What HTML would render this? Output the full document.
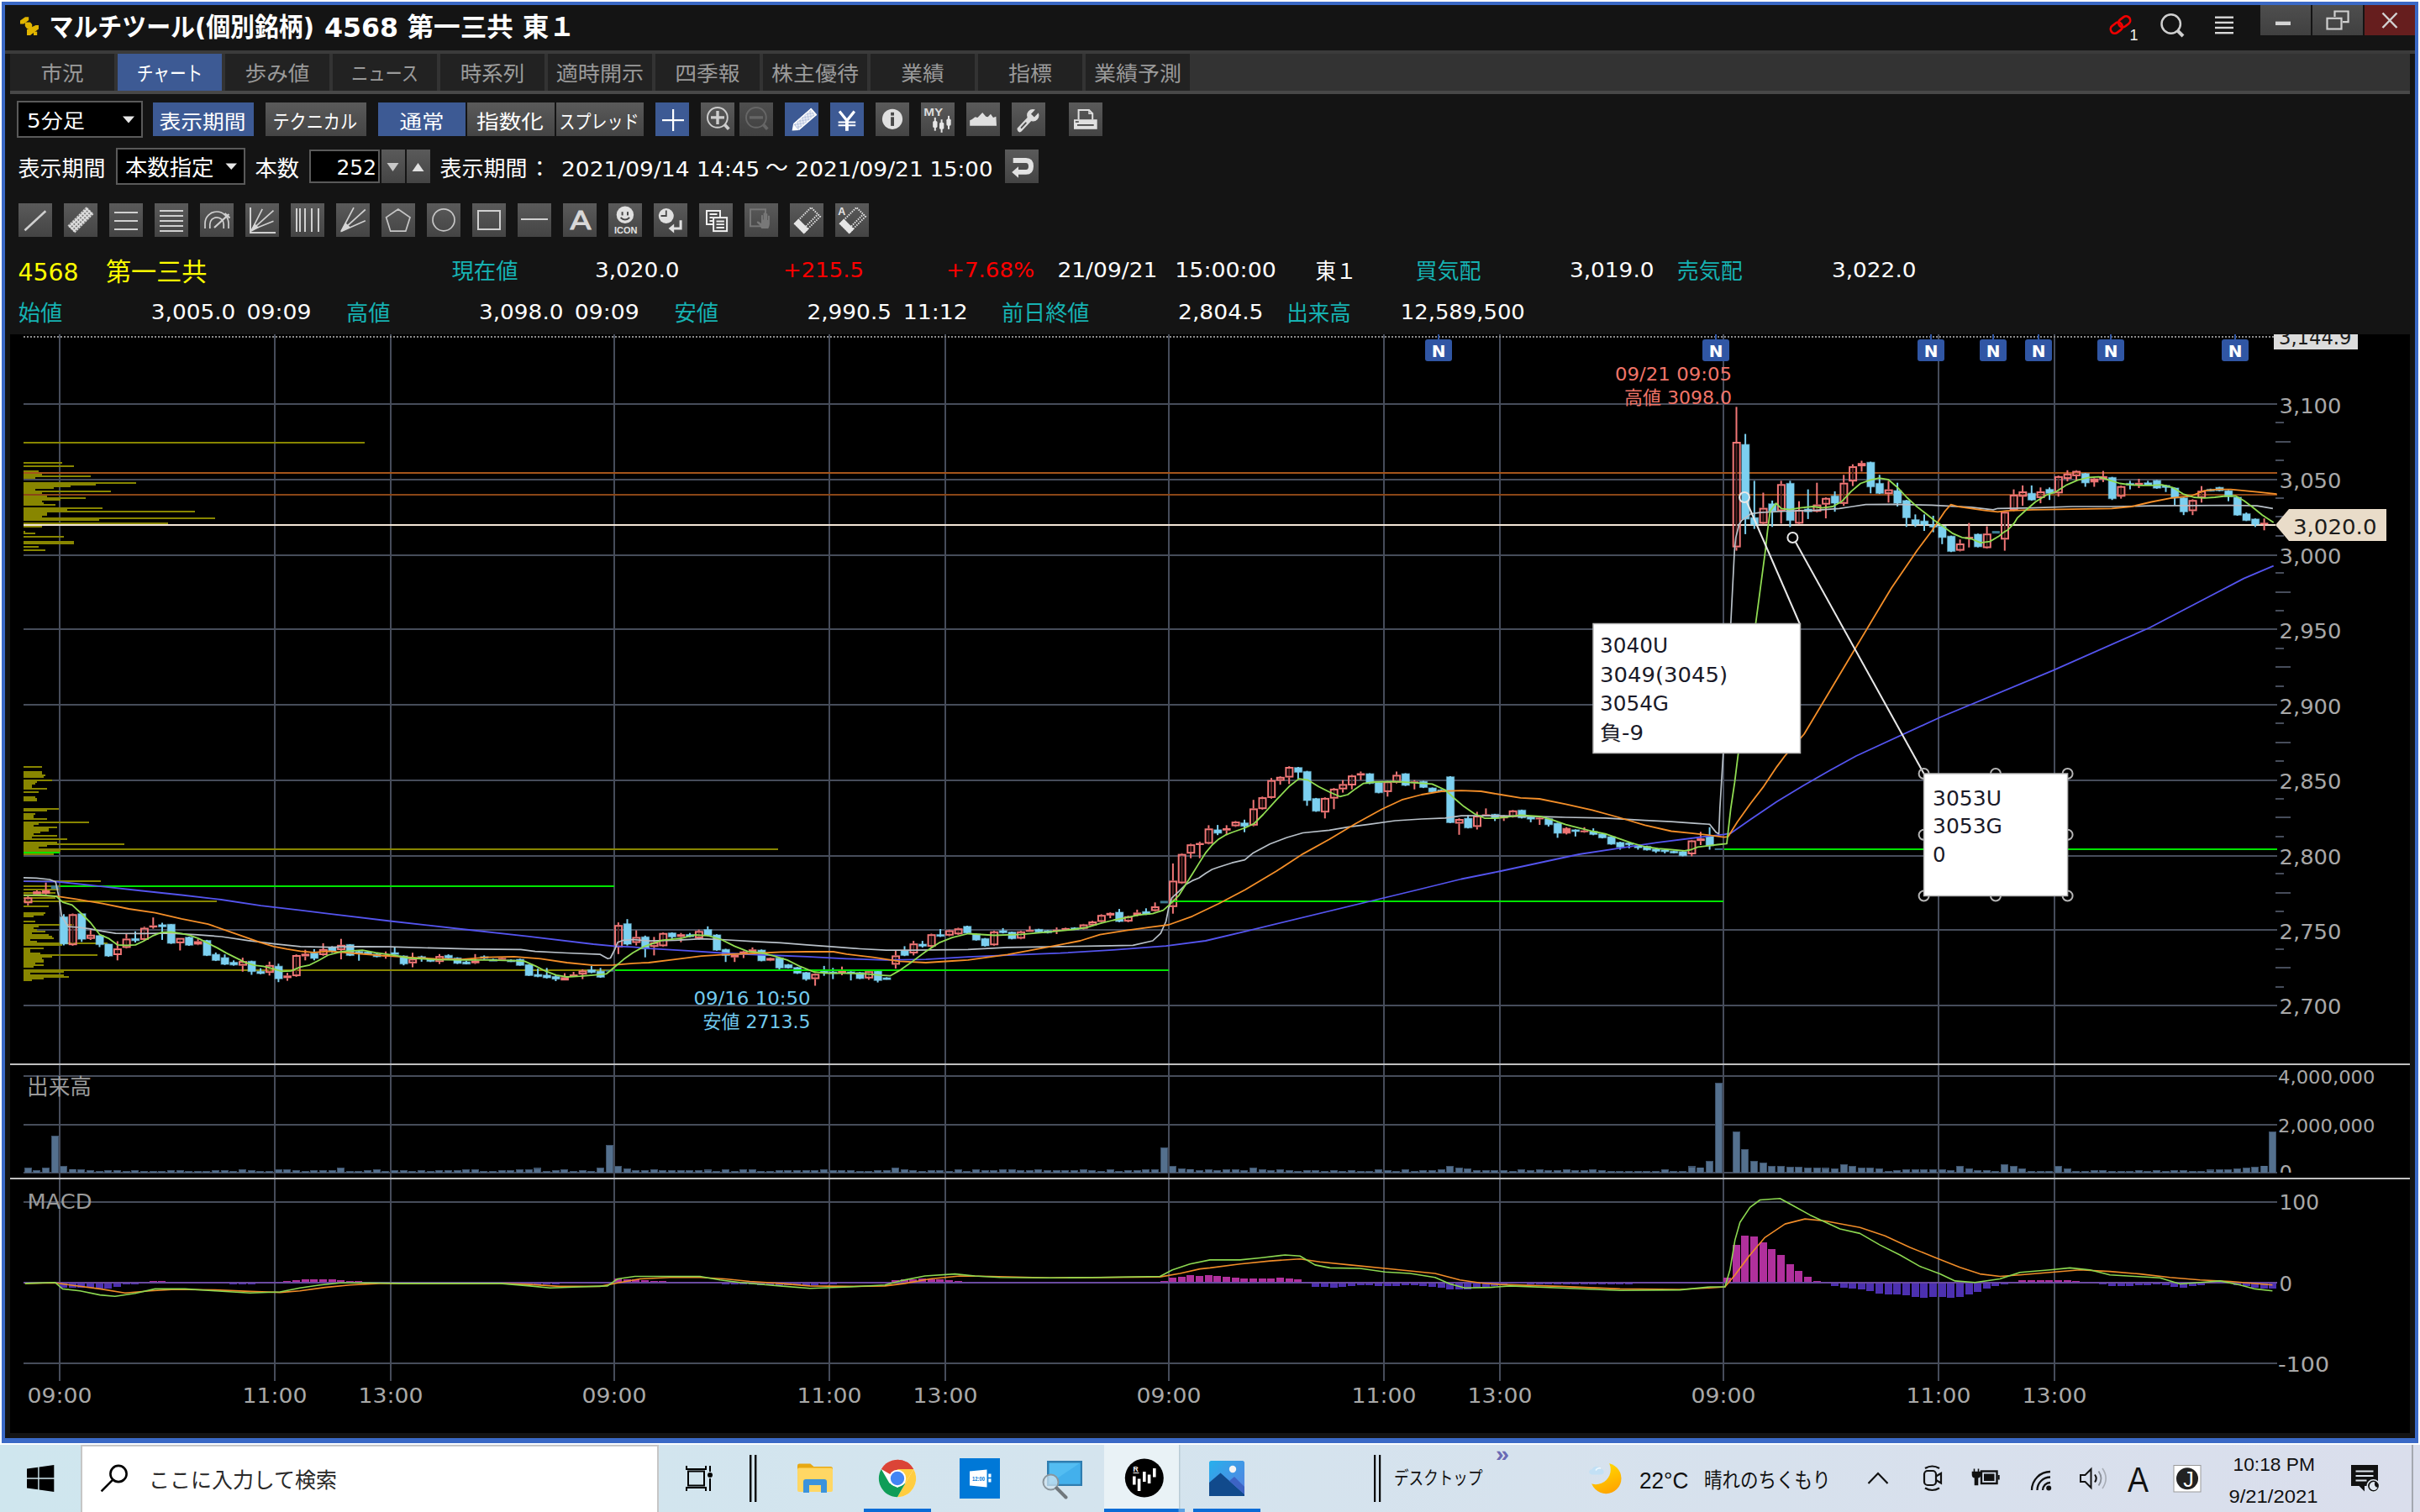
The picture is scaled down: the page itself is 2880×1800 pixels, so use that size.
<!DOCTYPE html>
<html lang="ja"><head><meta charset="utf-8"><title>マルチツール(個別銘柄) 4568 第一三共 東１</title>
<style>
html,body{margin:0;padding:0;background:#fff;overflow:hidden}
body{width:2880px;height:1800px}
svg{display:block}
svg text{white-space:pre}
</style></head><body>
<svg width="2880" height="1800" viewBox="0 0 2880 1800" font-family="'DejaVu Sans','Noto Sans CJK JP',sans-serif">
<rect x="0" y="0" width="2880" height="1800" fill="#ffffff" />
<rect x="2" y="2" width="2876" height="1716" fill="#3a69c6" />
<rect x="6" y="6" width="2868" height="1706" fill="#141414" />
<defs><linearGradient id="gb" x1="0" y1="0" x2="0" y2="1"><stop offset="0" stop-color="#5a5a5a"/><stop offset="1" stop-color="#444444"/></linearGradient><linearGradient id="gbd" x1="0" y1="0" x2="0" y2="1"><stop offset="0" stop-color="#4e4e4e"/><stop offset="1" stop-color="#404040"/></linearGradient><linearGradient id="gtask" x1="0" y1="0" x2="1" y2="0"><stop offset="0" stop-color="#cfe6ee"/><stop offset="0.45" stop-color="#d4e4ee"/><stop offset="1" stop-color="#dadeec"/></linearGradient></defs>
<text x="58.5" y="43.2" font-size="30.7" fill="#fff" font-weight="bold" textLength="315.5" lengthAdjust="spacingAndGlyphs" >マルチツール(個別銘柄)</text>
<text x="386" y="44.2" font-size="32" fill="#fff" font-weight="bold" textLength="88" lengthAdjust="spacingAndGlyphs" >4568</text>
<text x="484.5" y="43.2" font-size="30.7" fill="#fff" font-weight="bold" textLength="126.5" lengthAdjust="spacingAndGlyphs" >第一三共</text>
<text x="622" y="43.2" font-size="30.7" fill="#fff" font-weight="bold" textLength="62.5" lengthAdjust="spacingAndGlyphs" >東１</text>
<rect x="2690" y="6" width="60" height="36" fill="url(#gbd)" />
<rect x="2752" y="6" width="60" height="36" fill="url(#gbd)" />
<rect x="2814" y="6" width="60" height="36" fill="#661e1e" />
<rect x="6" y="60" width="2868" height="4" fill="#3b3b3b" />
<rect x="12" y="64" width="2856" height="44" fill="#333333" />
<rect x="12" y="108" width="2856" height="4" fill="#484848" />
<rect x="12" y="64" width="124" height="44" fill="#222222" />
<rect x="140" y="64" width="124" height="44" fill="#3d5a94" />
<rect x="268" y="64" width="124" height="44" fill="#222222" />
<rect x="396" y="64" width="124" height="44" fill="#222222" />
<rect x="524" y="64" width="124" height="44" fill="#222222" />
<rect x="652" y="64" width="124" height="44" fill="#222222" />
<rect x="780" y="64" width="124" height="44" fill="#222222" />
<rect x="908" y="64" width="124" height="44" fill="#222222" />
<rect x="1036" y="64" width="124" height="44" fill="#222222" />
<rect x="1164" y="64" width="124" height="44" fill="#222222" />
<rect x="1292" y="64" width="124" height="44" fill="#222222" />
<rect x="20" y="120" width="150" height="44" fill="#5a5a5a" />
<rect x="22" y="122" width="146" height="40" fill="#000" />
<rect x="182" y="122" width="120" height="40" fill="#3d5a94" />
<rect x="316" y="122" width="120" height="40" fill="url(#gb)" />
<rect x="450" y="122" width="104" height="40" fill="#3d5a94" />
<rect x="556" y="122" width="104" height="40" fill="url(#gb)" />
<rect x="662" y="122" width="104" height="40" fill="url(#gb)" />
<rect x="780" y="122" width="40" height="40" fill="#3d5a94" />
<rect x="834" y="122" width="40" height="40" fill="url(#gb)" />
<rect x="880" y="122" width="40" height="40" fill="url(#gbd)" />
<rect x="934" y="122" width="40" height="40" fill="#3d5a94" />
<rect x="988" y="122" width="40" height="40" fill="#3d5a94" />
<rect x="1042" y="122" width="40" height="40" fill="url(#gb)" />
<rect x="1096" y="122" width="40" height="40" fill="url(#gb)" />
<rect x="1150" y="122" width="40" height="40" fill="url(#gb)" />
<rect x="1204" y="122" width="40" height="40" fill="url(#gb)" />
<rect x="1272" y="122" width="40" height="40" fill="url(#gb)" />
<rect x="138" y="176" width="154" height="44" fill="#5a5a5a" />
<rect x="140" y="178" width="150" height="40" fill="#000" />
<rect x="368" y="178" width="84" height="40" fill="#5a5a5a" />
<rect x="370" y="180" width="80" height="36" fill="#000" />
<rect x="454" y="178" width="28" height="40" fill="url(#gb)" />
<rect x="484" y="178" width="28" height="40" fill="url(#gb)" />
<rect x="1196" y="178" width="40" height="40" fill="url(#gb)" />
<rect x="22" y="242" width="40" height="40" fill="url(#gb)" />
<rect x="76" y="242" width="40" height="40" fill="url(#gb)" />
<rect x="130" y="242" width="40" height="40" fill="url(#gb)" />
<rect x="184" y="242" width="40" height="40" fill="url(#gb)" />
<rect x="238" y="242" width="40" height="40" fill="url(#gb)" />
<rect x="292" y="242" width="40" height="40" fill="url(#gb)" />
<rect x="346" y="242" width="40" height="40" fill="url(#gb)" />
<rect x="400" y="242" width="40" height="40" fill="url(#gb)" />
<rect x="454" y="242" width="40" height="40" fill="url(#gb)" />
<rect x="508" y="242" width="40" height="40" fill="url(#gb)" />
<rect x="562" y="242" width="40" height="40" fill="url(#gb)" />
<rect x="616" y="242" width="40" height="40" fill="url(#gb)" />
<rect x="670" y="242" width="40" height="40" fill="url(#gb)" />
<rect x="724" y="242" width="40" height="40" fill="url(#gb)" />
<rect x="778" y="242" width="40" height="40" fill="url(#gb)" />
<rect x="832" y="242" width="40" height="40" fill="url(#gb)" />
<rect x="886" y="242" width="40" height="40" fill="url(#gb)" />
<rect x="940" y="242" width="40" height="40" fill="url(#gb)" />
<rect x="994" y="242" width="40" height="40" fill="url(#gb)" />
<text x="74" y="96" font-size="24.4" fill="#9a9a9a" textLength="51.2" lengthAdjust="spacingAndGlyphs" text-anchor="middle" >市況</text>
<text x="202" y="96" font-size="24.4" fill="#fff" textLength="78.5" lengthAdjust="spacingAndGlyphs" text-anchor="middle" >チャート</text>
<text x="330" y="96" font-size="24.4" fill="#9a9a9a" textLength="77" lengthAdjust="spacingAndGlyphs" text-anchor="middle" >歩み値</text>
<text x="458" y="96" font-size="24.4" fill="#9a9a9a" textLength="80" lengthAdjust="spacingAndGlyphs" text-anchor="middle" >ニュース</text>
<text x="586" y="96" font-size="24.4" fill="#9a9a9a" textLength="76.5" lengthAdjust="spacingAndGlyphs" text-anchor="middle" >時系列</text>
<text x="714" y="96" font-size="24.4" fill="#9a9a9a" textLength="104.5" lengthAdjust="spacingAndGlyphs" text-anchor="middle" >適時開示</text>
<text x="842" y="96" font-size="24.4" fill="#9a9a9a" textLength="77.3" lengthAdjust="spacingAndGlyphs" text-anchor="middle" >四季報</text>
<text x="970" y="96" font-size="24.4" fill="#9a9a9a" textLength="104" lengthAdjust="spacingAndGlyphs" text-anchor="middle" >株主優待</text>
<text x="1098" y="96" font-size="24.4" fill="#9a9a9a" textLength="51.4" lengthAdjust="spacingAndGlyphs" text-anchor="middle" >業績</text>
<text x="1226" y="96" font-size="24.4" fill="#9a9a9a" textLength="52" lengthAdjust="spacingAndGlyphs" text-anchor="middle" >指標</text>
<text x="1354" y="96" font-size="24.4" fill="#9a9a9a" textLength="104" lengthAdjust="spacingAndGlyphs" text-anchor="middle" >業績予測</text>
<text x="32" y="151.6" font-size="22.5" fill="#fff" textLength="69" lengthAdjust="spacingAndGlyphs" >5分足</text>
<text x="189.5" y="153.2" font-size="22.5" fill="#fff" textLength="103" lengthAdjust="spacingAndGlyphs" >表示期間</text>
<text x="324.5" y="153.2" font-size="22.5" fill="#fff" textLength="100.5" lengthAdjust="spacingAndGlyphs" >テクニカル</text>
<text x="475.5" y="153.2" font-size="22.5" fill="#fff" textLength="53" lengthAdjust="spacingAndGlyphs" >通常</text>
<text x="567" y="153.2" font-size="22.5" fill="#fff" textLength="80" lengthAdjust="spacingAndGlyphs" >指数化</text>
<text x="665.5" y="153.2" font-size="22.5" fill="#fff" textLength="95" lengthAdjust="spacingAndGlyphs" >スプレッド</text>
<path d="M146,138.5 h14 l-7,8 z" fill="#e8e8e8"/>
<text x="21.5" y="210.3" font-size="25.6" fill="#fff" textLength="104" lengthAdjust="spacingAndGlyphs" >表示期間</text>
<text x="149" y="208.5" font-size="25.6" fill="#fff" textLength="105.5" lengthAdjust="spacingAndGlyphs" >本数指定</text>
<path d="M268.5,194.5 h13.5 l-6.75,7.5 z" fill="#e8e8e8"/>
<text x="303.5" y="210.3" font-size="25.6" fill="#fff" textLength="52.5" lengthAdjust="spacingAndGlyphs" >本数</text>
<text x="400.5" y="207.5" font-size="24.6" fill="#fff" textLength="47.5" lengthAdjust="spacingAndGlyphs" >252</text>
<path d="M460.5,194 h14 l-7,10 z" fill="#c8c8c8"/>
<path d="M490.5,204 h14 l-7,-10 z" fill="#e0e0e0"/>
<text x="523.5" y="210.3" font-size="25.6" fill="#fff" textLength="104" lengthAdjust="spacingAndGlyphs" >表示期間</text>
<text x="629.5" y="210.3" font-size="25.6" fill="#fff" >：</text>
<text x="668" y="209.5" font-size="24.6" fill="#fff" textLength="152.5" lengthAdjust="spacingAndGlyphs" >2021/09/14</text>
<text x="829" y="209.5" font-size="24.6" fill="#fff" textLength="75" lengthAdjust="spacingAndGlyphs" >14:45</text>
<text x="911" y="209" font-size="25.6" fill="#fff" textLength="27" lengthAdjust="spacingAndGlyphs" >～</text>
<text x="946.3" y="209.5" font-size="24.6" fill="#fff" textLength="152.5" lengthAdjust="spacingAndGlyphs" >2021/09/21</text>
<text x="1106.5" y="209.5" font-size="24.6" fill="#fff" textLength="75" lengthAdjust="spacingAndGlyphs" >15:00</text>
<text x="21.5" y="333.7" font-size="28" fill="#ffff00" textLength="72" lengthAdjust="spacingAndGlyphs" >4568</text>
<text x="126" y="334" font-size="29.6" fill="#ffff00" textLength="120.5" lengthAdjust="spacingAndGlyphs" >第一三共</text>
<text x="537.5" y="331.5" font-size="26" fill="#16b2b2" textLength="79" lengthAdjust="spacingAndGlyphs" >現在値</text>
<text x="708" y="330" font-size="24.6" fill="#fff" textLength="100.5" lengthAdjust="spacingAndGlyphs" >3,020.0</text>
<text x="932" y="330" font-size="24.6" fill="#ff0000" textLength="96" lengthAdjust="spacingAndGlyphs" >+215.5</text>
<text x="1126" y="330" font-size="24.6" fill="#ff0000" textLength="105" lengthAdjust="spacingAndGlyphs" >+7.68%</text>
<text x="1258.4" y="330" font-size="24.6" fill="#fff" textLength="119" lengthAdjust="spacingAndGlyphs" >21/09/21</text>
<text x="1398.3" y="330" font-size="24.6" fill="#fff" textLength="120.5" lengthAdjust="spacingAndGlyphs" >15:00:00</text>
<text x="1565.5" y="331.5" font-size="26" fill="#fff" textLength="49" lengthAdjust="spacingAndGlyphs" >東１</text>
<text x="1684.5" y="331.5" font-size="26" fill="#16b2b2" textLength="78" lengthAdjust="spacingAndGlyphs" >買気配</text>
<text x="1868" y="330" font-size="24.6" fill="#fff" textLength="100.5" lengthAdjust="spacingAndGlyphs" >3,019.0</text>
<text x="1995.8" y="331.5" font-size="26" fill="#16b2b2" textLength="78" lengthAdjust="spacingAndGlyphs" >売気配</text>
<text x="2180" y="330" font-size="24.6" fill="#fff" textLength="100.5" lengthAdjust="spacingAndGlyphs" >3,022.0</text>
<text x="21.8" y="381.5" font-size="26" fill="#16b2b2" textLength="52.5" lengthAdjust="spacingAndGlyphs" >始値</text>
<text x="179.8" y="380" font-size="24.6" fill="#fff" textLength="100.5" lengthAdjust="spacingAndGlyphs" >3,005.0</text>
<text x="293.6" y="380" font-size="24.6" fill="#fff" textLength="77" lengthAdjust="spacingAndGlyphs" >09:09</text>
<text x="411.9" y="381.5" font-size="26" fill="#16b2b2" textLength="52.5" lengthAdjust="spacingAndGlyphs" >高値</text>
<text x="570" y="380" font-size="24.6" fill="#fff" textLength="100.5" lengthAdjust="spacingAndGlyphs" >3,098.0</text>
<text x="683.8" y="380" font-size="24.6" fill="#fff" textLength="77" lengthAdjust="spacingAndGlyphs" >09:09</text>
<text x="802.5" y="381.5" font-size="26" fill="#16b2b2" textLength="52.5" lengthAdjust="spacingAndGlyphs" >安値</text>
<text x="960.5" y="380" font-size="24.6" fill="#fff" textLength="100.5" lengthAdjust="spacingAndGlyphs" >2,990.5</text>
<text x="1074.7" y="380" font-size="24.6" fill="#fff" textLength="77" lengthAdjust="spacingAndGlyphs" >11:12</text>
<text x="1192" y="381.5" font-size="26" fill="#16b2b2" textLength="104.5" lengthAdjust="spacingAndGlyphs" >前日終値</text>
<text x="1402" y="380" font-size="24.6" fill="#fff" textLength="101.5" lengthAdjust="spacingAndGlyphs" >2,804.5</text>
<text x="1531.2" y="381.5" font-size="26" fill="#16b2b2" textLength="76.5" lengthAdjust="spacingAndGlyphs" >出来高</text>
<text x="1666.8" y="380" font-size="24.6" fill="#fff" textLength="148" lengthAdjust="spacingAndGlyphs" >12,589,500</text>
<g fill="#e0b400"><path d="M24,24.6 L30,20.2 H34.2 V24 L28.2,28.4 H24 Z"/><path d="M29.8,26.4 H36 L38.2,29 V34 H32 L29.8,31 Z"/><path d="M32,35 L42.5,30 H46 V34.5 L36,42 H32 Z"/><path d="M40,37.6 H44.2 V42 H40 Z"/></g>
<g stroke="#f00000" stroke-width="2.7" fill="none" transform="translate(2523.5,29.5) rotate(-38)"><rect x="-13.5" y="-5" width="15" height="10" rx="5"/><rect x="-1.5" y="-5" width="15" height="10" rx="5"/></g>
<text x="2534.5" y="48" font-size="18" fill="#f0f0f0" font-family="'Liberation Sans','Noto Sans CJK JP',sans-serif" >1</text>
<g stroke="#cfcfcf" stroke-width="2.5" fill="none"><circle cx="2583.7" cy="28.5" r="11.2"/><path d="M2591.5,36.5 L2598,43" stroke-width="4"/></g>
<rect x="2636" y="19.5" width="22" height="2.4" fill="#d8d8d8" />
<rect x="2636" y="25.7" width="22" height="2.4" fill="#d8d8d8" />
<rect x="2636" y="31.8" width="22" height="2.4" fill="#d8d8d8" />
<rect x="2636" y="38" width="22" height="2.4" fill="#d8d8d8" />
<rect x="2708" y="25.6" width="18" height="4.4" fill="#d4d4d4" />
<g stroke="#cfcfcf" stroke-width="2.2" fill="none"><path d="M2778.5,20 V13.5 H2794.6 V26.2 H2788"/><rect x="2769.5" y="21.8" width="17" height="12.7"/></g>
<g stroke="#d2d2d2" stroke-width="2.5" stroke-linecap="butt"><path d="M2835.5,15.5 L2852.5,33 M2852.5,15.5 L2835.5,33"/></g>
<rect x="788" y="142" width="26" height="2.2" fill="#fff" />
<rect x="800" y="130" width="2.2" height="26" fill="#fff" />
<g stroke="#cdcdcd" fill="none"><circle cx="853.9" cy="139.9" r="11.9" stroke-width="1.9"/><path d="M846,139.9 h16 M854,132 v16" stroke-width="3.4"/><path d="M862.3,148.3 L867.3,153.8" stroke-width="3.8"/></g>
<g stroke="#666666" fill="none"><circle cx="899.9" cy="139.9" r="11.9" stroke-width="1.9"/><path d="M892,139.9 h16" stroke-width="3.4"/><path d="M908.3,148.3 L913.3,153.8" stroke-width="3.8"/></g>
<defs><pattern id="hat" width="2" height="2" patternUnits="userSpaceOnUse"><rect width="2" height="2" fill="#fff"/><rect width="1" height="1" fill="#a4b4d6"/><rect x="1" y="1" width="1" height="1" fill="#a4b4d6"/></pattern></defs>
<g transform="translate(942.6,155.4) rotate(-41)"><path d="M0,0 L6.5,-5.2 L6.5,5.2 Z" fill="#fff"/><rect x="6.5" y="-5.2" width="28" height="10.4" fill="url(#hat)"/><rect x="6.5" y="-5.2" width="28" height="1.3" fill="#fff"/><rect x="6.5" y="3.9" width="28" height="1.3" fill="#fff"/><rect x="33" y="-5.2" width="1.8" height="10.4" fill="#fff"/></g>
<g stroke="#fff" fill="none"><path d="M999,132.6 L1007.9,143.6 L1016.8,132.6" stroke-width="3.2"/><path d="M1007.9,142.5 V155.8" stroke-width="3.8"/><path d="M997.6,145.5 h20.6 M997.6,149.2 h20.6" stroke-width="2"/></g>
<circle cx="1062" cy="141.8" r="12.1" fill="#e0e0e0"/>
<rect x="1060.1" y="133.8" width="3.9" height="3.8" fill="#484848" />
<rect x="1060.1" y="139.3" width="3.9" height="10.6" fill="#484848" />
<text x="1099.3" y="137.7" font-size="12.8" fill="#dcdcdc" font-family="'Liberation Sans','Noto Sans CJK JP',sans-serif" font-weight="bold" textLength="23" lengthAdjust="spacingAndGlyphs" >MY</text>
<rect x="1111.8" y="139.9" width="2" height="15.8" fill="#e6e6e6" />
<rect x="1110.2" y="144" width="5.3" height="8.0" rx="1.6" fill="#e6e6e6"/>
<rect x="1119.6" y="142.2" width="2" height="15.6" fill="#e6e6e6" />
<rect x="1118" y="145.7" width="5.3" height="8.1" rx="1.6" fill="#e6e6e6"/>
<rect x="1128" y="137.9" width="2" height="15.9" fill="#e6e6e6" />
<rect x="1126.4" y="141.6" width="5.3" height="8.1" rx="1.6" fill="#e6e6e6"/>
<path d="M1154.2,149.7 V143.3 L1156.5,142.2 L1160.5,139.3 L1163.4,139.9 L1169.2,134.1 L1173.3,138.7 L1175.6,139.3 L1179,135.8 L1182,139.9 L1185.4,138.7 L1186,149.7 Z" fill="#e0e0e0"/>
<g transform="translate(1223.5,143.5) rotate(-47)"><path d="M-15,-3.1 H4 V3.1 H-15 q-2.6,-0.3 -2.6,-3.1 q0,-2.8 2.6,-3.1 z" fill="#dcdcdc"/><circle cx="8.5" cy="0" r="7.2" fill="#dcdcdc"/><rect x="8" y="-2.7" width="9" height="5.4" fill="#4f4f4f"/><rect x="-12.5" y="-1" width="9.5" height="2" rx="1" fill="#4f4f4f"/></g>
<path d="M1283.6,142.2 V131 H1296 L1300.2,135.2 V142.2" fill="none" stroke="#e0e0e0" stroke-width="2"/><path d="M1296,131 V135.2 H1300.2" fill="none" stroke="#e0e0e0" stroke-width="1.4"/>
<rect x="1278" y="142.2" width="27.7" height="11.6" fill="#e0e0e0" />
<rect x="1282" y="148" width="19.7" height="1.8" fill="#484848" />
<rect x="1279.8" y="144.2" width="4" height="1.6" fill="#484848" />
<path d="M1205.7,188 H1221 Q1230,188 1230,198 Q1230,207.8 1221,207.8 H1212 V211.8 L1204.2,205 L1212,198.2 V201.9 H1221 Q1224,201.9 1224,198 Q1224,194 1221,194 H1205.7 Z" fill="#e2e2e2"/>
<g stroke="#d0d0d0" fill="none" stroke-width="2.2">
<path d="M29.5,274.3 L54.3,251.2" stroke-width="2.6"/>
</g>
<defs><pattern id="rul" width="3.6" height="3.6" patternUnits="userSpaceOnUse"><rect width="3.6" height="3.6" fill="#dcdcdc"/><rect x="1" y="1" width="1.5" height="1.5" fill="#4e4e4e"/></pattern></defs>
<g transform="translate(96,261.8) rotate(-45)"><rect x="-16" y="-6.2" width="32" height="12.4" fill="url(#rul)"/></g>
<g stroke="#d0d0d0" fill="none" stroke-width="2.3" shape-rendering="crispEdges">
<path d="M136,253 H164"/>
<path d="M136,263 H164"/>
<path d="M136,273 H164"/>
<path d="M190,251 H218"/>
<path d="M190,257 H218"/>
<path d="M190,263 H218"/>
<path d="M190,269 H218"/>
<path d="M190,275 H218"/>
<path d="M353,248 V275.8" stroke-width="2"/>
<path d="M356.8,248 V275.8" stroke-width="2"/>
<path d="M363,248 V275.8" stroke-width="2"/>
<path d="M371,248 V275.8" stroke-width="2"/>
<path d="M379,248 V275.8" stroke-width="2"/>
<rect x="569" y="250.8" width="26" height="22.4"/>
<path d="M620,261 H652"/>
<path d="M297.6,246.6 V276.7 H327.8" stroke-width="2.2"/>
</g>
<g stroke="#d0d0d0" fill="none" stroke-width="1.7">
<path d="M244,272 V266 A14,14 0 0 1 272,266 V272" /><path d="M249.8,272 V267 A8.2,8.2 0 0 1 266.2,267 V272"/><path d="M255,271 L272.5,255 M267.5,254 L273.5,259.5" stroke-width="2.2"/>
<path d="M299.5,273.8 L312.2,248.9 M299.5,273.8 L325.5,250.6 M299.5,273.8 L325.5,263.3"/><path d="M297,277 L303,266 L308,271 Z" fill="#d6d6d6" stroke="none"/>
<path d="M406,275.5 L421,247.1 M406,275.5 L434.8,249.5 M406,275.5 L434.8,262.8"/><path d="M405,276.5 L411,265 L417,270.5 Z" fill="#d6d6d6" stroke="none"/>
<path d="M473.8,249 L488,258.8 L482.8,275.2 H464.7 L459.6,258.8 Z" stroke="#c6c6c6"/>
<circle cx="528" cy="261.8" r="13" stroke="#c6c6c6"/>
</g>
<text x="690.9" y="273.4" font-size="31" fill="#d8d8d8" textLength="25.5" lengthAdjust="spacingAndGlyphs" text-anchor="middle" stroke="#d8d8d8" stroke-width="0.8">A</text>
<circle cx="743.9" cy="255.8" r="10.2" fill="#e0e0e0"/>
<rect x="739.6" y="252.2" width="2" height="4.2" fill="#484848" />
<rect x="746" y="252.2" width="2" height="4.2" fill="#484848" />
<path d="M738.6,259 q5.3,5 10.6,0" fill="none" stroke="#484848" stroke-width="2"/>
<text x="731" y="278" font-size="10.6" fill="#e2e2e2" font-family="'Liberation Sans','Noto Sans CJK JP',sans-serif" font-weight="bold" textLength="27.5" lengthAdjust="spacingAndGlyphs" >ICON</text>
<circle cx="792.8" cy="257" r="9" fill="#e0e0e0"/><path d="M792.8,250.5 V257 H786.5" fill="none" stroke="#484848" stroke-width="1.8"/>
<path d="M810.1,262.2 V272 H801" fill="none" stroke="#e0e0e0" stroke-width="3"/><path d="M795.6,272 L802.2,266.6 V277.4 Z" fill="#e0e0e0"/>
<g fill="#4c4c4c" stroke="#efefef" stroke-width="2"><rect x="841" y="251" width="16" height="16"/><rect x="849.1" y="259.1" width="16" height="16"/></g>
<g stroke="#efefef" stroke-width="1.8"><path d="M844.5,255 h9 M844.5,259 h3.5 M844.5,263 h3.5 M852.5,263.5 h9.4 M852.5,267.2 h9.4 M852.5,271 h9.4"/></g>
<rect x="893" y="249.3" width="18" height="20" fill="none" stroke="#767676" stroke-width="2"/>
<path d="M904,268 q-3,-2.6 -3.4,-3.6 q0.8,-1.6 3,-0.2 l2.4,1.8 v-9.5 q0.9,-1.6 1.9,0 v5 h0.7 v-7.5 q1,-1.6 2,0 v7.5 h0.7 v-6.8 q1,-1.6 2,0 v7.2 h0.7 v-4.8 q1,-1.4 1.9,0 v9.2 q0,3 -1.6,5.6 h-8 z" fill="#787878"/>
<g transform="translate(961,262) rotate(-45)"><rect x="-13.6" y="-7.6" width="27.2" height="15.2" fill="none" stroke="#e4e4e4" stroke-width="2" stroke-dasharray="1.5 1.3"/><path d="M-6.6,3.9 H13.6" stroke="#e4e4e4" stroke-width="2" stroke-dasharray="1.5 1.3" fill="none"/><rect x="-14.6" y="-8.6" width="8" height="17.2" fill="#e6e6e6"/></g>
<g transform="translate(1015,262) rotate(-45)"><rect x="-13.6" y="-7.6" width="27.2" height="15.2" fill="none" stroke="#e4e4e4" stroke-width="2" stroke-dasharray="1.5 1.3"/><path d="M-6.6,3.9 H13.6" stroke="#e4e4e4" stroke-width="2" stroke-dasharray="1.5 1.3" fill="none"/><rect x="-14.6" y="-8.6" width="8" height="17.2" fill="#e6e6e6"/></g>
<text x="997.3" y="256" font-size="12.5" fill="#e6e6e6" font-family="'Liberation Sans','Noto Sans CJK JP',sans-serif" font-weight="bold" >A</text>
<g id="chart">
<rect x="12" y="398" width="2856" height="1308" fill="#000" />
<g shape-rendering="crispEdges">
<rect x="70" y="398" width="2" height="1246" fill="#464c5a" />
<rect x="326" y="398" width="2" height="1246" fill="#464c5a" />
<rect x="464" y="398" width="2" height="1246" fill="#464c5a" />
<rect x="730" y="398" width="2" height="1246" fill="#464c5a" />
<rect x="986" y="398" width="2" height="1246" fill="#464c5a" />
<rect x="1124" y="398" width="2" height="1246" fill="#464c5a" />
<rect x="1390" y="398" width="2" height="1246" fill="#464c5a" />
<rect x="1646" y="398" width="2" height="1246" fill="#464c5a" />
<rect x="1784" y="398" width="2" height="1246" fill="#464c5a" />
<rect x="2050" y="398" width="2" height="1246" fill="#464c5a" />
<rect x="2306" y="398" width="2" height="1246" fill="#464c5a" />
<rect x="2444" y="398" width="2" height="1246" fill="#464c5a" />
<rect x="28" y="480" width="2682" height="2" fill="#464c5a" />
<rect x="28" y="570" width="2682" height="2" fill="#464c5a" />
<rect x="28" y="660" width="2682" height="2" fill="#464c5a" />
<rect x="28" y="748" width="2682" height="2" fill="#464c5a" />
<rect x="28" y="838" width="2682" height="2" fill="#464c5a" />
<rect x="28" y="928" width="2682" height="2" fill="#464c5a" />
<rect x="28" y="1018" width="2682" height="2" fill="#464c5a" />
<rect x="28" y="1106" width="2682" height="2" fill="#464c5a" />
<rect x="28" y="1196" width="2682" height="2" fill="#464c5a" />
<rect x="2708" y="502" width="10" height="2" fill="#464c5a" />
<rect x="2708" y="525" width="18" height="2" fill="#464c5a" />
<rect x="2708" y="547" width="10" height="2" fill="#464c5a" />
<rect x="2708" y="592" width="10" height="2" fill="#464c5a" />
<rect x="2708" y="614" width="18" height="2" fill="#464c5a" />
<rect x="2708" y="637" width="10" height="2" fill="#464c5a" />
<rect x="2708" y="681" width="10" height="2" fill="#464c5a" />
<rect x="2708" y="704" width="18" height="2" fill="#464c5a" />
<rect x="2708" y="726" width="10" height="2" fill="#464c5a" />
<rect x="2708" y="771" width="10" height="2" fill="#464c5a" />
<rect x="2708" y="793" width="18" height="2" fill="#464c5a" />
<rect x="2708" y="816" width="10" height="2" fill="#464c5a" />
<rect x="2708" y="860" width="10" height="2" fill="#464c5a" />
<rect x="2708" y="883" width="18" height="2" fill="#464c5a" />
<rect x="2708" y="905" width="10" height="2" fill="#464c5a" />
<rect x="2708" y="950" width="10" height="2" fill="#464c5a" />
<rect x="2708" y="972" width="18" height="2" fill="#464c5a" />
<rect x="2708" y="995" width="10" height="2" fill="#464c5a" />
<rect x="2708" y="1039" width="10" height="2" fill="#464c5a" />
<rect x="2708" y="1062" width="18" height="2" fill="#464c5a" />
<rect x="2708" y="1084" width="10" height="2" fill="#464c5a" />
<rect x="2708" y="1129" width="10" height="2" fill="#464c5a" />
<rect x="2708" y="1151" width="18" height="2" fill="#464c5a" />
<rect x="2708" y="1174" width="10" height="2" fill="#464c5a" />
<rect x="28" y="1280" width="2682" height="2" fill="#464c5a" />
<rect x="28" y="1338" width="2682" height="2" fill="#464c5a" />
<rect x="28" y="1430" width="2682" height="2" fill="#464c5a" />
<rect x="28" y="1526" width="2682" height="2" fill="#464c5a" />
<rect x="28" y="1622" width="2682" height="2" fill="#464c5a" />
<path d="M28,401 H2706" stroke="#8c8c8c" stroke-width="2" stroke-dasharray="2 2" fill="none"/>
</g>
<g shape-rendering="crispEdges">
<rect x="28" y="1395" width="2682" height="2" fill="#464c5a" />
<rect x="28" y="526" width="406" height="2" fill="#888600" />
<rect x="28" y="550" width="46" height="2" fill="#888600" />
<rect x="28" y="554" width="60" height="2" fill="#888600" />
<rect x="28" y="560" width="18" height="2" fill="#888600" />
<rect x="28" y="564" width="22" height="2" fill="#888600" />
<rect x="28" y="566" width="80" height="2" fill="#888600" />
<rect x="28" y="568" width="14" height="2" fill="#888600" />
<rect x="28" y="574" width="134" height="2" fill="#888600" />
<rect x="28" y="576" width="86" height="2" fill="#888600" />
<rect x="28" y="578" width="56" height="2" fill="#888600" />
<rect x="28" y="580" width="36" height="2" fill="#888600" />
<rect x="28" y="582" width="14" height="2" fill="#888600" />
<rect x="28" y="584" width="104" height="2" fill="#888600" />
<rect x="28" y="586" width="22" height="2" fill="#888600" />
<rect x="28" y="588" width="90" height="2" fill="#888600" />
<rect x="28" y="590" width="28" height="2" fill="#888600" />
<rect x="28" y="592" width="74" height="2" fill="#888600" />
<rect x="28" y="594" width="44" height="2" fill="#888600" />
<rect x="28" y="596" width="22" height="2" fill="#888600" />
<rect x="28" y="598" width="24" height="2" fill="#888600" />
<rect x="28" y="600" width="38" height="2" fill="#888600" />
<rect x="28" y="604" width="94" height="2" fill="#888600" />
<rect x="28" y="606" width="52" height="2" fill="#888600" />
<rect x="28" y="608" width="204" height="2" fill="#888600" />
<rect x="28" y="610" width="28" height="2" fill="#888600" />
<rect x="28" y="612" width="28" height="2" fill="#888600" />
<rect x="28" y="614" width="22" height="2" fill="#888600" />
<rect x="28" y="616" width="228" height="2" fill="#888600" />
<rect x="28" y="618" width="90" height="2" fill="#888600" />
<rect x="28" y="622" width="172" height="2" fill="#888600" />
<rect x="28" y="626" width="22" height="2" fill="#888600" />
<rect x="28" y="632" width="2" height="2" fill="#888600" />
<rect x="28" y="634" width="14" height="2" fill="#888600" />
<rect x="28" y="638" width="48" height="2" fill="#888600" />
<rect x="28" y="644" width="60" height="2" fill="#888600" />
<rect x="28" y="646" width="60" height="2" fill="#888600" />
<rect x="28" y="650" width="18" height="2" fill="#888600" />
<rect x="28" y="654" width="26" height="2" fill="#888600" />
<rect x="28" y="912" width="22" height="2" fill="#888600" />
<rect x="28" y="918" width="22" height="2" fill="#888600" />
<rect x="28" y="920" width="22" height="2" fill="#888600" />
<rect x="28" y="922" width="26" height="2" fill="#888600" />
<rect x="28" y="924" width="24" height="2" fill="#888600" />
<rect x="28" y="928" width="34" height="2" fill="#888600" />
<rect x="28" y="930" width="16" height="2" fill="#888600" />
<rect x="28" y="932" width="14" height="2" fill="#888600" />
<rect x="28" y="934" width="10" height="2" fill="#888600" />
<rect x="28" y="936" width="10" height="2" fill="#888600" />
<rect x="28" y="938" width="28" height="2" fill="#888600" />
<rect x="28" y="942" width="18" height="2" fill="#888600" />
<rect x="28" y="948" width="14" height="2" fill="#888600" />
<rect x="28" y="950" width="16" height="2" fill="#888600" />
<rect x="28" y="952" width="16" height="2" fill="#888600" />
<rect x="28" y="962" width="42" height="2" fill="#888600" />
<rect x="28" y="964" width="28" height="2" fill="#888600" />
<rect x="28" y="968" width="14" height="2" fill="#888600" />
<rect x="28" y="970" width="12" height="2" fill="#888600" />
<rect x="28" y="972" width="12" height="2" fill="#888600" />
<rect x="28" y="974" width="28" height="2" fill="#888600" />
<rect x="28" y="978" width="78" height="2" fill="#888600" />
<rect x="28" y="980" width="18" height="2" fill="#888600" />
<rect x="28" y="982" width="12" height="2" fill="#888600" />
<rect x="28" y="984" width="40" height="2" fill="#888600" />
<rect x="28" y="986" width="30" height="2" fill="#888600" />
<rect x="28" y="988" width="30" height="2" fill="#888600" />
<rect x="28" y="990" width="20" height="2" fill="#888600" />
<rect x="28" y="992" width="12" height="2" fill="#888600" />
<rect x="28" y="994" width="40" height="2" fill="#888600" />
<rect x="28" y="996" width="10" height="2" fill="#888600" />
<rect x="28" y="998" width="52" height="2" fill="#888600" />
<rect x="28" y="1002" width="40" height="2" fill="#888600" />
<rect x="28" y="1004" width="120" height="2" fill="#888600" />
<rect x="28" y="1006" width="28" height="2" fill="#888600" />
<rect x="28" y="1008" width="18" height="2" fill="#888600" />
<rect x="28" y="1010" width="898" height="2" fill="#888600" />
<rect x="28" y="1012" width="44" height="2" fill="#888600" />
<rect x="28" y="1016" width="36" height="2" fill="#888600" />
<rect x="28" y="1048" width="92" height="2" fill="#888600" />
<rect x="28" y="1054" width="44" height="2" fill="#888600" />
<rect x="28" y="1058" width="42" height="2" fill="#888600" />
<rect x="28" y="1062" width="38" height="2" fill="#888600" />
<rect x="28" y="1068" width="38" height="2" fill="#888600" />
<rect x="28" y="1072" width="230" height="2" fill="#888600" />
<rect x="28" y="1078" width="30" height="2" fill="#888600" />
<rect x="28" y="1086" width="26" height="2" fill="#888600" />
<rect x="28" y="1088" width="24" height="2" fill="#888600" />
<rect x="28" y="1090" width="12" height="2" fill="#888600" />
<rect x="28" y="1096" width="14" height="2" fill="#888600" />
<rect x="28" y="1100" width="60" height="2" fill="#888600" />
<rect x="28" y="1102" width="18" height="2" fill="#888600" />
<rect x="28" y="1104" width="12" height="2" fill="#888600" />
<rect x="28" y="1106" width="16" height="2" fill="#888600" />
<rect x="28" y="1108" width="26" height="2" fill="#888600" />
<rect x="28" y="1110" width="10" height="2" fill="#888600" />
<rect x="28" y="1112" width="30" height="2" fill="#888600" />
<rect x="28" y="1114" width="34" height="2" fill="#888600" />
<rect x="28" y="1116" width="36" height="2" fill="#888600" />
<rect x="28" y="1118" width="8" height="2" fill="#888600" />
<rect x="28" y="1120" width="16" height="2" fill="#888600" />
<rect x="28" y="1122" width="100" height="2" fill="#888600" />
<rect x="28" y="1124" width="46" height="2" fill="#888600" />
<rect x="28" y="1128" width="24" height="2" fill="#888600" />
<rect x="28" y="1130" width="8" height="2" fill="#888600" />
<rect x="28" y="1132" width="8" height="2" fill="#888600" />
<rect x="28" y="1134" width="20" height="2" fill="#888600" />
<rect x="28" y="1136" width="88" height="2" fill="#888600" />
<rect x="28" y="1138" width="34" height="2" fill="#888600" />
<rect x="28" y="1140" width="22" height="2" fill="#888600" />
<rect x="28" y="1142" width="24" height="2" fill="#888600" />
<rect x="28" y="1144" width="24" height="2" fill="#888600" />
<rect x="28" y="1146" width="14" height="2" fill="#888600" />
<rect x="28" y="1148" width="24" height="2" fill="#888600" />
<rect x="28" y="1150" width="12" height="2" fill="#888600" />
<rect x="28" y="1154" width="702" height="2" fill="#888600" />
<rect x="28" y="1156" width="48" height="2" fill="#888600" />
<rect x="28" y="1158" width="8" height="2" fill="#888600" />
<rect x="28" y="1160" width="48" height="2" fill="#888600" />
<rect x="28" y="1162" width="54" height="2" fill="#888600" />
<rect x="28" y="1164" width="24" height="2" fill="#888600" />
<rect x="28" y="1166" width="10" height="2" fill="#888600" />
<rect x="28" y="562" width="2682" height="2" fill="#a4541a" />
<rect x="28" y="588" width="2682" height="2" fill="#8a4616" />
<rect x="28" y="624" width="2680" height="2" fill="#f4e6d6" />
</g>
<g><rect x="32.3" y="1067.1" width="2" height="1.3" fill="#f07676"/><rect x="32.3" y="1075.3" width="2" height="2.5" fill="#f07676"/><rect x="32.3" y="1070.4" width="2" height="2.9" fill="#5a2424"/><rect x="29.5" y="1069.4" width="8" height="4.9" fill="none" stroke="#f07676" stroke-width="2"/><rect x="42.9" y="1060.0" width="2" height="1.1" fill="#f07676"/><rect x="42.9" y="1064.8" width="2" height="0.8" fill="#f07676"/><rect x="39.2" y="1061.1" width="9.6" height="3.6" fill="#f07676"/><rect x="53.6" y="1050.6" width="2" height="9.4" fill="#f07676"/><rect x="53.6" y="1064.0" width="2" height="0.8" fill="#f07676"/><rect x="49.9" y="1060.0" width="9.6" height="3.9" fill="#f07676"/><rect x="60.7" y="1054.2" width="9.2" height="4.2" fill="#3c7c90"/><rect x="74.9" y="1088.3" width="2" height="37.2" fill="#7cd0f0"/><rect x="71.6" y="1091.5" width="9" height="32.2" fill="#7cd0f0" stroke="#7cd0f0" stroke-opacity="0.45" stroke-width="1.4"/><rect x="85.5" y="1087.5" width="2" height="0.8" fill="#f07676"/><rect x="85.5" y="1125.2" width="2" height="0.8" fill="#f07676"/><rect x="85.5" y="1090.3" width="2" height="32.9" fill="#5a2424"/><rect x="82.7" y="1089.3" width="8" height="34.9" fill="none" stroke="#f07676" stroke-width="2"/><rect x="96.2" y="1087.5" width="2" height="33.8" fill="#7cd0f0"/><rect x="92.9" y="1087.8" width="9" height="30.3" fill="#7cd0f0" stroke="#7cd0f0" stroke-opacity="0.45" stroke-width="1.4"/><rect x="106.8" y="1107.2" width="2" height="5.5" fill="#f07676"/><rect x="106.8" y="1117.7" width="2" height="1.3" fill="#f07676"/><rect x="106.8" y="1114.7" width="2" height="1.0" fill="#5a2424"/><rect x="104.0" y="1113.7" width="8" height="3.0" fill="none" stroke="#f07676" stroke-width="2"/><rect x="117.5" y="1113.4" width="2" height="14.1" fill="#7cd0f0"/><rect x="114.2" y="1113.8" width="9" height="10.7" fill="#7cd0f0" stroke="#7cd0f0" stroke-opacity="0.45" stroke-width="1.4"/><rect x="128.1" y="1123.6" width="2" height="15.4" fill="#7cd0f0"/><rect x="124.8" y="1124.0" width="9" height="14.1" fill="#7cd0f0" stroke="#7cd0f0" stroke-opacity="0.45" stroke-width="1.4"/><rect x="138.8" y="1120.5" width="2" height="8.6" fill="#f07676"/><rect x="138.8" y="1137.0" width="2" height="6.3" fill="#f07676"/><rect x="138.8" y="1131.1" width="2" height="3.9" fill="#5a2424"/><rect x="135.9" y="1130.1" width="8" height="5.9" fill="none" stroke="#f07676" stroke-width="2"/><rect x="149.4" y="1111.9" width="2" height="5.5" fill="#f07676"/><rect x="149.4" y="1128.4" width="2" height="0.8" fill="#f07676"/><rect x="149.4" y="1119.4" width="2" height="7.0" fill="#5a2424"/><rect x="146.6" y="1118.4" width="8" height="9.0" fill="none" stroke="#f07676" stroke-width="2"/><rect x="160.0" y="1108.7" width="2" height="13.3" fill="#7cd0f0"/><rect x="156.7" y="1117.4" width="9" height="2.4" fill="#7cd0f0" stroke="#7cd0f0" stroke-opacity="0.45" stroke-width="1.4"/><rect x="170.7" y="1103.2" width="2" height="1.3" fill="#f07676"/><rect x="170.7" y="1118.9" width="2" height="0.8" fill="#f07676"/><rect x="170.7" y="1106.5" width="2" height="10.4" fill="#5a2424"/><rect x="167.9" y="1105.5" width="8" height="12.4" fill="none" stroke="#f07676" stroke-width="2"/><rect x="181.3" y="1092.2" width="2" height="9.4" fill="#f07676"/><rect x="181.3" y="1104.0" width="2" height="1.6" fill="#f07676"/><rect x="177.6" y="1101.7" width="9.6" height="2.4" fill="#f07676"/><rect x="192.0" y="1098.5" width="2" height="20.4" fill="#7cd0f0"/><rect x="188.7" y="1100.9" width="9" height="2.4" fill="#7cd0f0" stroke="#7cd0f0" stroke-opacity="0.45" stroke-width="1.4"/><rect x="202.6" y="1100.1" width="2" height="23.6" fill="#7cd0f0"/><rect x="199.3" y="1100.4" width="9" height="22.5" fill="#7cd0f0" stroke="#7cd0f0" stroke-opacity="0.45" stroke-width="1.4"/><rect x="213.3" y="1122.9" width="2" height="8.6" fill="#f07676"/><rect x="213.3" y="1118.6" width="2" height="2.3" fill="#5a2424"/><rect x="210.5" y="1117.6" width="8" height="4.3" fill="none" stroke="#f07676" stroke-width="2"/><rect x="223.9" y="1115.0" width="2" height="11.0" fill="#7cd0f0"/><rect x="220.6" y="1115.8" width="9" height="9.4" fill="#7cd0f0" stroke="#7cd0f0" stroke-opacity="0.45" stroke-width="1.4"/><rect x="234.6" y="1118.1" width="2" height="2.4" fill="#f07676"/><rect x="234.6" y="1124.4" width="2" height="0.8" fill="#f07676"/><rect x="230.9" y="1120.5" width="9.6" height="3.9" fill="#f07676"/><rect x="245.2" y="1118.9" width="2" height="19.2" fill="#7cd0f0"/><rect x="241.9" y="1119.7" width="9" height="17.7" fill="#7cd0f0" stroke="#7cd0f0" stroke-opacity="0.45" stroke-width="1.4"/><rect x="255.8" y="1133.9" width="2" height="10.2" fill="#7cd0f0"/><rect x="252.5" y="1136.2" width="9" height="7.1" fill="#7cd0f0" stroke="#7cd0f0" stroke-opacity="0.45" stroke-width="1.4"/><rect x="266.5" y="1136.2" width="2" height="12.6" fill="#7cd0f0"/><rect x="263.2" y="1140.1" width="9" height="7.9" fill="#7cd0f0" stroke="#7cd0f0" stroke-opacity="0.45" stroke-width="1.4"/><rect x="277.1" y="1143.3" width="2" height="6.3" fill="#7cd0f0"/><rect x="273.8" y="1145.6" width="9" height="3.1" fill="#7cd0f0" stroke="#7cd0f0" stroke-opacity="0.45" stroke-width="1.4"/><rect x="287.8" y="1140.1" width="2" height="3.9" fill="#f07676"/><rect x="287.8" y="1149.6" width="2" height="7.1" fill="#f07676"/><rect x="287.8" y="1146.1" width="2" height="1.5" fill="#5a2424"/><rect x="285.0" y="1145.1" width="8" height="3.5" fill="none" stroke="#f07676" stroke-width="2"/><rect x="298.4" y="1143.7" width="2" height="16.8" fill="#7cd0f0"/><rect x="295.1" y="1144.4" width="9" height="12.2" fill="#7cd0f0" stroke="#7cd0f0" stroke-opacity="0.45" stroke-width="1.4"/><rect x="309.1" y="1152.7" width="2" height="7.1" fill="#7cd0f0"/><rect x="305.8" y="1156.3" width="9" height="2.7" fill="#7cd0f0" stroke="#7cd0f0" stroke-opacity="0.45" stroke-width="1.4"/><rect x="319.7" y="1144.8" width="2" height="3.9" fill="#f07676"/><rect x="319.7" y="1158.2" width="2" height="3.1" fill="#f07676"/><rect x="319.7" y="1150.8" width="2" height="5.4" fill="#5a2424"/><rect x="316.9" y="1149.8" width="8" height="7.4" fill="none" stroke="#f07676" stroke-width="2"/><rect x="330.4" y="1147.2" width="2" height="22.0" fill="#7cd0f0"/><rect x="327.1" y="1150.3" width="9" height="14.9" fill="#7cd0f0" stroke="#7cd0f0" stroke-opacity="0.45" stroke-width="1.4"/><rect x="341.0" y="1158.2" width="2" height="3.1" fill="#f07676"/><rect x="341.0" y="1164.5" width="2" height="3.1" fill="#f07676"/><rect x="337.3" y="1161.3" width="9.6" height="3.1" fill="#f07676"/><rect x="351.6" y="1136.2" width="2" height="0.8" fill="#f07676"/><rect x="351.6" y="1162.1" width="2" height="0.8" fill="#f07676"/><rect x="351.6" y="1139.0" width="2" height="21.1" fill="#5a2424"/><rect x="348.8" y="1138.0" width="8" height="23.1" fill="none" stroke="#f07676" stroke-width="2"/><rect x="362.3" y="1130.7" width="2" height="4.7" fill="#f07676"/><rect x="362.3" y="1138.6" width="2" height="4.7" fill="#f07676"/><rect x="358.6" y="1135.4" width="9.6" height="3.1" fill="#f07676"/><rect x="372.9" y="1129.9" width="2" height="13.3" fill="#7cd0f0"/><rect x="369.6" y="1134.6" width="9" height="6.3" fill="#7cd0f0" stroke="#7cd0f0" stroke-opacity="0.45" stroke-width="1.4"/><rect x="383.6" y="1122.9" width="2" height="7.1" fill="#f07676"/><rect x="383.6" y="1137.0" width="2" height="0.8" fill="#f07676"/><rect x="383.6" y="1131.9" width="2" height="3.1" fill="#5a2424"/><rect x="380.8" y="1130.9" width="8" height="5.1" fill="none" stroke="#f07676" stroke-width="2"/><rect x="394.2" y="1126.4" width="2" height="7.9" fill="#7cd0f0"/><rect x="390.9" y="1127.9" width="9" height="4.7" fill="#7cd0f0" stroke="#7cd0f0" stroke-opacity="0.45" stroke-width="1.4"/><rect x="404.9" y="1117.7" width="2" height="7.1" fill="#f07676"/><rect x="404.9" y="1131.1" width="2" height="11.0" fill="#f07676"/><rect x="404.9" y="1126.8" width="2" height="2.3" fill="#5a2424"/><rect x="402.1" y="1125.8" width="8" height="4.3" fill="none" stroke="#f07676" stroke-width="2"/><rect x="415.5" y="1124.0" width="2" height="14.1" fill="#7cd0f0"/><rect x="412.2" y="1124.5" width="9" height="12.9" fill="#7cd0f0" stroke="#7cd0f0" stroke-opacity="0.45" stroke-width="1.4"/><rect x="426.2" y="1131.1" width="2" height="12.6" fill="#7cd0f0"/><rect x="422.9" y="1132.7" width="9" height="2.0" fill="#7cd0f0" stroke="#7cd0f0" stroke-opacity="0.45" stroke-width="1.4"/><rect x="436.8" y="1132.7" width="2" height="3.9" fill="#7cd0f0"/><rect x="433.5" y="1133.4" width="9" height="2.4" fill="#7cd0f0" stroke="#7cd0f0" stroke-opacity="0.45" stroke-width="1.4"/><rect x="447.5" y="1135.0" width="2" height="4.7" fill="#7cd0f0"/><rect x="444.2" y="1135.8" width="9" height="3.1" fill="#7cd0f0" stroke="#7cd0f0" stroke-opacity="0.45" stroke-width="1.4"/><rect x="458.1" y="1132.7" width="2" height="3.9" fill="#f07676"/><rect x="458.1" y="1138.6" width="2" height="2.7" fill="#f07676"/><rect x="454.4" y="1136.6" width="9.6" height="2.0" fill="#f07676"/><rect x="468.7" y="1127.9" width="2" height="8.6" fill="#7cd0f0"/><rect x="465.4" y="1134.2" width="9" height="2.0" fill="#7cd0f0" stroke="#7cd0f0" stroke-opacity="0.45" stroke-width="1.4"/><rect x="479.4" y="1137.4" width="2" height="11.8" fill="#7cd0f0"/><rect x="476.1" y="1138.1" width="9" height="9.4" fill="#7cd0f0" stroke="#7cd0f0" stroke-opacity="0.45" stroke-width="1.4"/><rect x="490.0" y="1134.2" width="2" height="7.1" fill="#f07676"/><rect x="490.0" y="1146.8" width="2" height="4.7" fill="#f07676"/><rect x="490.0" y="1143.3" width="2" height="1.5" fill="#5a2424"/><rect x="487.2" y="1142.3" width="8" height="3.5" fill="none" stroke="#f07676" stroke-width="2"/><rect x="500.7" y="1137.7" width="2" height="7.2" fill="#7cd0f0"/><rect x="497.4" y="1138.9" width="9" height="2.0" fill="#7cd0f0" stroke="#7cd0f0" stroke-opacity="0.45" stroke-width="1.4"/><rect x="511.3" y="1141.3" width="2" height="3.9" fill="#7cd0f0"/><rect x="508.0" y="1142.1" width="9" height="2.4" fill="#7cd0f0" stroke="#7cd0f0" stroke-opacity="0.45" stroke-width="1.4"/><rect x="522.0" y="1135.8" width="2" height="2.4" fill="#f07676"/><rect x="522.0" y="1145.2" width="2" height="2.4" fill="#f07676"/><rect x="522.0" y="1140.1" width="2" height="3.1" fill="#5a2424"/><rect x="519.2" y="1139.1" width="8" height="5.1" fill="none" stroke="#f07676" stroke-width="2"/><rect x="532.6" y="1136.1" width="2" height="5.2" fill="#7cd0f0"/><rect x="529.3" y="1137.4" width="9" height="3.1" fill="#7cd0f0" stroke="#7cd0f0" stroke-opacity="0.45" stroke-width="1.4"/><rect x="543.3" y="1139.7" width="2" height="7.9" fill="#7cd0f0"/><rect x="540.0" y="1140.5" width="9" height="6.3" fill="#7cd0f0" stroke="#7cd0f0" stroke-opacity="0.45" stroke-width="1.4"/><rect x="553.9" y="1143.6" width="2" height="4.4" fill="#7cd0f0"/><rect x="550.6" y="1145.2" width="9" height="2.4" fill="#7cd0f0" stroke="#7cd0f0" stroke-opacity="0.45" stroke-width="1.4"/><rect x="564.5" y="1135.8" width="2" height="7.9" fill="#f07676"/><rect x="564.5" y="1146.8" width="2" height="0.8" fill="#f07676"/><rect x="560.9" y="1143.6" width="9.6" height="3.1" fill="#f07676"/><rect x="575.2" y="1137.4" width="2" height="4.4" fill="#7cd0f0"/><rect x="571.9" y="1138.9" width="9" height="2.0" fill="#7cd0f0" stroke="#7cd0f0" stroke-opacity="0.45" stroke-width="1.4"/><rect x="585.8" y="1141.3" width="2" height="2.7" fill="#7cd0f0"/><rect x="582.5" y="1142.1" width="9" height="2.0" fill="#7cd0f0" stroke="#7cd0f0" stroke-opacity="0.45" stroke-width="1.4"/><rect x="596.5" y="1139.7" width="2" height="0.8" fill="#f07676"/><rect x="592.8" y="1140.5" width="9.6" height="2.0" fill="#f07676"/><rect x="607.1" y="1142.1" width="2" height="3.1" fill="#7cd0f0"/><rect x="603.8" y="1142.9" width="9" height="2.0" fill="#7cd0f0" stroke="#7cd0f0" stroke-opacity="0.45" stroke-width="1.4"/><rect x="617.8" y="1141.3" width="2" height="8.3" fill="#7cd0f0"/><rect x="614.5" y="1142.1" width="9" height="7.1" fill="#7cd0f0" stroke="#7cd0f0" stroke-opacity="0.45" stroke-width="1.4"/><rect x="628.4" y="1148.0" width="2" height="13.8" fill="#7cd0f0"/><rect x="625.1" y="1148.4" width="9" height="12.9" fill="#7cd0f0" stroke="#7cd0f0" stroke-opacity="0.45" stroke-width="1.4"/><rect x="639.1" y="1153.1" width="2" height="10.2" fill="#7cd0f0"/><rect x="635.8" y="1160.1" width="9" height="2.4" fill="#7cd0f0" stroke="#7cd0f0" stroke-opacity="0.45" stroke-width="1.4"/><rect x="649.7" y="1152.3" width="2" height="12.6" fill="#7cd0f0"/><rect x="646.4" y="1160.9" width="9" height="3.1" fill="#7cd0f0" stroke="#7cd0f0" stroke-opacity="0.45" stroke-width="1.4"/><rect x="660.4" y="1160.9" width="2" height="7.1" fill="#7cd0f0"/><rect x="657.1" y="1162.5" width="9" height="3.1" fill="#7cd0f0" stroke="#7cd0f0" stroke-opacity="0.45" stroke-width="1.4"/><rect x="671.0" y="1158.6" width="2" height="4.7" fill="#f07676"/><rect x="667.3" y="1163.3" width="9.6" height="3.9" fill="#f07676"/><rect x="681.6" y="1157.0" width="2" height="3.1" fill="#f07676"/><rect x="677.9" y="1160.1" width="9.6" height="2.0" fill="#f07676"/><rect x="692.3" y="1153.9" width="2" height="1.6" fill="#f07676"/><rect x="692.3" y="1160.1" width="2" height="5.5" fill="#f07676"/><rect x="692.3" y="1157.4" width="2" height="0.7" fill="#5a2424"/><rect x="689.5" y="1156.4" width="8" height="2.7" fill="none" stroke="#f07676" stroke-width="2"/><rect x="702.9" y="1149.9" width="2" height="8.6" fill="#7cd0f0"/><rect x="699.6" y="1154.6" width="9" height="3.1" fill="#7cd0f0" stroke="#7cd0f0" stroke-opacity="0.45" stroke-width="1.4"/><rect x="713.6" y="1152.3" width="2" height="11.8" fill="#7cd0f0"/><rect x="710.3" y="1156.2" width="9" height="7.1" fill="#7cd0f0" stroke="#7cd0f0" stroke-opacity="0.45" stroke-width="1.4"/><rect x="720.7" y="1154.6" width="9.2" height="2.0" fill="#3c7c90"/><rect x="734.9" y="1098.1" width="2" height="3.1" fill="#f07676"/><rect x="734.9" y="1127.9" width="2" height="7.9" fill="#f07676"/><rect x="734.9" y="1103.2" width="2" height="22.7" fill="#5a2424"/><rect x="732.1" y="1102.2" width="8" height="24.7" fill="none" stroke="#f07676" stroke-width="2"/><rect x="745.5" y="1094.2" width="2" height="31.4" fill="#7cd0f0"/><rect x="742.2" y="1099.7" width="9" height="24.3" fill="#7cd0f0" stroke="#7cd0f0" stroke-opacity="0.45" stroke-width="1.4"/><rect x="756.2" y="1107.5" width="2" height="7.9" fill="#f07676"/><rect x="756.2" y="1122.4" width="2" height="3.1" fill="#f07676"/><rect x="756.2" y="1117.4" width="2" height="3.1" fill="#5a2424"/><rect x="753.4" y="1116.4" width="8" height="5.1" fill="none" stroke="#f07676" stroke-width="2"/><rect x="766.8" y="1113.8" width="2" height="25.9" fill="#7cd0f0"/><rect x="763.5" y="1115.4" width="9" height="14.1" fill="#7cd0f0" stroke="#7cd0f0" stroke-opacity="0.45" stroke-width="1.4"/><rect x="777.4" y="1115.4" width="2" height="6.3" fill="#f07676"/><rect x="777.4" y="1127.2" width="2" height="10.2" fill="#f07676"/><rect x="777.4" y="1123.7" width="2" height="1.5" fill="#5a2424"/><rect x="774.6" y="1122.7" width="8" height="3.5" fill="none" stroke="#f07676" stroke-width="2"/><rect x="788.1" y="1109.9" width="2" height="0.8" fill="#f07676"/><rect x="788.1" y="1126.4" width="2" height="0.8" fill="#f07676"/><rect x="788.1" y="1112.7" width="2" height="11.7" fill="#5a2424"/><rect x="785.3" y="1111.7" width="8" height="13.7" fill="none" stroke="#f07676" stroke-width="2"/><rect x="798.7" y="1109.9" width="2" height="7.9" fill="#7cd0f0"/><rect x="795.4" y="1110.7" width="9" height="4.7" fill="#7cd0f0" stroke="#7cd0f0" stroke-opacity="0.45" stroke-width="1.4"/><rect x="809.4" y="1110.7" width="2" height="1.6" fill="#f07676"/><rect x="809.4" y="1115.4" width="2" height="6.3" fill="#f07676"/><rect x="805.7" y="1112.2" width="9.6" height="3.1" fill="#f07676"/><rect x="820.0" y="1110.7" width="2" height="5.0" fill="#7cd0f0"/><rect x="816.7" y="1112.6" width="9" height="2.5" fill="#7cd0f0" stroke="#7cd0f0" stroke-opacity="0.45" stroke-width="1.4"/><rect x="830.7" y="1106.7" width="2" height="1.6" fill="#f07676"/><rect x="830.7" y="1116.9" width="2" height="1.6" fill="#f07676"/><rect x="830.7" y="1110.3" width="2" height="4.6" fill="#5a2424"/><rect x="827.9" y="1109.3" width="8" height="6.6" fill="none" stroke="#f07676" stroke-width="2"/><rect x="841.3" y="1102.8" width="2" height="11.8" fill="#7cd0f0"/><rect x="838.0" y="1106.7" width="9" height="7.1" fill="#7cd0f0" stroke="#7cd0f0" stroke-opacity="0.45" stroke-width="1.4"/><rect x="852.0" y="1112.2" width="2" height="19.6" fill="#7cd0f0"/><rect x="848.7" y="1113.0" width="9" height="18.1" fill="#7cd0f0" stroke="#7cd0f0" stroke-opacity="0.45" stroke-width="1.4"/><rect x="862.6" y="1129.5" width="2" height="15.7" fill="#7cd0f0"/><rect x="859.3" y="1130.3" width="9" height="7.1" fill="#7cd0f0" stroke="#7cd0f0" stroke-opacity="0.45" stroke-width="1.4"/><rect x="873.3" y="1135.8" width="2" height="0.8" fill="#f07676"/><rect x="873.3" y="1139.7" width="2" height="5.5" fill="#f07676"/><rect x="869.6" y="1136.6" width="9.6" height="3.1" fill="#f07676"/><rect x="883.9" y="1131.9" width="2" height="0.8" fill="#f07676"/><rect x="883.9" y="1135.0" width="2" height="5.5" fill="#f07676"/><rect x="880.2" y="1132.7" width="9.6" height="2.4" fill="#f07676"/><rect x="894.5" y="1127.9" width="2" height="2.4" fill="#f07676"/><rect x="894.5" y="1133.4" width="2" height="0.8" fill="#f07676"/><rect x="890.8" y="1130.3" width="9.6" height="3.1" fill="#f07676"/><rect x="905.2" y="1130.3" width="2" height="14.1" fill="#7cd0f0"/><rect x="901.9" y="1131.1" width="9" height="12.6" fill="#7cd0f0" stroke="#7cd0f0" stroke-opacity="0.45" stroke-width="1.4"/><rect x="915.8" y="1139.9" width="2" height="0.6" fill="#f07676"/><rect x="915.8" y="1143.6" width="2" height="0.6" fill="#f07676"/><rect x="912.1" y="1140.5" width="9.6" height="3.1" fill="#f07676"/><rect x="926.5" y="1139.9" width="2" height="15.5" fill="#7cd0f0"/><rect x="923.2" y="1140.5" width="9" height="11.8" fill="#7cd0f0" stroke="#7cd0f0" stroke-opacity="0.45" stroke-width="1.4"/><rect x="937.1" y="1147.7" width="2" height="5.3" fill="#7cd0f0"/><rect x="933.8" y="1148.4" width="9" height="3.9" fill="#7cd0f0" stroke="#7cd0f0" stroke-opacity="0.45" stroke-width="1.4"/><rect x="947.8" y="1151.2" width="2" height="8.2" fill="#7cd0f0"/><rect x="944.5" y="1151.8" width="9" height="6.8" fill="#7cd0f0" stroke="#7cd0f0" stroke-opacity="0.45" stroke-width="1.4"/><rect x="958.4" y="1157.1" width="2" height="10.4" fill="#7cd0f0"/><rect x="955.1" y="1157.8" width="9" height="7.9" fill="#7cd0f0" stroke="#7cd0f0" stroke-opacity="0.45" stroke-width="1.4"/><rect x="969.1" y="1158.7" width="2" height="0.6" fill="#f07676"/><rect x="969.1" y="1165.6" width="2" height="7.9" fill="#f07676"/><rect x="969.1" y="1161.3" width="2" height="2.3" fill="#5a2424"/><rect x="966.3" y="1160.3" width="8" height="4.3" fill="none" stroke="#f07676" stroke-width="2"/><rect x="979.7" y="1149.9" width="2" height="11.8" fill="#7cd0f0"/><rect x="976.4" y="1156.2" width="9" height="2.0" fill="#7cd0f0" stroke="#7cd0f0" stroke-opacity="0.45" stroke-width="1.4"/><rect x="990.3" y="1152.3" width="2" height="13.3" fill="#7cd0f0"/><rect x="987.0" y="1157.0" width="9" height="2.0" fill="#7cd0f0" stroke="#7cd0f0" stroke-opacity="0.45" stroke-width="1.4"/><rect x="1001.0" y="1150.7" width="2" height="5.2" fill="#f07676"/><rect x="1001.0" y="1158.1" width="2" height="2.8" fill="#f07676"/><rect x="997.3" y="1155.9" width="9.6" height="2.2" fill="#f07676"/><rect x="1011.6" y="1156.2" width="2" height="11.0" fill="#7cd0f0"/><rect x="1008.3" y="1157.0" width="9" height="2.0" fill="#7cd0f0" stroke="#7cd0f0" stroke-opacity="0.45" stroke-width="1.4"/><rect x="1022.3" y="1157.1" width="2" height="8.5" fill="#7cd0f0"/><rect x="1019.0" y="1157.8" width="9" height="7.1" fill="#7cd0f0" stroke="#7cd0f0" stroke-opacity="0.45" stroke-width="1.4"/><rect x="1032.9" y="1155.6" width="2" height="0.6" fill="#f07676"/><rect x="1032.9" y="1164.8" width="2" height="1.6" fill="#f07676"/><rect x="1032.9" y="1158.2" width="2" height="4.6" fill="#5a2424"/><rect x="1030.1" y="1157.2" width="8" height="6.6" fill="none" stroke="#f07676" stroke-width="2"/><rect x="1043.6" y="1155.6" width="2" height="14.0" fill="#7cd0f0"/><rect x="1040.3" y="1156.2" width="9" height="11.0" fill="#7cd0f0" stroke="#7cd0f0" stroke-opacity="0.45" stroke-width="1.4"/><rect x="1054.2" y="1163.4" width="2" height="2.8" fill="#7cd0f0"/><rect x="1050.9" y="1164.1" width="9" height="2.0" fill="#7cd0f0" stroke="#7cd0f0" stroke-opacity="0.45" stroke-width="1.4"/><rect x="1064.9" y="1131.1" width="2" height="6.3" fill="#f07676"/><rect x="1064.9" y="1148.4" width="2" height="4.7" fill="#f07676"/><rect x="1064.9" y="1139.4" width="2" height="7.0" fill="#5a2424"/><rect x="1062.1" y="1138.4" width="8" height="9.0" fill="none" stroke="#f07676" stroke-width="2"/><rect x="1075.5" y="1126.4" width="2" height="11.8" fill="#7cd0f0"/><rect x="1072.2" y="1131.9" width="9" height="5.5" fill="#7cd0f0" stroke="#7cd0f0" stroke-opacity="0.45" stroke-width="1.4"/><rect x="1086.2" y="1120.1" width="2" height="3.1" fill="#f07676"/><rect x="1086.2" y="1135.0" width="2" height="2.4" fill="#f07676"/><rect x="1086.2" y="1125.2" width="2" height="7.8" fill="#5a2424"/><rect x="1083.4" y="1124.2" width="8" height="9.8" fill="none" stroke="#f07676" stroke-width="2"/><rect x="1096.8" y="1120.1" width="2" height="7.9" fill="#7cd0f0"/><rect x="1093.5" y="1124.0" width="9" height="2.4" fill="#7cd0f0" stroke="#7cd0f0" stroke-opacity="0.45" stroke-width="1.4"/><rect x="1107.4" y="1111.5" width="2" height="0.8" fill="#f07676"/><rect x="1107.4" y="1127.2" width="2" height="0.8" fill="#f07676"/><rect x="1107.4" y="1114.2" width="2" height="10.9" fill="#5a2424"/><rect x="1104.6" y="1113.2" width="8" height="12.9" fill="none" stroke="#f07676" stroke-width="2"/><rect x="1118.1" y="1106.0" width="2" height="9.4" fill="#7cd0f0"/><rect x="1114.8" y="1112.6" width="9" height="2.0" fill="#7cd0f0" stroke="#7cd0f0" stroke-opacity="0.45" stroke-width="1.4"/><rect x="1128.7" y="1106.7" width="2" height="0.8" fill="#f07676"/><rect x="1128.7" y="1113.8" width="2" height="0.8" fill="#f07676"/><rect x="1128.7" y="1109.5" width="2" height="2.3" fill="#5a2424"/><rect x="1125.9" y="1108.5" width="8" height="4.3" fill="none" stroke="#f07676" stroke-width="2"/><rect x="1139.4" y="1104.4" width="2" height="0.8" fill="#f07676"/><rect x="1139.4" y="1112.2" width="2" height="0.8" fill="#f07676"/><rect x="1139.4" y="1107.2" width="2" height="3.1" fill="#5a2424"/><rect x="1136.6" y="1106.2" width="8" height="5.1" fill="none" stroke="#f07676" stroke-width="2"/><rect x="1150.0" y="1102.0" width="2" height="9.4" fill="#7cd0f0"/><rect x="1146.7" y="1102.8" width="9" height="7.9" fill="#7cd0f0" stroke="#7cd0f0" stroke-opacity="0.45" stroke-width="1.4"/><rect x="1160.7" y="1111.2" width="2" height="8.6" fill="#7cd0f0"/><rect x="1157.4" y="1112.0" width="9" height="7.1" fill="#7cd0f0" stroke="#7cd0f0" stroke-opacity="0.45" stroke-width="1.4"/><rect x="1171.3" y="1116.7" width="2" height="10.2" fill="#7cd0f0"/><rect x="1168.0" y="1117.4" width="9" height="8.6" fill="#7cd0f0" stroke="#7cd0f0" stroke-opacity="0.45" stroke-width="1.4"/><rect x="1182.0" y="1108.0" width="2" height="0.8" fill="#f07676"/><rect x="1182.0" y="1125.3" width="2" height="0.8" fill="#f07676"/><rect x="1182.0" y="1110.8" width="2" height="12.5" fill="#5a2424"/><rect x="1179.2" y="1109.8" width="8" height="14.5" fill="none" stroke="#f07676" stroke-width="2"/><rect x="1192.6" y="1104.9" width="2" height="6.3" fill="#7cd0f0"/><rect x="1189.3" y="1108.0" width="9" height="2.4" fill="#7cd0f0" stroke="#7cd0f0" stroke-opacity="0.45" stroke-width="1.4"/><rect x="1203.2" y="1109.0" width="2" height="9.3" fill="#7cd0f0"/><rect x="1200.0" y="1109.6" width="9" height="7.9" fill="#7cd0f0" stroke="#7cd0f0" stroke-opacity="0.45" stroke-width="1.4"/><rect x="1213.9" y="1108.0" width="2" height="0.8" fill="#f07676"/><rect x="1213.9" y="1117.4" width="2" height="0.8" fill="#f07676"/><rect x="1213.9" y="1110.8" width="2" height="4.6" fill="#5a2424"/><rect x="1211.1" y="1109.8" width="8" height="6.6" fill="none" stroke="#f07676" stroke-width="2"/><rect x="1224.5" y="1102.5" width="2" height="4.7" fill="#f07676"/><rect x="1220.8" y="1107.2" width="9.6" height="2.0" fill="#f07676"/><rect x="1235.2" y="1105.7" width="2" height="4.7" fill="#7cd0f0"/><rect x="1231.9" y="1106.5" width="9" height="3.1" fill="#7cd0f0" stroke="#7cd0f0" stroke-opacity="0.45" stroke-width="1.4"/><rect x="1245.8" y="1107.4" width="2" height="3.8" fill="#7cd0f0"/><rect x="1242.5" y="1108.0" width="9" height="2.4" fill="#7cd0f0" stroke="#7cd0f0" stroke-opacity="0.45" stroke-width="1.4"/><rect x="1256.5" y="1104.1" width="2" height="2.7" fill="#f07676"/><rect x="1256.5" y="1108.8" width="2" height="3.2" fill="#f07676"/><rect x="1252.8" y="1106.8" width="9.6" height="2.0" fill="#f07676"/><rect x="1267.1" y="1104.3" width="2" height="0.6" fill="#f07676"/><rect x="1263.4" y="1104.9" width="9.6" height="2.0" fill="#f07676"/><rect x="1277.8" y="1103.9" width="2" height="2.8" fill="#7cd0f0"/><rect x="1274.5" y="1104.6" width="9" height="2.0" fill="#7cd0f0" stroke="#7cd0f0" stroke-opacity="0.45" stroke-width="1.4"/><rect x="1288.4" y="1099.9" width="2" height="0.6" fill="#f07676"/><rect x="1288.4" y="1105.7" width="2" height="0.8" fill="#f07676"/><rect x="1288.4" y="1102.5" width="2" height="1.2" fill="#5a2424"/><rect x="1285.6" y="1101.5" width="8" height="3.2" fill="none" stroke="#f07676" stroke-width="2"/><rect x="1299.1" y="1096.2" width="2" height="0.8" fill="#f07676"/><rect x="1299.1" y="1101.7" width="2" height="0.8" fill="#f07676"/><rect x="1299.1" y="1099.0" width="2" height="0.7" fill="#5a2424"/><rect x="1296.3" y="1098.0" width="8" height="2.7" fill="none" stroke="#f07676" stroke-width="2"/><rect x="1309.7" y="1088.4" width="2" height="0.8" fill="#f07676"/><rect x="1309.7" y="1097.5" width="2" height="0.8" fill="#f07676"/><rect x="1309.7" y="1091.2" width="2" height="4.3" fill="#5a2424"/><rect x="1306.9" y="1090.2" width="8" height="6.3" fill="none" stroke="#f07676" stroke-width="2"/><rect x="1320.3" y="1086.0" width="2" height="0.8" fill="#f07676"/><rect x="1320.3" y="1090.0" width="2" height="3.1" fill="#f07676"/><rect x="1316.6" y="1086.8" width="9.6" height="3.1" fill="#f07676"/><rect x="1331.0" y="1082.1" width="2" height="15.7" fill="#7cd0f0"/><rect x="1327.7" y="1086.0" width="9" height="11.0" fill="#7cd0f0" stroke="#7cd0f0" stroke-opacity="0.45" stroke-width="1.4"/><rect x="1341.6" y="1090.0" width="2" height="0.8" fill="#f07676"/><rect x="1341.6" y="1097.0" width="2" height="0.8" fill="#f07676"/><rect x="1341.6" y="1092.8" width="2" height="2.3" fill="#5a2424"/><rect x="1338.8" y="1091.8" width="8" height="4.3" fill="none" stroke="#f07676" stroke-width="2"/><rect x="1352.3" y="1082.9" width="2" height="3.5" fill="#f07676"/><rect x="1352.3" y="1090.0" width="2" height="0.8" fill="#f07676"/><rect x="1348.6" y="1086.4" width="9.6" height="3.6" fill="#f07676"/><rect x="1362.9" y="1081.3" width="2" height="7.9" fill="#7cd0f0"/><rect x="1359.6" y="1085.3" width="9" height="3.1" fill="#7cd0f0" stroke="#7cd0f0" stroke-opacity="0.45" stroke-width="1.4"/><rect x="1373.6" y="1074.3" width="2" height="4.7" fill="#f07676"/><rect x="1373.6" y="1084.5" width="2" height="0.8" fill="#f07676"/><rect x="1373.6" y="1081.0" width="2" height="1.5" fill="#5a2424"/><rect x="1370.8" y="1080.0" width="8" height="3.5" fill="none" stroke="#f07676" stroke-width="2"/><rect x="1380.7" y="1072.4" width="9.2" height="3.0" fill="#3c7c90"/><rect x="1394.9" y="1027.9" width="2" height="20.4" fill="#f07676"/><rect x="1394.9" y="1079.8" width="2" height="7.9" fill="#f07676"/><rect x="1394.9" y="1050.4" width="2" height="27.4" fill="#5a2424"/><rect x="1392.1" y="1049.4" width="8" height="29.4" fill="none" stroke="#f07676" stroke-width="2"/><rect x="1405.5" y="1015.8" width="2" height="0.8" fill="#f07676"/><rect x="1405.5" y="1051.5" width="2" height="0.8" fill="#f07676"/><rect x="1405.5" y="1018.6" width="2" height="30.9" fill="#5a2424"/><rect x="1402.7" y="1017.6" width="8" height="32.9" fill="none" stroke="#f07676" stroke-width="2"/><rect x="1416.1" y="1004.4" width="2" height="0.8" fill="#f07676"/><rect x="1416.1" y="1016.2" width="2" height="5.5" fill="#f07676"/><rect x="1416.1" y="1007.2" width="2" height="7.0" fill="#5a2424"/><rect x="1413.3" y="1006.2" width="8" height="9.0" fill="none" stroke="#f07676" stroke-width="2"/><rect x="1426.8" y="1002.0" width="2" height="1.6" fill="#f07676"/><rect x="1426.8" y="1006.0" width="2" height="15.7" fill="#f07676"/><rect x="1423.1" y="1003.6" width="9.6" height="2.4" fill="#f07676"/><rect x="1437.4" y="982.4" width="2" height="3.9" fill="#f07676"/><rect x="1437.4" y="1004.4" width="2" height="0.8" fill="#f07676"/><rect x="1437.4" y="988.3" width="2" height="14.1" fill="#5a2424"/><rect x="1434.6" y="987.3" width="8" height="16.1" fill="none" stroke="#f07676" stroke-width="2"/><rect x="1448.1" y="982.1" width="2" height="12.1" fill="#7cd0f0"/><rect x="1444.8" y="987.9" width="9" height="3.9" fill="#7cd0f0" stroke="#7cd0f0" stroke-opacity="0.45" stroke-width="1.4"/><rect x="1458.7" y="982.4" width="2" height="3.6" fill="#f07676"/><rect x="1458.7" y="988.7" width="2" height="5.5" fill="#f07676"/><rect x="1455.0" y="986.0" width="9.6" height="2.7" fill="#f07676"/><rect x="1469.4" y="977.4" width="2" height="0.8" fill="#f07676"/><rect x="1469.4" y="983.6" width="2" height="0.8" fill="#f07676"/><rect x="1469.4" y="980.1" width="2" height="1.5" fill="#5a2424"/><rect x="1466.6" y="979.1" width="8" height="3.5" fill="none" stroke="#f07676" stroke-width="2"/><rect x="1480.0" y="975.8" width="2" height="14.9" fill="#7cd0f0"/><rect x="1476.7" y="979.7" width="9" height="3.9" fill="#7cd0f0" stroke="#7cd0f0" stroke-opacity="0.45" stroke-width="1.4"/><rect x="1490.7" y="952.2" width="2" height="10.2" fill="#f07676"/><rect x="1490.7" y="982.9" width="2" height="0.8" fill="#f07676"/><rect x="1490.7" y="964.4" width="2" height="16.4" fill="#5a2424"/><rect x="1487.9" y="963.4" width="8" height="18.4" fill="none" stroke="#f07676" stroke-width="2"/><rect x="1501.3" y="948.3" width="2" height="0.8" fill="#f07676"/><rect x="1501.3" y="963.2" width="2" height="0.8" fill="#f07676"/><rect x="1501.3" y="951.1" width="2" height="10.1" fill="#5a2424"/><rect x="1498.5" y="950.1" width="8" height="12.1" fill="none" stroke="#f07676" stroke-width="2"/><rect x="1512.0" y="926.3" width="2" height="2.4" fill="#f07676"/><rect x="1512.0" y="949.9" width="2" height="0.8" fill="#f07676"/><rect x="1512.0" y="930.7" width="2" height="17.2" fill="#5a2424"/><rect x="1509.2" y="929.7" width="8" height="19.2" fill="none" stroke="#f07676" stroke-width="2"/><rect x="1522.6" y="924.0" width="2" height="0.8" fill="#f07676"/><rect x="1522.6" y="929.5" width="2" height="4.7" fill="#f07676"/><rect x="1522.6" y="926.8" width="2" height="0.7" fill="#5a2424"/><rect x="1519.8" y="925.8" width="8" height="2.7" fill="none" stroke="#f07676" stroke-width="2"/><rect x="1533.2" y="912.2" width="2" height="0.8" fill="#f07676"/><rect x="1533.2" y="925.5" width="2" height="7.9" fill="#f07676"/><rect x="1533.2" y="915.0" width="2" height="8.6" fill="#5a2424"/><rect x="1530.4" y="914.0" width="8" height="10.6" fill="none" stroke="#f07676" stroke-width="2"/><rect x="1543.9" y="913.0" width="2" height="14.1" fill="#7cd0f0"/><rect x="1540.6" y="913.8" width="9" height="5.5" fill="#7cd0f0" stroke="#7cd0f0" stroke-opacity="0.45" stroke-width="1.4"/><rect x="1554.5" y="917.7" width="2" height="41.6" fill="#7cd0f0"/><rect x="1551.2" y="918.5" width="9" height="34.5" fill="#7cd0f0" stroke="#7cd0f0" stroke-opacity="0.45" stroke-width="1.4"/><rect x="1565.2" y="949.9" width="2" height="16.5" fill="#7cd0f0"/><rect x="1561.9" y="950.7" width="9" height="14.9" fill="#7cd0f0" stroke="#7cd0f0" stroke-opacity="0.45" stroke-width="1.4"/><rect x="1575.8" y="949.1" width="2" height="0.8" fill="#f07676"/><rect x="1575.8" y="967.2" width="2" height="7.1" fill="#f07676"/><rect x="1575.8" y="951.9" width="2" height="13.3" fill="#5a2424"/><rect x="1573.0" y="950.9" width="8" height="15.3" fill="none" stroke="#f07676" stroke-width="2"/><rect x="1586.5" y="938.1" width="2" height="0.8" fill="#f07676"/><rect x="1586.5" y="950.7" width="2" height="12.6" fill="#f07676"/><rect x="1586.5" y="940.9" width="2" height="7.8" fill="#5a2424"/><rect x="1583.7" y="939.9" width="8" height="9.8" fill="none" stroke="#f07676" stroke-width="2"/><rect x="1597.1" y="928.7" width="2" height="4.7" fill="#f07676"/><rect x="1597.1" y="939.7" width="2" height="3.9" fill="#f07676"/><rect x="1597.1" y="935.4" width="2" height="2.3" fill="#5a2424"/><rect x="1594.3" y="934.4" width="8" height="4.3" fill="none" stroke="#f07676" stroke-width="2"/><rect x="1607.8" y="922.4" width="2" height="0.8" fill="#f07676"/><rect x="1607.8" y="935.0" width="2" height="4.7" fill="#f07676"/><rect x="1607.8" y="925.2" width="2" height="7.8" fill="#5a2424"/><rect x="1605.0" y="924.2" width="8" height="9.8" fill="none" stroke="#f07676" stroke-width="2"/><rect x="1618.4" y="918.5" width="2" height="2.0" fill="#f07676"/><rect x="1618.4" y="923.2" width="2" height="5.5" fill="#f07676"/><rect x="1614.7" y="920.5" width="9.6" height="2.7" fill="#f07676"/><rect x="1629.0" y="920.5" width="2" height="12.9" fill="#7cd0f0"/><rect x="1625.8" y="921.1" width="9" height="11.5" fill="#7cd0f0" stroke="#7cd0f0" stroke-opacity="0.45" stroke-width="1.4"/><rect x="1639.7" y="931.2" width="2" height="13.2" fill="#7cd0f0"/><rect x="1636.4" y="931.8" width="9" height="11.8" fill="#7cd0f0" stroke="#7cd0f0" stroke-opacity="0.45" stroke-width="1.4"/><rect x="1650.3" y="929.6" width="2" height="0.6" fill="#f07676"/><rect x="1650.3" y="942.8" width="2" height="5.5" fill="#f07676"/><rect x="1650.3" y="932.3" width="2" height="8.6" fill="#5a2424"/><rect x="1647.5" y="931.3" width="8" height="10.6" fill="none" stroke="#f07676" stroke-width="2"/><rect x="1661.0" y="918.5" width="2" height="3.9" fill="#f07676"/><rect x="1661.0" y="931.8" width="2" height="0.8" fill="#f07676"/><rect x="1661.0" y="924.4" width="2" height="5.4" fill="#5a2424"/><rect x="1658.2" y="923.4" width="8" height="7.4" fill="none" stroke="#f07676" stroke-width="2"/><rect x="1671.6" y="920.5" width="2" height="15.2" fill="#7cd0f0"/><rect x="1668.3" y="921.1" width="9" height="13.8" fill="#7cd0f0" stroke="#7cd0f0" stroke-opacity="0.45" stroke-width="1.4"/><rect x="1682.3" y="928.7" width="2" height="1.6" fill="#f07676"/><rect x="1682.3" y="932.3" width="2" height="7.4" fill="#f07676"/><rect x="1678.6" y="930.3" width="9.6" height="2.0" fill="#f07676"/><rect x="1692.9" y="929.6" width="2" height="8.5" fill="#7cd0f0"/><rect x="1689.6" y="930.3" width="9" height="7.1" fill="#7cd0f0" stroke="#7cd0f0" stroke-opacity="0.45" stroke-width="1.4"/><rect x="1703.6" y="937.5" width="2" height="6.0" fill="#7cd0f0"/><rect x="1700.3" y="938.1" width="9" height="4.7" fill="#7cd0f0" stroke="#7cd0f0" stroke-opacity="0.45" stroke-width="1.4"/><rect x="1714.2" y="939.7" width="2" height="3.1" fill="#7cd0f0"/><rect x="1710.9" y="940.5" width="9" height="2.0" fill="#7cd0f0" stroke="#7cd0f0" stroke-opacity="0.45" stroke-width="1.4"/><rect x="1724.9" y="924.0" width="2" height="55.9" fill="#7cd0f0"/><rect x="1721.6" y="924.8" width="9" height="54.5" fill="#7cd0f0" stroke="#7cd0f0" stroke-opacity="0.45" stroke-width="1.4"/><rect x="1735.5" y="974.2" width="2" height="0.8" fill="#f07676"/><rect x="1735.5" y="980.5" width="2" height="13.3" fill="#f07676"/><rect x="1735.5" y="977.0" width="2" height="1.5" fill="#5a2424"/><rect x="1732.7" y="976.0" width="8" height="3.5" fill="none" stroke="#f07676" stroke-width="2"/><rect x="1746.1" y="970.3" width="2" height="15.9" fill="#7cd0f0"/><rect x="1742.8" y="974.2" width="9" height="11.3" fill="#7cd0f0" stroke="#7cd0f0" stroke-opacity="0.45" stroke-width="1.4"/><rect x="1756.8" y="966.4" width="2" height="4.7" fill="#f07676"/><rect x="1756.8" y="984.4" width="2" height="3.1" fill="#f07676"/><rect x="1756.8" y="973.1" width="2" height="9.3" fill="#5a2424"/><rect x="1754.0" y="972.1" width="8" height="11.3" fill="none" stroke="#f07676" stroke-width="2"/><rect x="1767.4" y="962.4" width="2" height="7.1" fill="#f07676"/><rect x="1763.7" y="969.5" width="9.6" height="2.0" fill="#f07676"/><rect x="1778.1" y="968.9" width="2" height="8.5" fill="#7cd0f0"/><rect x="1774.8" y="969.5" width="9" height="4.7" fill="#7cd0f0" stroke="#7cd0f0" stroke-opacity="0.45" stroke-width="1.4"/><rect x="1788.7" y="970.5" width="2" height="0.6" fill="#f07676"/><rect x="1788.7" y="974.2" width="2" height="3.1" fill="#f07676"/><rect x="1785.0" y="971.1" width="9.6" height="3.1" fill="#f07676"/><rect x="1799.4" y="964.2" width="2" height="0.6" fill="#f07676"/><rect x="1799.4" y="972.7" width="2" height="0.6" fill="#f07676"/><rect x="1799.4" y="966.8" width="2" height="3.9" fill="#5a2424"/><rect x="1796.6" y="965.8" width="8" height="5.9" fill="none" stroke="#f07676" stroke-width="2"/><rect x="1810.0" y="963.9" width="2" height="10.4" fill="#7cd0f0"/><rect x="1806.7" y="964.5" width="9" height="9.0" fill="#7cd0f0" stroke="#7cd0f0" stroke-opacity="0.45" stroke-width="1.4"/><rect x="1820.7" y="972.0" width="2" height="6.9" fill="#7cd0f0"/><rect x="1817.4" y="972.7" width="9" height="2.4" fill="#7cd0f0" stroke="#7cd0f0" stroke-opacity="0.45" stroke-width="1.4"/><rect x="1831.3" y="972.7" width="2" height="0.8" fill="#f07676"/><rect x="1831.3" y="975.4" width="2" height="6.6" fill="#f07676"/><rect x="1827.6" y="973.4" width="9.6" height="2.0" fill="#f07676"/><rect x="1841.9" y="973.8" width="2" height="10.2" fill="#7cd0f0"/><rect x="1838.6" y="974.6" width="9" height="7.1" fill="#7cd0f0" stroke="#7cd0f0" stroke-opacity="0.45" stroke-width="1.4"/><rect x="1852.6" y="979.5" width="2" height="17.9" fill="#7cd0f0"/><rect x="1849.3" y="980.1" width="9" height="11.8" fill="#7cd0f0" stroke="#7cd0f0" stroke-opacity="0.45" stroke-width="1.4"/><rect x="1863.2" y="984.8" width="2" height="8.6" fill="#f07676"/><rect x="1859.9" y="986.1" width="9" height="5.8" fill="#f07676" stroke="#f07676" stroke-opacity="0.45" stroke-width="1.4"/><rect x="1873.9" y="987.3" width="2" height="8.5" fill="#7cd0f0"/><rect x="1870.6" y="987.9" width="9" height="2.0" fill="#7cd0f0" stroke="#7cd0f0" stroke-opacity="0.45" stroke-width="1.4"/><rect x="1884.5" y="984.8" width="2" height="3.9" fill="#f07676"/><rect x="1884.5" y="990.8" width="2" height="0.6" fill="#f07676"/><rect x="1880.8" y="988.7" width="9.6" height="2.0" fill="#f07676"/><rect x="1895.2" y="986.1" width="2" height="8.2" fill="#7cd0f0"/><rect x="1891.9" y="989.8" width="9" height="3.6" fill="#7cd0f0" stroke="#7cd0f0" stroke-opacity="0.45" stroke-width="1.4"/><rect x="1905.8" y="992.0" width="2" height="6.1" fill="#7cd0f0"/><rect x="1902.5" y="992.7" width="9" height="4.7" fill="#7cd0f0" stroke="#7cd0f0" stroke-opacity="0.45" stroke-width="1.4"/><rect x="1916.5" y="995.5" width="2" height="10.1" fill="#7cd0f0"/><rect x="1913.2" y="996.1" width="9" height="8.8" fill="#7cd0f0" stroke="#7cd0f0" stroke-opacity="0.45" stroke-width="1.4"/><rect x="1927.1" y="1002.1" width="2" height="9.4" fill="#7cd0f0"/><rect x="1923.8" y="1002.9" width="9" height="5.5" fill="#7cd0f0" stroke="#7cd0f0" stroke-opacity="0.45" stroke-width="1.4"/><rect x="1937.8" y="1002.9" width="2" height="7.1" fill="#7cd0f0"/><rect x="1934.5" y="1003.6" width="9" height="2.0" fill="#7cd0f0" stroke="#7cd0f0" stroke-opacity="0.45" stroke-width="1.4"/><rect x="1948.4" y="1006.2" width="2" height="5.3" fill="#7cd0f0"/><rect x="1945.1" y="1006.8" width="9" height="2.4" fill="#7cd0f0" stroke="#7cd0f0" stroke-opacity="0.45" stroke-width="1.4"/><rect x="1959.0" y="1006.8" width="2" height="5.7" fill="#7cd0f0"/><rect x="1955.7" y="1007.6" width="9" height="4.2" fill="#7cd0f0" stroke="#7cd0f0" stroke-opacity="0.45" stroke-width="1.4"/><rect x="1969.7" y="1009.9" width="2" height="5.5" fill="#7cd0f0"/><rect x="1966.4" y="1010.7" width="9" height="2.7" fill="#7cd0f0" stroke="#7cd0f0" stroke-opacity="0.45" stroke-width="1.4"/><rect x="1980.3" y="1011.2" width="2" height="4.7" fill="#7cd0f0"/><rect x="1977.0" y="1011.8" width="9" height="2.0" fill="#7cd0f0" stroke="#7cd0f0" stroke-opacity="0.45" stroke-width="1.4"/><rect x="1991.0" y="1012.8" width="2" height="2.8" fill="#7cd0f0"/><rect x="1987.7" y="1013.4" width="9" height="2.0" fill="#7cd0f0" stroke="#7cd0f0" stroke-opacity="0.45" stroke-width="1.4"/><rect x="2001.6" y="1013.1" width="2" height="6.3" fill="#7cd0f0"/><rect x="1998.3" y="1013.9" width="9" height="4.7" fill="#7cd0f0" stroke="#7cd0f0" stroke-opacity="0.45" stroke-width="1.4"/><rect x="2012.3" y="999.9" width="2" height="0.6" fill="#f07676"/><rect x="2012.3" y="1017.0" width="2" height="2.4" fill="#f07676"/><rect x="2012.3" y="1002.5" width="2" height="12.5" fill="#5a2424"/><rect x="2009.5" y="1001.5" width="8" height="14.5" fill="none" stroke="#f07676" stroke-width="2"/><rect x="2022.9" y="990.3" width="2" height="7.9" fill="#f07676"/><rect x="2022.9" y="1001.3" width="2" height="4.7" fill="#f07676"/><rect x="2019.2" y="998.1" width="9.6" height="3.1" fill="#f07676"/><rect x="2033.6" y="984.8" width="2" height="26.7" fill="#7cd0f0"/><rect x="2030.3" y="995.8" width="9" height="11.0" fill="#7cd0f0" stroke="#7cd0f0" stroke-opacity="0.45" stroke-width="1.4"/><rect x="2040.7" y="1009.9" width="9.2" height="2.0" fill="#3c7c90"/><rect x="2065.5" y="484.4" width="2" height="41.6" fill="#f07676"/><rect x="2065.5" y="651.7" width="2" height="3.9" fill="#f07676"/><rect x="2065.5" y="528.0" width="2" height="121.6" fill="#5a2424"/><rect x="2062.7" y="527.0" width="8" height="123.6" fill="none" stroke="#f07676" stroke-width="2"/><rect x="2076.1" y="516.6" width="2" height="119.3" fill="#7cd0f0"/><rect x="2072.8" y="529.2" width="9" height="88.7" fill="#7cd0f0" stroke="#7cd0f0" stroke-opacity="0.45" stroke-width="1.4"/><rect x="2086.8" y="572.4" width="2" height="57.3" fill="#7cd0f0"/><rect x="2083.5" y="616.3" width="9" height="7.9" fill="#7cd0f0" stroke="#7cd0f0" stroke-opacity="0.45" stroke-width="1.4"/><rect x="2097.4" y="586.5" width="2" height="18.1" fill="#f07676"/><rect x="2097.4" y="623.4" width="2" height="0.8" fill="#f07676"/><rect x="2097.4" y="606.6" width="2" height="14.8" fill="#5a2424"/><rect x="2094.6" y="605.6" width="8" height="16.8" fill="none" stroke="#f07676" stroke-width="2"/><rect x="2108.1" y="595.9" width="2" height="31.4" fill="#7cd0f0"/><rect x="2104.8" y="599.8" width="9" height="8.6" fill="#7cd0f0" stroke="#7cd0f0" stroke-opacity="0.45" stroke-width="1.4"/><rect x="2118.7" y="572.4" width="2" height="3.9" fill="#f07676"/><rect x="2118.7" y="608.5" width="2" height="14.9" fill="#f07676"/><rect x="2118.7" y="578.3" width="2" height="28.2" fill="#5a2424"/><rect x="2115.9" y="577.3" width="8" height="30.2" fill="none" stroke="#f07676" stroke-width="2"/><rect x="2129.4" y="572.4" width="2" height="55.0" fill="#7cd0f0"/><rect x="2126.1" y="575.5" width="9" height="44.0" fill="#7cd0f0" stroke="#7cd0f0" stroke-opacity="0.45" stroke-width="1.4"/><rect x="2140.0" y="596.7" width="2" height="10.2" fill="#f07676"/><rect x="2140.0" y="623.4" width="2" height="0.8" fill="#f07676"/><rect x="2140.0" y="608.9" width="2" height="12.5" fill="#5a2424"/><rect x="2137.2" y="607.9" width="8" height="14.5" fill="none" stroke="#f07676" stroke-width="2"/><rect x="2150.7" y="582.6" width="2" height="35.3" fill="#7cd0f0"/><rect x="2147.4" y="606.1" width="9" height="3.1" fill="#7cd0f0" stroke="#7cd0f0" stroke-opacity="0.45" stroke-width="1.4"/><rect x="2161.3" y="574.7" width="2" height="25.9" fill="#f07676"/><rect x="2161.3" y="609.3" width="2" height="0.8" fill="#f07676"/><rect x="2161.3" y="602.6" width="2" height="4.6" fill="#5a2424"/><rect x="2158.5" y="601.6" width="8" height="6.6" fill="none" stroke="#f07676" stroke-width="2"/><rect x="2171.9" y="592.0" width="2" height="0.8" fill="#f07676"/><rect x="2171.9" y="600.6" width="2" height="16.5" fill="#f07676"/><rect x="2171.9" y="594.8" width="2" height="3.9" fill="#5a2424"/><rect x="2169.1" y="593.8" width="8" height="5.9" fill="none" stroke="#f07676" stroke-width="2"/><rect x="2182.6" y="584.9" width="2" height="24.3" fill="#7cd0f0"/><rect x="2179.3" y="590.4" width="9" height="8.6" fill="#7cd0f0" stroke="#7cd0f0" stroke-opacity="0.45" stroke-width="1.4"/><rect x="2193.2" y="565.3" width="2" height="9.4" fill="#f07676"/><rect x="2193.2" y="599.8" width="2" height="2.4" fill="#f07676"/><rect x="2193.2" y="576.7" width="2" height="21.1" fill="#5a2424"/><rect x="2190.4" y="575.7" width="8" height="23.1" fill="none" stroke="#f07676" stroke-width="2"/><rect x="2203.9" y="552.7" width="2" height="2.4" fill="#f07676"/><rect x="2203.9" y="573.1" width="2" height="5.5" fill="#f07676"/><rect x="2203.9" y="557.1" width="2" height="14.1" fill="#5a2424"/><rect x="2201.1" y="556.1" width="8" height="16.1" fill="none" stroke="#f07676" stroke-width="2"/><rect x="2214.5" y="548.5" width="2" height="2.7" fill="#f07676"/><rect x="2214.5" y="555.1" width="2" height="6.3" fill="#f07676"/><rect x="2210.8" y="551.2" width="9.6" height="3.9" fill="#f07676"/><rect x="2225.2" y="549.6" width="2" height="37.7" fill="#7cd0f0"/><rect x="2221.9" y="550.4" width="9" height="29.1" fill="#7cd0f0" stroke="#7cd0f0" stroke-opacity="0.45" stroke-width="1.4"/><rect x="2235.8" y="565.3" width="2" height="22.8" fill="#7cd0f0"/><rect x="2232.5" y="575.5" width="9" height="11.8" fill="#7cd0f0" stroke="#7cd0f0" stroke-opacity="0.45" stroke-width="1.4"/><rect x="2246.5" y="572.4" width="2" height="10.2" fill="#f07676"/><rect x="2246.5" y="588.1" width="2" height="10.2" fill="#f07676"/><rect x="2246.5" y="584.6" width="2" height="1.5" fill="#5a2424"/><rect x="2243.7" y="583.6" width="8" height="3.5" fill="none" stroke="#f07676" stroke-width="2"/><rect x="2257.1" y="574.7" width="2" height="28.3" fill="#7cd0f0"/><rect x="2253.8" y="584.1" width="9" height="14.9" fill="#7cd0f0" stroke="#7cd0f0" stroke-opacity="0.45" stroke-width="1.4"/><rect x="2267.8" y="595.1" width="2" height="32.2" fill="#7cd0f0"/><rect x="2264.4" y="595.9" width="9" height="20.4" fill="#7cd0f0" stroke="#7cd0f0" stroke-opacity="0.45" stroke-width="1.4"/><rect x="2278.4" y="612.4" width="2" height="14.9" fill="#7cd0f0"/><rect x="2275.1" y="618.7" width="9" height="5.5" fill="#7cd0f0" stroke="#7cd0f0" stroke-opacity="0.45" stroke-width="1.4"/><rect x="2289.0" y="612.4" width="2" height="19.6" fill="#7cd0f0"/><rect x="2285.7" y="620.3" width="9" height="3.9" fill="#7cd0f0" stroke="#7cd0f0" stroke-opacity="0.45" stroke-width="1.4"/><rect x="2299.7" y="614.0" width="2" height="19.6" fill="#7cd0f0"/><rect x="2296.4" y="625.0" width="9" height="2.4" fill="#7cd0f0" stroke="#7cd0f0" stroke-opacity="0.45" stroke-width="1.4"/><rect x="2310.3" y="625.8" width="2" height="22.0" fill="#7cd0f0"/><rect x="2307.0" y="626.5" width="9" height="13.3" fill="#7cd0f0" stroke="#7cd0f0" stroke-opacity="0.45" stroke-width="1.4"/><rect x="2321.0" y="637.7" width="2" height="19.5" fill="#7cd0f0"/><rect x="2317.7" y="638.3" width="9" height="18.1" fill="#7cd0f0" stroke="#7cd0f0" stroke-opacity="0.45" stroke-width="1.4"/><rect x="2331.6" y="642.2" width="2" height="4.7" fill="#f07676"/><rect x="2331.6" y="655.6" width="2" height="0.8" fill="#f07676"/><rect x="2331.6" y="649.0" width="2" height="4.6" fill="#5a2424"/><rect x="2328.8" y="648.0" width="8" height="6.6" fill="none" stroke="#f07676" stroke-width="2"/><rect x="2342.3" y="622.6" width="2" height="16.5" fill="#f07676"/><rect x="2342.3" y="641.5" width="2" height="10.2" fill="#f07676"/><rect x="2338.6" y="639.1" width="9.6" height="2.4" fill="#f07676"/><rect x="2352.9" y="635.2" width="2" height="16.5" fill="#7cd0f0"/><rect x="2349.6" y="636.0" width="9" height="14.9" fill="#7cd0f0" stroke="#7cd0f0" stroke-opacity="0.45" stroke-width="1.4"/><rect x="2363.6" y="626.5" width="2" height="8.6" fill="#f07676"/><rect x="2363.6" y="652.4" width="2" height="0.8" fill="#f07676"/><rect x="2363.6" y="637.2" width="2" height="13.3" fill="#5a2424"/><rect x="2360.8" y="636.2" width="8" height="15.3" fill="none" stroke="#f07676" stroke-width="2"/><rect x="2370.7" y="632.1" width="9.2" height="3.1" fill="#3c7c90"/><rect x="2384.8" y="608.5" width="2" height="0.8" fill="#f07676"/><rect x="2384.8" y="642.3" width="2" height="13.3" fill="#f07676"/><rect x="2384.8" y="611.3" width="2" height="29.0" fill="#5a2424"/><rect x="2382.0" y="610.3" width="8" height="31.0" fill="none" stroke="#f07676" stroke-width="2"/><rect x="2395.5" y="582.6" width="2" height="6.3" fill="#f07676"/><rect x="2395.5" y="607.7" width="2" height="0.8" fill="#f07676"/><rect x="2395.5" y="590.9" width="2" height="14.8" fill="#5a2424"/><rect x="2392.7" y="589.9" width="8" height="16.8" fill="none" stroke="#f07676" stroke-width="2"/><rect x="2406.1" y="577.9" width="2" height="7.1" fill="#f07676"/><rect x="2406.1" y="591.2" width="2" height="11.0" fill="#f07676"/><rect x="2406.1" y="587.0" width="2" height="2.3" fill="#5a2424"/><rect x="2403.3" y="586.0" width="8" height="4.3" fill="none" stroke="#f07676" stroke-width="2"/><rect x="2416.8" y="577.9" width="2" height="18.1" fill="#7cd0f0"/><rect x="2413.5" y="587.3" width="9" height="7.9" fill="#7cd0f0" stroke="#7cd0f0" stroke-opacity="0.45" stroke-width="1.4"/><rect x="2427.4" y="580.3" width="2" height="4.7" fill="#f07676"/><rect x="2427.4" y="592.8" width="2" height="6.3" fill="#f07676"/><rect x="2427.4" y="587.0" width="2" height="3.9" fill="#5a2424"/><rect x="2424.6" y="586.0" width="8" height="5.9" fill="none" stroke="#f07676" stroke-width="2"/><rect x="2438.1" y="580.3" width="2" height="14.9" fill="#7cd0f0"/><rect x="2434.8" y="582.6" width="9" height="4.7" fill="#7cd0f0" stroke="#7cd0f0" stroke-opacity="0.45" stroke-width="1.4"/><rect x="2448.7" y="566.1" width="2" height="0.8" fill="#f07676"/><rect x="2448.7" y="587.3" width="2" height="3.9" fill="#f07676"/><rect x="2448.7" y="568.9" width="2" height="16.4" fill="#5a2424"/><rect x="2445.9" y="567.9" width="8" height="18.4" fill="none" stroke="#f07676" stroke-width="2"/><rect x="2459.4" y="559.8" width="2" height="3.9" fill="#f07676"/><rect x="2459.4" y="570.0" width="2" height="3.1" fill="#f07676"/><rect x="2459.4" y="565.8" width="2" height="2.3" fill="#5a2424"/><rect x="2456.6" y="564.8" width="8" height="4.3" fill="none" stroke="#f07676" stroke-width="2"/><rect x="2470.0" y="559.8" width="2" height="0.8" fill="#f07676"/><rect x="2470.0" y="566.9" width="2" height="5.5" fill="#f07676"/><rect x="2470.0" y="562.6" width="2" height="2.3" fill="#5a2424"/><rect x="2467.2" y="561.6" width="8" height="4.3" fill="none" stroke="#f07676" stroke-width="2"/><rect x="2480.7" y="563.0" width="2" height="16.5" fill="#7cd0f0"/><rect x="2477.3" y="563.8" width="9" height="11.0" fill="#7cd0f0" stroke="#7cd0f0" stroke-opacity="0.45" stroke-width="1.4"/><rect x="2491.3" y="569.3" width="2" height="10.2" fill="#f07676"/><rect x="2488.0" y="570.0" width="9" height="3.9" fill="#f07676" stroke="#f07676" stroke-opacity="0.45" stroke-width="1.4"/><rect x="2501.9" y="560.6" width="2" height="6.3" fill="#f07676"/><rect x="2501.9" y="570.8" width="2" height="3.1" fill="#f07676"/><rect x="2498.2" y="566.9" width="9.6" height="3.9" fill="#f07676"/><rect x="2512.6" y="567.7" width="2" height="27.5" fill="#7cd0f0"/><rect x="2509.3" y="568.5" width="9" height="25.1" fill="#7cd0f0" stroke="#7cd0f0" stroke-opacity="0.45" stroke-width="1.4"/><rect x="2523.2" y="577.9" width="2" height="0.8" fill="#f07676"/><rect x="2523.2" y="591.2" width="2" height="2.4" fill="#f07676"/><rect x="2523.2" y="580.7" width="2" height="8.6" fill="#5a2424"/><rect x="2520.4" y="579.7" width="8" height="10.6" fill="none" stroke="#f07676" stroke-width="2"/><rect x="2533.9" y="572.4" width="2" height="10.2" fill="#7cd0f0"/><rect x="2530.6" y="575.5" width="9" height="2.0" fill="#7cd0f0" stroke="#7cd0f0" stroke-opacity="0.45" stroke-width="1.4"/><rect x="2544.5" y="570.0" width="2" height="4.7" fill="#f07676"/><rect x="2544.5" y="577.1" width="2" height="3.9" fill="#f07676"/><rect x="2540.8" y="574.8" width="9.6" height="2.4" fill="#f07676"/><rect x="2555.2" y="572.4" width="2" height="5.5" fill="#7cd0f0"/><rect x="2551.9" y="574.8" width="9" height="2.4" fill="#7cd0f0" stroke="#7cd0f0" stroke-opacity="0.45" stroke-width="1.4"/><rect x="2565.8" y="571.5" width="2" height="10.4" fill="#7cd0f0"/><rect x="2562.5" y="572.1" width="9" height="9.0" fill="#7cd0f0" stroke="#7cd0f0" stroke-opacity="0.45" stroke-width="1.4"/><rect x="2576.5" y="577.1" width="2" height="8.6" fill="#7cd0f0"/><rect x="2573.2" y="577.9" width="9" height="2.4" fill="#7cd0f0" stroke="#7cd0f0" stroke-opacity="0.45" stroke-width="1.4"/><rect x="2587.1" y="580.3" width="2" height="21.2" fill="#7cd0f0"/><rect x="2583.8" y="581.0" width="9" height="11.8" fill="#7cd0f0" stroke="#7cd0f0" stroke-opacity="0.45" stroke-width="1.4"/><rect x="2597.7" y="592.2" width="2" height="21.0" fill="#7cd0f0"/><rect x="2594.4" y="592.8" width="9" height="16.5" fill="#7cd0f0" stroke="#7cd0f0" stroke-opacity="0.45" stroke-width="1.4"/><rect x="2608.4" y="594.4" width="2" height="0.8" fill="#f07676"/><rect x="2608.4" y="608.5" width="2" height="4.7" fill="#f07676"/><rect x="2608.4" y="597.2" width="2" height="9.3" fill="#5a2424"/><rect x="2605.6" y="596.2" width="8" height="11.3" fill="none" stroke="#f07676" stroke-width="2"/><rect x="2619.0" y="578.7" width="2" height="5.5" fill="#f07676"/><rect x="2619.0" y="592.8" width="2" height="5.5" fill="#f07676"/><rect x="2619.0" y="586.2" width="2" height="4.6" fill="#5a2424"/><rect x="2616.2" y="585.2" width="8" height="6.6" fill="none" stroke="#f07676" stroke-width="2"/><rect x="2629.7" y="581.8" width="2" height="3.1" fill="#7cd0f0"/><rect x="2626.4" y="582.6" width="9" height="2.0" fill="#7cd0f0" stroke="#7cd0f0" stroke-opacity="0.45" stroke-width="1.4"/><rect x="2640.3" y="579.6" width="2" height="5.3" fill="#7cd0f0"/><rect x="2637.0" y="580.3" width="9" height="3.9" fill="#7cd0f0" stroke="#7cd0f0" stroke-opacity="0.45" stroke-width="1.4"/><rect x="2651.0" y="583.4" width="2" height="13.3" fill="#7cd0f0"/><rect x="2647.7" y="584.2" width="9" height="7.1" fill="#7cd0f0" stroke="#7cd0f0" stroke-opacity="0.45" stroke-width="1.4"/><rect x="2661.6" y="591.2" width="2" height="22.8" fill="#7cd0f0"/><rect x="2658.3" y="592.0" width="9" height="21.2" fill="#7cd0f0" stroke="#7cd0f0" stroke-opacity="0.45" stroke-width="1.4"/><rect x="2672.3" y="610.1" width="2" height="10.2" fill="#7cd0f0"/><rect x="2669.0" y="611.7" width="9" height="7.9" fill="#7cd0f0" stroke="#7cd0f0" stroke-opacity="0.45" stroke-width="1.4"/><rect x="2682.9" y="617.2" width="2" height="10.2" fill="#7cd0f0"/><rect x="2679.6" y="617.9" width="9" height="6.3" fill="#7cd0f0" stroke="#7cd0f0" stroke-opacity="0.45" stroke-width="1.4"/><rect x="2693.6" y="617.2" width="2" height="5.2" fill="#f07676"/><rect x="2693.6" y="624.3" width="2" height="7.0" fill="#f07676"/><rect x="2689.8" y="622.3" width="9.6" height="2.0" fill="#f07676"/></g>
<g shape-rendering="crispEdges">
<rect x="28" y="1014" width="43" height="2" fill="#00e400" />
<rect x="72" y="1054" width="659" height="2" fill="#00e400" />
<rect x="732" y="1154" width="659" height="2" fill="#00e400" />
<rect x="1392" y="1072" width="659" height="2" fill="#00e400" />
<rect x="2052" y="1010" width="658" height="2" fill="#00e400" />
</g>
<g>
<polyline points="28.0,1049.1 67.0,1049.5 121.9,1055.3 169.0,1060.5 216.1,1065.5 263.3,1071.0 310.4,1078.1 357.5,1083.6 392.0,1087.8 464.2,1096.5 549.0,1106.0 627.6,1114.6 706.1,1124.0 731.2,1126.4 753.2,1127.3 772.0,1129.2 819.1,1131.9 866.2,1135.0 913.3,1137.0 960.4,1138.9 1007.6,1141.3 1054.7,1142.9 1101.8,1142.1 1152.0,1139.2 1199.1,1137.1 1261.9,1134.7 1324.7,1130.8 1387.6,1126.1 1434.7,1120.0 1481.8,1108.8 1684.0,1060.0 1739.0,1046.5 1786.1,1037.0 1879.1,1017.0 1926.2,1009.9 1973.3,1002.9 2020.4,997.0 2051.8,993.4 2059.7,991.9 2083.3,975.4 2114.7,954.2 2146.1,935.3 2177.5,917.3 2208.9,900.0 2308.8,854.0 2442.7,798.4 2558.7,747.0 2629.5,710.0 2670.4,688.6 2705.7,673.7" fill="none" stroke="#5454ee" stroke-width="1.8" stroke-linejoin="round" />
<polyline points="28.0,1044.8 43.4,1045.4 59.1,1047.0 66.2,1049.8 70.9,1071.8 73.2,1089.9 81.1,1103.2 93.7,1104.0 106.2,1105.6 121.9,1108.7 137.6,1111.1 169.0,1111.4 200.4,1110.8 231.8,1112.7 263.3,1115.0 294.7,1119.7 326.1,1123.6 357.5,1126.8 392.0,1127.6 423.4,1126.8 464.2,1127.2 517.6,1128.7 564.7,1129.8 619.7,1130.3 637.0,1132.7 674.7,1134.5 713.9,1136.1 723.3,1141.3 726.5,1140.5 732.0,1129.5 735.1,1121.7 742.2,1119.3 753.2,1118.5 772.0,1120.1 803.4,1119.3 834.8,1117.7 858.4,1118.5 897.6,1120.9 929.0,1122.4 960.4,1124.8 991.8,1127.2 1023.3,1129.5 1054.7,1131.1 1086.1,1131.1 1152.0,1130.3 1199.1,1127.8 1261.9,1126.9 1309.0,1126.1 1348.3,1125.3 1371.8,1120.0 1381.3,1111.2 1387.6,1097.0 1390.7,1081.3 1394.6,1068.8 1403.3,1060.9 1411.1,1053.1 1419.0,1048.4 1426.8,1045.2 1434.7,1039.7 1442.5,1035.0 1450.4,1032.3 1466.1,1027.2 1481.4,1023.7 1490.8,1015.8 1511.3,1004.8 1531.7,997.0 1550.5,991.5 1581.9,988.4 1605.5,984.4 1629.0,981.3 1660.4,977.0 1691.8,975.0 1720.1,973.9 1739.0,971.1 1786.1,971.1 1852.0,972.7 1863.4,973.0 1910.5,973.8 1957.6,976.6 1989.0,978.2 2020.4,980.4 2034.6,981.3 2042.4,991.1 2045.6,992.7 2046.8,962.8 2048.7,931.4 2050.6,900.0 2060.0,738.0 2064.2,655.0 2065.8,639.9 2069.7,624.2 2072.8,619.5 2083.8,611.6 2094.8,610.1 2126.2,608.5 2157.6,607.7 2189.0,605.3 2204.7,603.0 2220.4,600.6 2251.8,600.3 2299.0,601.4 2346.1,603.8 2372.0,606.9 2377.5,605.3 2419.1,604.6 2466.2,603.0 2513.3,603.0 2560.4,602.2 2607.6,601.9 2654.7,601.5 2686.1,602.2 2704.9,605.4" fill="none" stroke="#b8c0c8" stroke-width="1.7" stroke-linejoin="round" />
<polyline points="28.0,1065.5 67.0,1066.8 90.5,1070.3 121.9,1075.7 153.3,1082.0 184.7,1086.7 216.1,1093.8 247.6,1100.1 279.0,1111.1 310.4,1122.1 326.1,1126.8 341.8,1129.9 357.5,1132.3 373.2,1133.9 392.0,1132.3 423.4,1135.0 454.8,1137.7 486.2,1139.7 517.6,1141.3 549.0,1142.1 580.4,1139.7 611.8,1138.9 643.3,1141.3 674.7,1146.0 706.1,1149.1 729.6,1148.8 753.2,1146.8 772.0,1146.0 803.4,1142.1 834.8,1138.1 866.2,1136.1 897.6,1135.0 929.0,1133.4 960.4,1133.0 991.8,1133.0 1007.6,1135.8 1039.0,1139.7 1070.4,1144.4 1101.8,1146.0 1133.2,1144.0 1152.0,1142.9 1199.1,1136.3 1246.2,1127.7 1285.5,1120.0 1309.0,1112.7 1340.4,1107.7 1371.8,1103.3 1390.7,1101.0 1419.0,1090.8 1450.4,1075.8 1481.8,1059.3 1519.1,1037.0 1550.5,1016.6 1581.9,999.3 1613.3,980.5 1644.7,963.2 1668.3,952.2 1691.8,946.0 1715.4,942.0 1739.0,941.2 1762.5,942.0 1786.1,946.0 1809.6,949.9 1832.0,951.0 1863.4,957.3 1894.8,964.4 1926.2,973.0 1957.6,982.4 1989.0,989.5 2012.6,991.9 2033.0,994.2 2051.8,996.6 2056.6,996.1 2067.6,978.5 2083.3,956.5 2099.0,936.1 2114.7,912.6 2124.1,900.0 2147.0,874.0 2200.0,785.3 2241.5,715.8 2251.0,700.0 2281.7,655.0 2299.0,632.0 2314.7,608.5 2321.7,600.6 2330.4,603.0 2346.1,605.3 2361.8,607.7 2377.5,609.3 2387.7,608.2 2419.1,606.9 2466.2,606.2 2513.3,605.4 2536.9,603.0 2560.4,597.5 2584.0,592.8 2607.6,590.5 2623.3,584.2 2639.0,582.6 2654.7,582.6 2670.4,584.2 2686.1,585.7 2709.6,588.1" fill="none" stroke="#f48e28" stroke-width="1.8" stroke-linejoin="round" />
<polyline points="28.0,1065.9 49.7,1065.5 67.0,1067.1 74.8,1074.2 85.8,1077.3 96.8,1087.5 107.8,1098.5 118.8,1112.7 129.8,1117.4 140.0,1124.9 150.2,1125.5 161.2,1124.9 170.6,1120.5 181.6,1114.2 192.6,1109.8 203.6,1109.5 214.6,1111.1 225.6,1113.4 236.6,1117.4 247.6,1122.9 258.5,1128.4 269.5,1134.6 280.5,1140.1 291.5,1145.6 302.5,1149.1 313.5,1150.3 324.5,1153.2 335.5,1156.3 346.5,1155.8 357.5,1151.1 368.5,1148.8 379.5,1143.3 390.5,1137.0 407.7,1132.7 431.3,1131.1 447.0,1134.2 470.5,1137.4 486.2,1140.5 517.6,1142.4 549.0,1142.9 580.4,1142.9 611.8,1143.6 624.4,1144.4 637.0,1149.9 649.5,1156.2 662.1,1160.9 674.7,1163.0 690.4,1162.2 706.1,1160.9 721.8,1159.3 732.0,1150.7 742.2,1142.1 753.2,1134.2 765.7,1127.2 787.7,1119.3 811.3,1116.9 827.0,1113.0 842.7,1113.8 858.4,1118.5 874.1,1126.4 889.8,1132.7 905.5,1134.2 921.2,1138.1 936.9,1142.9 952.6,1150.7 968.3,1157.0 984.0,1158.6 1007.6,1158.6 1031.1,1159.3 1046.8,1160.9 1059.4,1161.7 1070.4,1155.4 1086.1,1144.4 1101.8,1132.7 1117.5,1122.4 1133.2,1116.2 1152.0,1111.5 1183.4,1113.5 1214.8,1112.4 1246.2,1109.6 1277.6,1106.5 1293.3,1104.1 1309.0,1099.4 1324.7,1095.5 1340.4,1092.3 1356.1,1089.2 1371.8,1087.6 1384.4,1083.7 1392.3,1076.6 1403.3,1065.6 1411.1,1053.1 1419.0,1040.5 1426.8,1027.9 1434.7,1015.4 1442.5,1006.0 1450.4,998.9 1458.2,994.2 1466.1,991.0 1481.8,985.5 1492.4,980.5 1503.4,969.5 1519.1,952.2 1534.8,935.7 1545.8,927.1 1556.8,928.7 1569.4,936.5 1581.9,942.8 1594.5,948.3 1603.9,946.0 1613.3,938.9 1622.8,932.6 1635.3,931.0 1660.4,930.3 1684.0,931.8 1704.4,933.4 1720.1,940.5 1731.1,950.7 1742.1,960.1 1754.7,968.7 1767.2,974.2 1779.8,974.2 1793.9,972.7 1809.6,970.3 1833.2,971.9 1847.7,976.2 1863.4,981.7 1879.1,985.6 1894.8,989.5 1910.5,992.7 1926.2,998.1 1941.9,1003.6 1957.6,1008.0 1973.3,1010.2 1989.0,1011.5 2004.7,1012.8 2012.6,1011.5 2020.4,1008.4 2033.0,1006.8 2044.0,1005.5 2055.0,1004.4 2059.7,962.8 2064.4,931.4 2068.3,900.0 2090.0,738.0 2101.0,655.0 2103.5,632.0 2106.6,608.5 2113.7,599.1 2119.9,605.3 2129.4,606.6 2141.9,604.6 2157.6,603.0 2168.6,604.6 2181.2,603.0 2192.2,596.7 2203.2,584.9 2214.2,575.5 2225.2,571.6 2236.1,569.2 2247.1,570.8 2258.1,580.2 2269.1,592.0 2280.1,602.2 2291.1,610.8 2302.1,619.5 2313.1,627.3 2324.1,635.2 2335.1,639.9 2346.1,641.5 2357.1,646.2 2368.1,644.6 2379.0,638.3 2384.6,633.6 2390.0,630.5 2397.1,622.7 2401.0,616.3 2409.7,608.5 2422.3,597.5 2434.8,589.7 2447.4,585.0 2459.9,577.1 2472.5,571.6 2485.1,568.5 2497.6,567.7 2510.2,571.6 2522.8,575.5 2535.3,577.1 2547.9,577.9 2560.4,577.9 2573.0,577.1 2585.6,580.3 2598.1,588.1 2610.7,592.0 2623.3,592.8 2635.8,592.0 2648.4,590.5 2660.9,590.5 2670.4,596.0 2679.8,603.0 2692.4,613.2 2705.7,621.9" fill="none" stroke="#90dc52" stroke-width="1.8" stroke-linejoin="round" />
</g>
<g shape-rendering="crispEdges">
<rect x="12" y="1266" width="2856" height="2" fill="#c0c0c0" />
<rect x="12" y="1402" width="2856" height="2" fill="#c0c0c0" />
<rect x="29" y="1390" width="9" height="6" fill="#3c5068"/><rect x="30" y="1391" width="7" height="5" fill="#54708e"/><rect x="39" y="1393" width="9" height="3" fill="#3c5068"/><rect x="40" y="1394" width="7" height="2" fill="#54708e"/><rect x="50" y="1390" width="9" height="6" fill="#3c5068"/><rect x="51" y="1391" width="7" height="5" fill="#54708e"/><rect x="61" y="1352" width="9" height="44" fill="#3c5068"/><rect x="62" y="1353" width="7" height="43" fill="#54708e"/><rect x="71" y="1388" width="9" height="8" fill="#3c5068"/><rect x="72" y="1389" width="7" height="7" fill="#54708e"/><rect x="82" y="1392" width="9" height="4" fill="#3c5068"/><rect x="83" y="1392" width="7" height="4" fill="#54708e"/><rect x="92" y="1392" width="9" height="4" fill="#3c5068"/><rect x="93" y="1393" width="7" height="3" fill="#54708e"/><rect x="103" y="1393" width="9" height="3" fill="#3c5068"/><rect x="104" y="1394" width="7" height="2" fill="#54708e"/><rect x="114" y="1394" width="9" height="2" fill="#3c5068"/><rect x="115" y="1395" width="7" height="1" fill="#54708e"/><rect x="124" y="1393" width="9" height="3" fill="#3c5068"/><rect x="125" y="1394" width="7" height="2" fill="#54708e"/><rect x="135" y="1393" width="9" height="3" fill="#3c5068"/><rect x="136" y="1394" width="7" height="2" fill="#54708e"/><rect x="146" y="1394" width="9" height="2" fill="#3c5068"/><rect x="147" y="1395" width="7" height="1" fill="#54708e"/><rect x="156" y="1393" width="9" height="3" fill="#3c5068"/><rect x="157" y="1394" width="7" height="2" fill="#54708e"/><rect x="167" y="1394" width="9" height="2" fill="#3c5068"/><rect x="168" y="1395" width="7" height="1" fill="#54708e"/><rect x="178" y="1394" width="9" height="2" fill="#3c5068"/><rect x="179" y="1395" width="7" height="1" fill="#54708e"/><rect x="188" y="1394" width="9" height="2" fill="#3c5068"/><rect x="189" y="1395" width="7" height="1" fill="#54708e"/><rect x="199" y="1393" width="9" height="3" fill="#3c5068"/><rect x="200" y="1394" width="7" height="2" fill="#54708e"/><rect x="210" y="1393" width="9" height="3" fill="#3c5068"/><rect x="211" y="1394" width="7" height="2" fill="#54708e"/><rect x="220" y="1394" width="9" height="2" fill="#3c5068"/><rect x="221" y="1395" width="7" height="1" fill="#54708e"/><rect x="231" y="1394" width="9" height="2" fill="#3c5068"/><rect x="232" y="1395" width="7" height="1" fill="#54708e"/><rect x="241" y="1394" width="9" height="2" fill="#3c5068"/><rect x="242" y="1395" width="7" height="1" fill="#54708e"/><rect x="252" y="1393" width="9" height="3" fill="#3c5068"/><rect x="253" y="1394" width="7" height="2" fill="#54708e"/><rect x="263" y="1393" width="9" height="3" fill="#3c5068"/><rect x="264" y="1394" width="7" height="2" fill="#54708e"/><rect x="273" y="1394" width="9" height="2" fill="#3c5068"/><rect x="274" y="1395" width="7" height="1" fill="#54708e"/><rect x="284" y="1392" width="9" height="4" fill="#3c5068"/><rect x="285" y="1393" width="7" height="3" fill="#54708e"/><rect x="295" y="1393" width="9" height="3" fill="#3c5068"/><rect x="296" y="1394" width="7" height="2" fill="#54708e"/><rect x="305" y="1394" width="9" height="2" fill="#3c5068"/><rect x="306" y="1395" width="7" height="1" fill="#54708e"/><rect x="316" y="1394" width="9" height="2" fill="#3c5068"/><rect x="317" y="1395" width="7" height="1" fill="#54708e"/><rect x="327" y="1392" width="9" height="4" fill="#3c5068"/><rect x="328" y="1393" width="7" height="3" fill="#54708e"/><rect x="337" y="1392" width="9" height="4" fill="#3c5068"/><rect x="338" y="1393" width="7" height="3" fill="#54708e"/><rect x="348" y="1393" width="9" height="3" fill="#3c5068"/><rect x="349" y="1394" width="7" height="2" fill="#54708e"/><rect x="359" y="1394" width="9" height="2" fill="#3c5068"/><rect x="360" y="1395" width="7" height="1" fill="#54708e"/><rect x="369" y="1393" width="9" height="3" fill="#3c5068"/><rect x="370" y="1394" width="7" height="2" fill="#54708e"/><rect x="380" y="1393" width="9" height="3" fill="#3c5068"/><rect x="381" y="1394" width="7" height="2" fill="#54708e"/><rect x="391" y="1393" width="9" height="3" fill="#3c5068"/><rect x="392" y="1394" width="7" height="2" fill="#54708e"/><rect x="401" y="1390" width="9" height="6" fill="#3c5068"/><rect x="402" y="1391" width="7" height="5" fill="#54708e"/><rect x="412" y="1394" width="9" height="2" fill="#3c5068"/><rect x="413" y="1395" width="7" height="1" fill="#54708e"/><rect x="422" y="1394" width="9" height="2" fill="#3c5068"/><rect x="423" y="1395" width="7" height="1" fill="#54708e"/><rect x="433" y="1393" width="9" height="3" fill="#3c5068"/><rect x="434" y="1394" width="7" height="2" fill="#54708e"/><rect x="444" y="1392" width="9" height="4" fill="#3c5068"/><rect x="445" y="1393" width="7" height="3" fill="#54708e"/><rect x="454" y="1394" width="9" height="2" fill="#3c5068"/><rect x="455" y="1395" width="7" height="1" fill="#54708e"/><rect x="465" y="1393" width="9" height="3" fill="#3c5068"/><rect x="466" y="1394" width="7" height="2" fill="#54708e"/><rect x="476" y="1393" width="9" height="3" fill="#3c5068"/><rect x="477" y="1394" width="7" height="2" fill="#54708e"/><rect x="486" y="1394" width="9" height="2" fill="#3c5068"/><rect x="487" y="1395" width="7" height="1" fill="#54708e"/><rect x="497" y="1393" width="9" height="3" fill="#3c5068"/><rect x="498" y="1394" width="7" height="2" fill="#54708e"/><rect x="508" y="1394" width="9" height="2" fill="#3c5068"/><rect x="509" y="1395" width="7" height="1" fill="#54708e"/><rect x="518" y="1393" width="9" height="3" fill="#3c5068"/><rect x="519" y="1394" width="7" height="2" fill="#54708e"/><rect x="529" y="1393" width="9" height="3" fill="#3c5068"/><rect x="530" y="1394" width="7" height="2" fill="#54708e"/><rect x="540" y="1393" width="9" height="3" fill="#3c5068"/><rect x="541" y="1394" width="7" height="2" fill="#54708e"/><rect x="550" y="1392" width="9" height="4" fill="#3c5068"/><rect x="551" y="1393" width="7" height="3" fill="#54708e"/><rect x="561" y="1392" width="9" height="4" fill="#3c5068"/><rect x="562" y="1393" width="7" height="3" fill="#54708e"/><rect x="571" y="1394" width="9" height="2" fill="#3c5068"/><rect x="572" y="1395" width="7" height="1" fill="#54708e"/><rect x="582" y="1394" width="9" height="2" fill="#3c5068"/><rect x="583" y="1395" width="7" height="1" fill="#54708e"/><rect x="593" y="1393" width="9" height="3" fill="#3c5068"/><rect x="594" y="1394" width="7" height="2" fill="#54708e"/><rect x="603" y="1393" width="9" height="3" fill="#3c5068"/><rect x="604" y="1394" width="7" height="2" fill="#54708e"/><rect x="614" y="1392" width="9" height="4" fill="#3c5068"/><rect x="615" y="1393" width="7" height="3" fill="#54708e"/><rect x="625" y="1392" width="9" height="4" fill="#3c5068"/><rect x="626" y="1393" width="7" height="3" fill="#54708e"/><rect x="635" y="1390" width="9" height="6" fill="#3c5068"/><rect x="636" y="1392" width="7" height="4" fill="#54708e"/><rect x="646" y="1394" width="9" height="2" fill="#3c5068"/><rect x="647" y="1395" width="7" height="1" fill="#54708e"/><rect x="657" y="1393" width="9" height="3" fill="#3c5068"/><rect x="658" y="1394" width="7" height="2" fill="#54708e"/><rect x="667" y="1392" width="9" height="4" fill="#3c5068"/><rect x="668" y="1393" width="7" height="3" fill="#54708e"/><rect x="678" y="1394" width="9" height="2" fill="#3c5068"/><rect x="679" y="1395" width="7" height="1" fill="#54708e"/><rect x="689" y="1393" width="9" height="3" fill="#3c5068"/><rect x="690" y="1394" width="7" height="2" fill="#54708e"/><rect x="699" y="1394" width="9" height="2" fill="#3c5068"/><rect x="700" y="1395" width="7" height="1" fill="#54708e"/><rect x="710" y="1390" width="9" height="6" fill="#3c5068"/><rect x="711" y="1391" width="7" height="5" fill="#54708e"/><rect x="721" y="1363" width="9" height="33" fill="#3c5068"/><rect x="722" y="1364" width="7" height="32" fill="#54708e"/><rect x="731" y="1388" width="9" height="8" fill="#3c5068"/><rect x="732" y="1389" width="7" height="7" fill="#54708e"/><rect x="742" y="1391" width="9" height="5" fill="#3c5068"/><rect x="743" y="1392" width="7" height="4" fill="#54708e"/><rect x="752" y="1393" width="9" height="3" fill="#3c5068"/><rect x="753" y="1394" width="7" height="2" fill="#54708e"/><rect x="763" y="1393" width="9" height="3" fill="#3c5068"/><rect x="764" y="1394" width="7" height="2" fill="#54708e"/><rect x="774" y="1392" width="9" height="4" fill="#3c5068"/><rect x="775" y="1393" width="7" height="3" fill="#54708e"/><rect x="784" y="1393" width="9" height="3" fill="#3c5068"/><rect x="785" y="1394" width="7" height="2" fill="#54708e"/><rect x="795" y="1393" width="9" height="3" fill="#3c5068"/><rect x="796" y="1394" width="7" height="2" fill="#54708e"/><rect x="806" y="1393" width="9" height="3" fill="#3c5068"/><rect x="807" y="1394" width="7" height="2" fill="#54708e"/><rect x="816" y="1393" width="9" height="3" fill="#3c5068"/><rect x="817" y="1394" width="7" height="2" fill="#54708e"/><rect x="827" y="1393" width="9" height="3" fill="#3c5068"/><rect x="828" y="1394" width="7" height="2" fill="#54708e"/><rect x="838" y="1392" width="9" height="4" fill="#3c5068"/><rect x="839" y="1394" width="7" height="2" fill="#54708e"/><rect x="848" y="1394" width="9" height="2" fill="#3c5068"/><rect x="849" y="1395" width="7" height="1" fill="#54708e"/><rect x="859" y="1392" width="9" height="4" fill="#3c5068"/><rect x="860" y="1393" width="7" height="3" fill="#54708e"/><rect x="870" y="1394" width="9" height="2" fill="#3c5068"/><rect x="871" y="1395" width="7" height="1" fill="#54708e"/><rect x="880" y="1392" width="9" height="4" fill="#3c5068"/><rect x="881" y="1393" width="7" height="3" fill="#54708e"/><rect x="891" y="1392" width="9" height="4" fill="#3c5068"/><rect x="892" y="1393" width="7" height="3" fill="#54708e"/><rect x="901" y="1394" width="9" height="2" fill="#3c5068"/><rect x="902" y="1395" width="7" height="1" fill="#54708e"/><rect x="912" y="1394" width="9" height="2" fill="#3c5068"/><rect x="913" y="1395" width="7" height="1" fill="#54708e"/><rect x="923" y="1393" width="9" height="3" fill="#3c5068"/><rect x="924" y="1394" width="7" height="2" fill="#54708e"/><rect x="933" y="1393" width="9" height="3" fill="#3c5068"/><rect x="934" y="1394" width="7" height="2" fill="#54708e"/><rect x="944" y="1393" width="9" height="3" fill="#3c5068"/><rect x="945" y="1394" width="7" height="2" fill="#54708e"/><rect x="955" y="1393" width="9" height="3" fill="#3c5068"/><rect x="956" y="1394" width="7" height="2" fill="#54708e"/><rect x="965" y="1393" width="9" height="3" fill="#3c5068"/><rect x="966" y="1394" width="7" height="2" fill="#54708e"/><rect x="976" y="1392" width="9" height="4" fill="#3c5068"/><rect x="977" y="1393" width="7" height="3" fill="#54708e"/><rect x="987" y="1393" width="9" height="3" fill="#3c5068"/><rect x="988" y="1394" width="7" height="2" fill="#54708e"/><rect x="997" y="1393" width="9" height="3" fill="#3c5068"/><rect x="998" y="1394" width="7" height="2" fill="#54708e"/><rect x="1008" y="1393" width="9" height="3" fill="#3c5068"/><rect x="1009" y="1394" width="7" height="2" fill="#54708e"/><rect x="1019" y="1394" width="9" height="2" fill="#3c5068"/><rect x="1020" y="1395" width="7" height="1" fill="#54708e"/><rect x="1029" y="1394" width="9" height="2" fill="#3c5068"/><rect x="1030" y="1395" width="7" height="1" fill="#54708e"/><rect x="1040" y="1393" width="9" height="3" fill="#3c5068"/><rect x="1041" y="1394" width="7" height="2" fill="#54708e"/><rect x="1051" y="1393" width="9" height="3" fill="#3c5068"/><rect x="1052" y="1394" width="7" height="2" fill="#54708e"/><rect x="1061" y="1390" width="9" height="6" fill="#3c5068"/><rect x="1062" y="1391" width="7" height="5" fill="#54708e"/><rect x="1072" y="1392" width="9" height="4" fill="#3c5068"/><rect x="1073" y="1393" width="7" height="3" fill="#54708e"/><rect x="1082" y="1393" width="9" height="3" fill="#3c5068"/><rect x="1083" y="1394" width="7" height="2" fill="#54708e"/><rect x="1093" y="1394" width="9" height="2" fill="#3c5068"/><rect x="1094" y="1395" width="7" height="1" fill="#54708e"/><rect x="1104" y="1393" width="9" height="3" fill="#3c5068"/><rect x="1105" y="1394" width="7" height="2" fill="#54708e"/><rect x="1114" y="1393" width="9" height="3" fill="#3c5068"/><rect x="1115" y="1394" width="7" height="2" fill="#54708e"/><rect x="1125" y="1394" width="9" height="2" fill="#3c5068"/><rect x="1126" y="1395" width="7" height="1" fill="#54708e"/><rect x="1136" y="1392" width="9" height="4" fill="#3c5068"/><rect x="1137" y="1393" width="7" height="3" fill="#54708e"/><rect x="1146" y="1394" width="9" height="2" fill="#3c5068"/><rect x="1147" y="1395" width="7" height="1" fill="#54708e"/><rect x="1157" y="1392" width="9" height="4" fill="#3c5068"/><rect x="1158" y="1393" width="7" height="3" fill="#54708e"/><rect x="1168" y="1393" width="9" height="3" fill="#3c5068"/><rect x="1169" y="1394" width="7" height="2" fill="#54708e"/><rect x="1178" y="1393" width="9" height="3" fill="#3c5068"/><rect x="1179" y="1394" width="7" height="2" fill="#54708e"/><rect x="1189" y="1392" width="9" height="4" fill="#3c5068"/><rect x="1190" y="1393" width="7" height="3" fill="#54708e"/><rect x="1200" y="1392" width="9" height="4" fill="#3c5068"/><rect x="1201" y="1393" width="7" height="3" fill="#54708e"/><rect x="1210" y="1393" width="9" height="3" fill="#3c5068"/><rect x="1211" y="1394" width="7" height="2" fill="#54708e"/><rect x="1221" y="1393" width="9" height="3" fill="#3c5068"/><rect x="1222" y="1394" width="7" height="2" fill="#54708e"/><rect x="1231" y="1392" width="9" height="4" fill="#3c5068"/><rect x="1232" y="1393" width="7" height="3" fill="#54708e"/><rect x="1242" y="1393" width="9" height="3" fill="#3c5068"/><rect x="1243" y="1394" width="7" height="2" fill="#54708e"/><rect x="1253" y="1393" width="9" height="3" fill="#3c5068"/><rect x="1254" y="1394" width="7" height="2" fill="#54708e"/><rect x="1263" y="1393" width="9" height="3" fill="#3c5068"/><rect x="1264" y="1394" width="7" height="2" fill="#54708e"/><rect x="1274" y="1393" width="9" height="3" fill="#3c5068"/><rect x="1275" y="1394" width="7" height="2" fill="#54708e"/><rect x="1285" y="1392" width="9" height="4" fill="#3c5068"/><rect x="1286" y="1393" width="7" height="3" fill="#54708e"/><rect x="1295" y="1393" width="9" height="3" fill="#3c5068"/><rect x="1296" y="1394" width="7" height="2" fill="#54708e"/><rect x="1306" y="1394" width="9" height="2" fill="#3c5068"/><rect x="1307" y="1395" width="7" height="1" fill="#54708e"/><rect x="1317" y="1392" width="9" height="4" fill="#3c5068"/><rect x="1318" y="1393" width="7" height="3" fill="#54708e"/><rect x="1327" y="1394" width="9" height="2" fill="#3c5068"/><rect x="1328" y="1395" width="7" height="1" fill="#54708e"/><rect x="1338" y="1393" width="9" height="3" fill="#3c5068"/><rect x="1339" y="1394" width="7" height="2" fill="#54708e"/><rect x="1349" y="1393" width="9" height="3" fill="#3c5068"/><rect x="1350" y="1394" width="7" height="2" fill="#54708e"/><rect x="1359" y="1392" width="9" height="4" fill="#3c5068"/><rect x="1360" y="1393" width="7" height="3" fill="#54708e"/><rect x="1370" y="1392" width="9" height="4" fill="#3c5068"/><rect x="1371" y="1393" width="7" height="3" fill="#54708e"/><rect x="1381" y="1366" width="9" height="30" fill="#3c5068"/><rect x="1382" y="1367" width="7" height="29" fill="#54708e"/><rect x="1391" y="1388" width="9" height="8" fill="#3c5068"/><rect x="1392" y="1389" width="7" height="7" fill="#54708e"/><rect x="1402" y="1391" width="9" height="5" fill="#3c5068"/><rect x="1403" y="1392" width="7" height="4" fill="#54708e"/><rect x="1412" y="1392" width="9" height="4" fill="#3c5068"/><rect x="1413" y="1392" width="7" height="4" fill="#54708e"/><rect x="1423" y="1393" width="9" height="3" fill="#3c5068"/><rect x="1424" y="1394" width="7" height="2" fill="#54708e"/><rect x="1434" y="1392" width="9" height="4" fill="#3c5068"/><rect x="1435" y="1393" width="7" height="3" fill="#54708e"/><rect x="1444" y="1393" width="9" height="3" fill="#3c5068"/><rect x="1445" y="1394" width="7" height="2" fill="#54708e"/><rect x="1455" y="1392" width="9" height="4" fill="#3c5068"/><rect x="1456" y="1393" width="7" height="3" fill="#54708e"/><rect x="1466" y="1392" width="9" height="4" fill="#3c5068"/><rect x="1467" y="1393" width="7" height="3" fill="#54708e"/><rect x="1476" y="1393" width="9" height="3" fill="#3c5068"/><rect x="1477" y="1394" width="7" height="2" fill="#54708e"/><rect x="1487" y="1390" width="9" height="6" fill="#3c5068"/><rect x="1488" y="1391" width="7" height="5" fill="#54708e"/><rect x="1498" y="1392" width="9" height="4" fill="#3c5068"/><rect x="1499" y="1393" width="7" height="3" fill="#54708e"/><rect x="1508" y="1393" width="9" height="3" fill="#3c5068"/><rect x="1509" y="1394" width="7" height="2" fill="#54708e"/><rect x="1519" y="1392" width="9" height="4" fill="#3c5068"/><rect x="1520" y="1393" width="7" height="3" fill="#54708e"/><rect x="1530" y="1393" width="9" height="3" fill="#3c5068"/><rect x="1531" y="1394" width="7" height="2" fill="#54708e"/><rect x="1540" y="1394" width="9" height="2" fill="#3c5068"/><rect x="1541" y="1395" width="7" height="1" fill="#54708e"/><rect x="1551" y="1393" width="9" height="3" fill="#3c5068"/><rect x="1552" y="1394" width="7" height="2" fill="#54708e"/><rect x="1561" y="1393" width="9" height="3" fill="#3c5068"/><rect x="1562" y="1394" width="7" height="2" fill="#54708e"/><rect x="1572" y="1394" width="9" height="2" fill="#3c5068"/><rect x="1573" y="1395" width="7" height="1" fill="#54708e"/><rect x="1583" y="1393" width="9" height="3" fill="#3c5068"/><rect x="1584" y="1394" width="7" height="2" fill="#54708e"/><rect x="1593" y="1394" width="9" height="2" fill="#3c5068"/><rect x="1594" y="1395" width="7" height="1" fill="#54708e"/><rect x="1604" y="1393" width="9" height="3" fill="#3c5068"/><rect x="1605" y="1394" width="7" height="2" fill="#54708e"/><rect x="1615" y="1394" width="9" height="2" fill="#3c5068"/><rect x="1616" y="1395" width="7" height="1" fill="#54708e"/><rect x="1625" y="1394" width="9" height="2" fill="#3c5068"/><rect x="1626" y="1395" width="7" height="1" fill="#54708e"/><rect x="1636" y="1392" width="9" height="4" fill="#3c5068"/><rect x="1637" y="1393" width="7" height="3" fill="#54708e"/><rect x="1647" y="1393" width="9" height="3" fill="#3c5068"/><rect x="1648" y="1394" width="7" height="2" fill="#54708e"/><rect x="1657" y="1394" width="9" height="2" fill="#3c5068"/><rect x="1658" y="1395" width="7" height="1" fill="#54708e"/><rect x="1668" y="1392" width="9" height="4" fill="#3c5068"/><rect x="1669" y="1393" width="7" height="3" fill="#54708e"/><rect x="1679" y="1394" width="9" height="2" fill="#3c5068"/><rect x="1680" y="1395" width="7" height="1" fill="#54708e"/><rect x="1689" y="1393" width="9" height="3" fill="#3c5068"/><rect x="1690" y="1394" width="7" height="2" fill="#54708e"/><rect x="1700" y="1393" width="9" height="3" fill="#3c5068"/><rect x="1701" y="1394" width="7" height="2" fill="#54708e"/><rect x="1711" y="1392" width="9" height="4" fill="#3c5068"/><rect x="1712" y="1393" width="7" height="3" fill="#54708e"/><rect x="1721" y="1388" width="9" height="8" fill="#3c5068"/><rect x="1722" y="1389" width="7" height="7" fill="#54708e"/><rect x="1732" y="1390" width="9" height="6" fill="#3c5068"/><rect x="1733" y="1391" width="7" height="5" fill="#54708e"/><rect x="1742" y="1391" width="9" height="5" fill="#3c5068"/><rect x="1743" y="1392" width="7" height="4" fill="#54708e"/><rect x="1753" y="1393" width="9" height="3" fill="#3c5068"/><rect x="1754" y="1394" width="7" height="2" fill="#54708e"/><rect x="1764" y="1393" width="9" height="3" fill="#3c5068"/><rect x="1765" y="1394" width="7" height="2" fill="#54708e"/><rect x="1774" y="1393" width="9" height="3" fill="#3c5068"/><rect x="1775" y="1394" width="7" height="2" fill="#54708e"/><rect x="1785" y="1393" width="9" height="3" fill="#3c5068"/><rect x="1786" y="1394" width="7" height="2" fill="#54708e"/><rect x="1796" y="1394" width="9" height="2" fill="#3c5068"/><rect x="1797" y="1395" width="7" height="1" fill="#54708e"/><rect x="1806" y="1392" width="9" height="4" fill="#3c5068"/><rect x="1807" y="1393" width="7" height="3" fill="#54708e"/><rect x="1817" y="1393" width="9" height="3" fill="#3c5068"/><rect x="1818" y="1394" width="7" height="2" fill="#54708e"/><rect x="1828" y="1392" width="9" height="4" fill="#3c5068"/><rect x="1829" y="1393" width="7" height="3" fill="#54708e"/><rect x="1838" y="1393" width="9" height="3" fill="#3c5068"/><rect x="1839" y="1394" width="7" height="2" fill="#54708e"/><rect x="1849" y="1393" width="9" height="3" fill="#3c5068"/><rect x="1850" y="1394" width="7" height="2" fill="#54708e"/><rect x="1860" y="1392" width="9" height="4" fill="#3c5068"/><rect x="1861" y="1393" width="7" height="3" fill="#54708e"/><rect x="1870" y="1393" width="9" height="3" fill="#3c5068"/><rect x="1871" y="1394" width="7" height="2" fill="#54708e"/><rect x="1881" y="1393" width="9" height="3" fill="#3c5068"/><rect x="1882" y="1394" width="7" height="2" fill="#54708e"/><rect x="1891" y="1392" width="9" height="4" fill="#3c5068"/><rect x="1892" y="1393" width="7" height="3" fill="#54708e"/><rect x="1902" y="1393" width="9" height="3" fill="#3c5068"/><rect x="1903" y="1394" width="7" height="2" fill="#54708e"/><rect x="1913" y="1394" width="9" height="2" fill="#3c5068"/><rect x="1914" y="1395" width="7" height="1" fill="#54708e"/><rect x="1923" y="1394" width="9" height="2" fill="#3c5068"/><rect x="1924" y="1395" width="7" height="1" fill="#54708e"/><rect x="1934" y="1394" width="9" height="2" fill="#3c5068"/><rect x="1935" y="1395" width="7" height="1" fill="#54708e"/><rect x="1945" y="1394" width="9" height="2" fill="#3c5068"/><rect x="1946" y="1395" width="7" height="1" fill="#54708e"/><rect x="1955" y="1394" width="9" height="2" fill="#3c5068"/><rect x="1956" y="1395" width="7" height="1" fill="#54708e"/><rect x="1966" y="1394" width="9" height="2" fill="#3c5068"/><rect x="1967" y="1395" width="7" height="1" fill="#54708e"/><rect x="1977" y="1392" width="9" height="4" fill="#3c5068"/><rect x="1978" y="1393" width="7" height="3" fill="#54708e"/><rect x="1987" y="1394" width="9" height="2" fill="#3c5068"/><rect x="1988" y="1395" width="7" height="1" fill="#54708e"/><rect x="1998" y="1394" width="9" height="2" fill="#3c5068"/><rect x="1999" y="1395" width="7" height="1" fill="#54708e"/><rect x="2009" y="1388" width="9" height="8" fill="#3c5068"/><rect x="2010" y="1390" width="7" height="6" fill="#54708e"/><rect x="2019" y="1390" width="9" height="6" fill="#3c5068"/><rect x="2020" y="1390" width="7" height="6" fill="#54708e"/><rect x="2030" y="1382" width="9" height="14" fill="#3c5068"/><rect x="2031" y="1383" width="7" height="13" fill="#54708e"/><rect x="2041" y="1289" width="9" height="107" fill="#3c5068"/><rect x="2042" y="1290" width="7" height="106" fill="#54708e"/><rect x="2062" y="1347" width="9" height="49" fill="#3c5068"/><rect x="2063" y="1348" width="7" height="48" fill="#54708e"/><rect x="2072" y="1368" width="9" height="28" fill="#3c5068"/><rect x="2073" y="1369" width="7" height="27" fill="#54708e"/><rect x="2083" y="1382" width="9" height="14" fill="#3c5068"/><rect x="2084" y="1383" width="7" height="13" fill="#54708e"/><rect x="2094" y="1384" width="9" height="12" fill="#3c5068"/><rect x="2095" y="1385" width="7" height="11" fill="#54708e"/><rect x="2104" y="1388" width="9" height="8" fill="#3c5068"/><rect x="2105" y="1389" width="7" height="7" fill="#54708e"/><rect x="2115" y="1388" width="9" height="8" fill="#3c5068"/><rect x="2116" y="1389" width="7" height="7" fill="#54708e"/><rect x="2126" y="1389" width="9" height="7" fill="#3c5068"/><rect x="2127" y="1390" width="7" height="6" fill="#54708e"/><rect x="2136" y="1389" width="9" height="7" fill="#3c5068"/><rect x="2137" y="1390" width="7" height="6" fill="#54708e"/><rect x="2147" y="1390" width="9" height="6" fill="#3c5068"/><rect x="2148" y="1391" width="7" height="5" fill="#54708e"/><rect x="2158" y="1390" width="9" height="6" fill="#3c5068"/><rect x="2159" y="1391" width="7" height="5" fill="#54708e"/><rect x="2168" y="1390" width="9" height="6" fill="#3c5068"/><rect x="2169" y="1392" width="7" height="4" fill="#54708e"/><rect x="2179" y="1391" width="9" height="5" fill="#3c5068"/><rect x="2180" y="1392" width="7" height="4" fill="#54708e"/><rect x="2190" y="1386" width="9" height="10" fill="#3c5068"/><rect x="2191" y="1387" width="7" height="9" fill="#54708e"/><rect x="2200" y="1388" width="9" height="8" fill="#3c5068"/><rect x="2201" y="1389" width="7" height="7" fill="#54708e"/><rect x="2211" y="1390" width="9" height="6" fill="#3c5068"/><rect x="2212" y="1391" width="7" height="5" fill="#54708e"/><rect x="2221" y="1390" width="9" height="6" fill="#3c5068"/><rect x="2222" y="1391" width="7" height="5" fill="#54708e"/><rect x="2232" y="1391" width="9" height="5" fill="#3c5068"/><rect x="2233" y="1392" width="7" height="4" fill="#54708e"/><rect x="2243" y="1394" width="9" height="2" fill="#3c5068"/><rect x="2244" y="1395" width="7" height="1" fill="#54708e"/><rect x="2253" y="1393" width="9" height="3" fill="#3c5068"/><rect x="2254" y="1394" width="7" height="2" fill="#54708e"/><rect x="2264" y="1392" width="9" height="4" fill="#3c5068"/><rect x="2265" y="1393" width="7" height="3" fill="#54708e"/><rect x="2275" y="1392" width="9" height="4" fill="#3c5068"/><rect x="2276" y="1393" width="7" height="3" fill="#54708e"/><rect x="2285" y="1392" width="9" height="4" fill="#3c5068"/><rect x="2286" y="1393" width="7" height="3" fill="#54708e"/><rect x="2296" y="1392" width="9" height="4" fill="#3c5068"/><rect x="2297" y="1393" width="7" height="3" fill="#54708e"/><rect x="2307" y="1392" width="9" height="4" fill="#3c5068"/><rect x="2308" y="1393" width="7" height="3" fill="#54708e"/><rect x="2317" y="1393" width="9" height="3" fill="#3c5068"/><rect x="2318" y="1394" width="7" height="2" fill="#54708e"/><rect x="2328" y="1388" width="9" height="8" fill="#3c5068"/><rect x="2329" y="1389" width="7" height="7" fill="#54708e"/><rect x="2339" y="1391" width="9" height="5" fill="#3c5068"/><rect x="2340" y="1392" width="7" height="4" fill="#54708e"/><rect x="2349" y="1393" width="9" height="3" fill="#3c5068"/><rect x="2350" y="1394" width="7" height="2" fill="#54708e"/><rect x="2360" y="1393" width="9" height="3" fill="#3c5068"/><rect x="2361" y="1394" width="7" height="2" fill="#54708e"/><rect x="2370" y="1394" width="9" height="2" fill="#3c5068"/><rect x="2371" y="1395" width="7" height="1" fill="#54708e"/><rect x="2381" y="1386" width="9" height="10" fill="#3c5068"/><rect x="2382" y="1387" width="7" height="9" fill="#54708e"/><rect x="2392" y="1388" width="9" height="8" fill="#3c5068"/><rect x="2393" y="1389" width="7" height="7" fill="#54708e"/><rect x="2402" y="1391" width="9" height="5" fill="#3c5068"/><rect x="2403" y="1392" width="7" height="4" fill="#54708e"/><rect x="2413" y="1394" width="9" height="2" fill="#3c5068"/><rect x="2414" y="1395" width="7" height="1" fill="#54708e"/><rect x="2424" y="1394" width="9" height="2" fill="#3c5068"/><rect x="2425" y="1395" width="7" height="1" fill="#54708e"/><rect x="2434" y="1394" width="9" height="2" fill="#3c5068"/><rect x="2435" y="1395" width="7" height="1" fill="#54708e"/><rect x="2445" y="1388" width="9" height="8" fill="#3c5068"/><rect x="2446" y="1389" width="7" height="7" fill="#54708e"/><rect x="2456" y="1391" width="9" height="5" fill="#3c5068"/><rect x="2457" y="1392" width="7" height="4" fill="#54708e"/><rect x="2466" y="1394" width="9" height="2" fill="#3c5068"/><rect x="2467" y="1395" width="7" height="1" fill="#54708e"/><rect x="2477" y="1394" width="9" height="2" fill="#3c5068"/><rect x="2478" y="1395" width="7" height="1" fill="#54708e"/><rect x="2488" y="1393" width="9" height="3" fill="#3c5068"/><rect x="2489" y="1394" width="7" height="2" fill="#54708e"/><rect x="2498" y="1393" width="9" height="3" fill="#3c5068"/><rect x="2499" y="1394" width="7" height="2" fill="#54708e"/><rect x="2509" y="1394" width="9" height="2" fill="#3c5068"/><rect x="2510" y="1395" width="7" height="1" fill="#54708e"/><rect x="2520" y="1394" width="9" height="2" fill="#3c5068"/><rect x="2521" y="1395" width="7" height="1" fill="#54708e"/><rect x="2530" y="1394" width="9" height="2" fill="#3c5068"/><rect x="2531" y="1395" width="7" height="1" fill="#54708e"/><rect x="2541" y="1393" width="9" height="3" fill="#3c5068"/><rect x="2542" y="1394" width="7" height="2" fill="#54708e"/><rect x="2551" y="1394" width="9" height="2" fill="#3c5068"/><rect x="2552" y="1395" width="7" height="1" fill="#54708e"/><rect x="2562" y="1393" width="9" height="3" fill="#3c5068"/><rect x="2563" y="1394" width="7" height="2" fill="#54708e"/><rect x="2573" y="1394" width="9" height="2" fill="#3c5068"/><rect x="2574" y="1395" width="7" height="1" fill="#54708e"/><rect x="2583" y="1393" width="9" height="3" fill="#3c5068"/><rect x="2584" y="1394" width="7" height="2" fill="#54708e"/><rect x="2594" y="1393" width="9" height="3" fill="#3c5068"/><rect x="2595" y="1394" width="7" height="2" fill="#54708e"/><rect x="2605" y="1394" width="9" height="2" fill="#3c5068"/><rect x="2606" y="1395" width="7" height="1" fill="#54708e"/><rect x="2615" y="1394" width="9" height="2" fill="#3c5068"/><rect x="2616" y="1395" width="7" height="1" fill="#54708e"/><rect x="2626" y="1392" width="9" height="4" fill="#3c5068"/><rect x="2627" y="1394" width="7" height="2" fill="#54708e"/><rect x="2637" y="1392" width="9" height="4" fill="#3c5068"/><rect x="2638" y="1393" width="7" height="3" fill="#54708e"/><rect x="2647" y="1392" width="9" height="4" fill="#3c5068"/><rect x="2648" y="1393" width="7" height="3" fill="#54708e"/><rect x="2658" y="1391" width="9" height="5" fill="#3c5068"/><rect x="2659" y="1392" width="7" height="4" fill="#54708e"/><rect x="2669" y="1390" width="9" height="6" fill="#3c5068"/><rect x="2670" y="1391" width="7" height="5" fill="#54708e"/><rect x="2679" y="1389" width="9" height="7" fill="#3c5068"/><rect x="2680" y="1390" width="7" height="6" fill="#54708e"/><rect x="2690" y="1388" width="9" height="8" fill="#3c5068"/><rect x="2691" y="1388" width="7" height="8" fill="#54708e"/><rect x="2700" y="1347" width="9" height="49" fill="#3c5068"/><rect x="2701" y="1348" width="7" height="48" fill="#54708e"/>
</g>
<g shape-rendering="crispEdges"><rect x="71" y="1527" width="9" height="6" fill="#4c30b0"/><rect x="82" y="1527" width="9" height="6" fill="#4c30b0"/><rect x="92" y="1527" width="9" height="6" fill="#4c30b0"/><rect x="103" y="1527" width="9" height="6" fill="#4c30b0"/><rect x="114" y="1527" width="9" height="7" fill="#4c30b0"/><rect x="124" y="1527" width="9" height="7" fill="#4c30b0"/><rect x="135" y="1527" width="9" height="5" fill="#4c30b0"/><rect x="146" y="1527" width="9" height="2" fill="#4c30b0"/><rect x="156" y="1527" width="9" height="2" fill="#4c30b0"/><rect x="178" y="1525" width="9" height="2" fill="#b0309c"/><rect x="188" y="1525" width="9" height="2" fill="#b0309c"/><rect x="263" y="1527" width="9" height="1" fill="#4c30b0"/><rect x="273" y="1527" width="9" height="2" fill="#4c30b0"/><rect x="284" y="1527" width="9" height="2" fill="#4c30b0"/><rect x="295" y="1527" width="9" height="2" fill="#4c30b0"/><rect x="337" y="1525" width="9" height="2" fill="#b0309c"/><rect x="348" y="1524" width="9" height="3" fill="#b0309c"/><rect x="359" y="1523" width="9" height="4" fill="#b0309c"/><rect x="369" y="1523" width="9" height="4" fill="#b0309c"/><rect x="380" y="1523" width="9" height="4" fill="#b0309c"/><rect x="391" y="1523" width="9" height="4" fill="#b0309c"/><rect x="401" y="1524" width="9" height="3" fill="#b0309c"/><rect x="412" y="1525" width="9" height="2" fill="#b0309c"/><rect x="422" y="1525" width="9" height="2" fill="#b0309c"/><rect x="433" y="1526" width="9" height="1" fill="#b0309c"/><rect x="625" y="1527" width="9" height="2" fill="#4c30b0"/><rect x="635" y="1527" width="9" height="2" fill="#4c30b0"/><rect x="646" y="1527" width="9" height="2" fill="#4c30b0"/><rect x="657" y="1527" width="9" height="2" fill="#4c30b0"/><rect x="667" y="1527" width="9" height="1" fill="#4c30b0"/><rect x="731" y="1522" width="9" height="5" fill="#b0309c"/><rect x="742" y="1523" width="9" height="4" fill="#b0309c"/><rect x="752" y="1523" width="9" height="4" fill="#b0309c"/><rect x="763" y="1524" width="9" height="3" fill="#b0309c"/><rect x="774" y="1525" width="9" height="2" fill="#b0309c"/><rect x="784" y="1525" width="9" height="2" fill="#b0309c"/><rect x="859" y="1527" width="9" height="2" fill="#4c30b0"/><rect x="870" y="1527" width="9" height="2" fill="#4c30b0"/><rect x="880" y="1527" width="9" height="2" fill="#4c30b0"/><rect x="891" y="1527" width="9" height="2" fill="#4c30b0"/><rect x="901" y="1527" width="9" height="3" fill="#4c30b0"/><rect x="912" y="1527" width="9" height="3" fill="#4c30b0"/><rect x="923" y="1527" width="9" height="3" fill="#4c30b0"/><rect x="933" y="1527" width="9" height="3" fill="#4c30b0"/><rect x="944" y="1527" width="9" height="3" fill="#4c30b0"/><rect x="955" y="1527" width="9" height="3" fill="#4c30b0"/><rect x="965" y="1527" width="9" height="3" fill="#4c30b0"/><rect x="976" y="1527" width="9" height="2" fill="#4c30b0"/><rect x="987" y="1527" width="9" height="2" fill="#4c30b0"/><rect x="1051" y="1526" width="9" height="1" fill="#b0309c"/><rect x="1061" y="1524" width="9" height="3" fill="#b0309c"/><rect x="1072" y="1523" width="9" height="4" fill="#b0309c"/><rect x="1082" y="1523" width="9" height="4" fill="#b0309c"/><rect x="1093" y="1522" width="9" height="5" fill="#b0309c"/><rect x="1104" y="1523" width="9" height="4" fill="#b0309c"/><rect x="1114" y="1523" width="9" height="4" fill="#b0309c"/><rect x="1125" y="1524" width="9" height="3" fill="#b0309c"/><rect x="1136" y="1525" width="9" height="2" fill="#b0309c"/><rect x="1381" y="1525" width="9" height="2" fill="#b0309c"/><rect x="1391" y="1521" width="9" height="6" fill="#b0309c"/><rect x="1402" y="1520" width="9" height="7" fill="#b0309c"/><rect x="1412" y="1518" width="9" height="9" fill="#b0309c"/><rect x="1423" y="1519" width="9" height="8" fill="#b0309c"/><rect x="1434" y="1518" width="9" height="9" fill="#b0309c"/><rect x="1444" y="1519" width="9" height="8" fill="#b0309c"/><rect x="1455" y="1520" width="9" height="7" fill="#b0309c"/><rect x="1466" y="1521" width="9" height="6" fill="#b0309c"/><rect x="1476" y="1522" width="9" height="5" fill="#b0309c"/><rect x="1487" y="1522" width="9" height="5" fill="#b0309c"/><rect x="1498" y="1522" width="9" height="5" fill="#b0309c"/><rect x="1508" y="1522" width="9" height="5" fill="#b0309c"/><rect x="1519" y="1521" width="9" height="6" fill="#b0309c"/><rect x="1530" y="1522" width="9" height="5" fill="#b0309c"/><rect x="1540" y="1523" width="9" height="4" fill="#b0309c"/><rect x="1561" y="1527" width="9" height="5" fill="#4c30b0"/><rect x="1572" y="1527" width="9" height="5" fill="#4c30b0"/><rect x="1583" y="1527" width="9" height="6" fill="#4c30b0"/><rect x="1593" y="1527" width="9" height="5" fill="#4c30b0"/><rect x="1604" y="1527" width="9" height="4" fill="#4c30b0"/><rect x="1615" y="1527" width="9" height="3" fill="#4c30b0"/><rect x="1625" y="1527" width="9" height="3" fill="#4c30b0"/><rect x="1636" y="1527" width="9" height="4" fill="#4c30b0"/><rect x="1647" y="1527" width="9" height="4" fill="#4c30b0"/><rect x="1657" y="1527" width="9" height="4" fill="#4c30b0"/><rect x="1668" y="1527" width="9" height="3" fill="#4c30b0"/><rect x="1679" y="1527" width="9" height="3" fill="#4c30b0"/><rect x="1689" y="1527" width="9" height="4" fill="#4c30b0"/><rect x="1700" y="1527" width="9" height="5" fill="#4c30b0"/><rect x="1711" y="1527" width="9" height="6" fill="#4c30b0"/><rect x="1721" y="1527" width="9" height="8" fill="#4c30b0"/><rect x="1732" y="1527" width="9" height="8" fill="#4c30b0"/><rect x="1742" y="1527" width="9" height="8" fill="#4c30b0"/><rect x="1753" y="1527" width="9" height="6" fill="#4c30b0"/><rect x="1764" y="1527" width="9" height="5" fill="#4c30b0"/><rect x="1774" y="1527" width="9" height="4" fill="#4c30b0"/><rect x="1785" y="1527" width="9" height="2" fill="#4c30b0"/><rect x="1796" y="1527" width="9" height="1" fill="#4c30b0"/><rect x="1806" y="1527" width="9" height="1" fill="#4c30b0"/><rect x="1817" y="1527" width="9" height="2" fill="#4c30b0"/><rect x="1828" y="1527" width="9" height="2" fill="#4c30b0"/><rect x="1838" y="1527" width="9" height="2" fill="#4c30b0"/><rect x="1849" y="1527" width="9" height="2" fill="#4c30b0"/><rect x="1860" y="1527" width="9" height="2" fill="#4c30b0"/><rect x="1870" y="1527" width="9" height="2" fill="#4c30b0"/><rect x="1881" y="1527" width="9" height="2" fill="#4c30b0"/><rect x="1891" y="1527" width="9" height="2" fill="#4c30b0"/><rect x="1902" y="1527" width="9" height="2" fill="#4c30b0"/><rect x="1913" y="1527" width="9" height="2" fill="#4c30b0"/><rect x="1923" y="1527" width="9" height="2" fill="#4c30b0"/><rect x="1934" y="1527" width="9" height="2" fill="#4c30b0"/><rect x="1945" y="1527" width="9" height="1" fill="#4c30b0"/><rect x="1955" y="1527" width="9" height="1" fill="#4c30b0"/><rect x="2051" y="1521" width="9" height="6" fill="#b0309c"/><rect x="2062" y="1482" width="9" height="45" fill="#b0309c"/><rect x="2072" y="1471" width="9" height="56" fill="#b0309c"/><rect x="2083" y="1472" width="9" height="55" fill="#b0309c"/><rect x="2094" y="1479" width="9" height="48" fill="#b0309c"/><rect x="2104" y="1487" width="9" height="40" fill="#b0309c"/><rect x="2115" y="1494" width="9" height="33" fill="#b0309c"/><rect x="2126" y="1505" width="9" height="22" fill="#b0309c"/><rect x="2136" y="1513" width="9" height="14" fill="#b0309c"/><rect x="2147" y="1520" width="9" height="7" fill="#b0309c"/><rect x="2158" y="1525" width="9" height="2" fill="#b0309c"/><rect x="2168" y="1527" width="9" height="1" fill="#4c30b0"/><rect x="2179" y="1527" width="9" height="4" fill="#4c30b0"/><rect x="2190" y="1527" width="9" height="6" fill="#4c30b0"/><rect x="2200" y="1527" width="9" height="7" fill="#4c30b0"/><rect x="2211" y="1527" width="9" height="8" fill="#4c30b0"/><rect x="2221" y="1527" width="9" height="10" fill="#4c30b0"/><rect x="2232" y="1527" width="9" height="13" fill="#4c30b0"/><rect x="2243" y="1527" width="9" height="14" fill="#4c30b0"/><rect x="2253" y="1527" width="9" height="14" fill="#4c30b0"/><rect x="2264" y="1527" width="9" height="15" fill="#4c30b0"/><rect x="2275" y="1527" width="9" height="17" fill="#4c30b0"/><rect x="2285" y="1527" width="9" height="18" fill="#4c30b0"/><rect x="2296" y="1527" width="9" height="17" fill="#4c30b0"/><rect x="2307" y="1527" width="9" height="17" fill="#4c30b0"/><rect x="2317" y="1527" width="9" height="18" fill="#4c30b0"/><rect x="2328" y="1527" width="9" height="17" fill="#4c30b0"/><rect x="2339" y="1527" width="9" height="14" fill="#4c30b0"/><rect x="2349" y="1527" width="9" height="11" fill="#4c30b0"/><rect x="2360" y="1527" width="9" height="7" fill="#4c30b0"/><rect x="2370" y="1527" width="9" height="4" fill="#4c30b0"/><rect x="2381" y="1527" width="9" height="2" fill="#4c30b0"/><rect x="2402" y="1524" width="9" height="3" fill="#b0309c"/><rect x="2413" y="1524" width="9" height="3" fill="#b0309c"/><rect x="2424" y="1524" width="9" height="3" fill="#b0309c"/><rect x="2434" y="1524" width="9" height="3" fill="#b0309c"/><rect x="2445" y="1524" width="9" height="3" fill="#b0309c"/><rect x="2456" y="1524" width="9" height="3" fill="#b0309c"/><rect x="2466" y="1525" width="9" height="2" fill="#b0309c"/><rect x="2498" y="1527" width="9" height="2" fill="#4c30b0"/><rect x="2509" y="1527" width="9" height="4" fill="#4c30b0"/><rect x="2520" y="1527" width="9" height="4" fill="#4c30b0"/><rect x="2530" y="1527" width="9" height="4" fill="#4c30b0"/><rect x="2541" y="1527" width="9" height="3" fill="#4c30b0"/><rect x="2551" y="1527" width="9" height="3" fill="#4c30b0"/><rect x="2562" y="1527" width="9" height="2" fill="#4c30b0"/><rect x="2573" y="1527" width="9" height="3" fill="#4c30b0"/><rect x="2583" y="1527" width="9" height="5" fill="#4c30b0"/><rect x="2594" y="1527" width="9" height="6" fill="#4c30b0"/><rect x="2605" y="1527" width="9" height="4" fill="#4c30b0"/><rect x="2615" y="1527" width="9" height="3" fill="#4c30b0"/><rect x="2626" y="1527" width="9" height="1" fill="#4c30b0"/><rect x="2647" y="1527" width="9" height="1" fill="#4c30b0"/><rect x="2658" y="1527" width="9" height="3" fill="#4c30b0"/><rect x="2669" y="1527" width="9" height="4" fill="#4c30b0"/><rect x="2679" y="1527" width="9" height="6" fill="#4c30b0"/><rect x="2690" y="1527" width="9" height="7" fill="#4c30b0"/><rect x="2700" y="1527" width="9" height="7" fill="#4c30b0"/>
<rect x="28" y="1526" width="2682" height="2" fill="#6a4aa0" />
</g>
<g>
<polyline points="29.8,1527.9 65.5,1527.3 83.3,1529.7 119.0,1534.4 148.8,1539.2 178.5,1536.8 208.3,1535.0 255.9,1535.6 297.5,1537.4 333.2,1538.6 357.0,1536.8 386.8,1532.6 416.5,1529.7 452.2,1527.9 595.0,1527.9 630.7,1529.1 666.4,1531.4 714.0,1531.4 737.8,1526.7 761.6,1522.5 797.3,1520.7 833.0,1520.7 862.8,1522.5 892.5,1525.5 928.2,1527.9 963.9,1530.9 1011.5,1531.4 1053.2,1530.9 1077.0,1527.9 1106.7,1522.5 1142.4,1519.0 1178.2,1519.5 1249.6,1521.3 1380.5,1520.1 1404.3,1516.0 1428.1,1510.6 1440.0,1509.4 1475.7,1504.7 1511.4,1501.1 1547.1,1498.7 1570.9,1502.3 1606.6,1505.9 1648.3,1510.0 1678.0,1513.0 1707.8,1516.0 1737.5,1523.7 1761.3,1527.3 1785.1,1529.1 1856.5,1531.4 1927.9,1534.4 1999.3,1535.0 2035.0,1533.2 2052.9,1532.0 2064.8,1517.8 2082.6,1494.0 2100.5,1473.1 2124.3,1457.1 2148.1,1451.1 2171.9,1453.5 2213.5,1461.2 2243.3,1471.3 2273.0,1485.0 2302.8,1496.9 2332.5,1508.8 2356.3,1516.6 2380.1,1519.5 2403.9,1517.8 2439.6,1514.8 2475.3,1511.8 2511.0,1513.6 2546.7,1516.6 2582.4,1520.7 2618.2,1523.7 2653.9,1525.5 2689.6,1528.5 2704.4,1529.7" fill="none" stroke="#f08c28" stroke-width="1.6" stroke-linejoin="round" />
<polyline points="29.8,1527.9 65.5,1526.7 74.4,1534.4 95.2,1536.8 119.0,1541.6 136.9,1543.3 160.7,1539.8 184.5,1534.4 220.2,1534.4 255.9,1536.8 297.5,1539.2 333.2,1538.0 357.0,1533.2 380.8,1529.7 404.6,1527.3 440.3,1527.3 476.0,1527.9 595.0,1527.9 630.7,1530.9 654.5,1533.2 690.2,1532.0 723.0,1530.9 734.9,1522.5 755.7,1519.5 791.4,1519.5 833.0,1519.5 856.8,1523.7 880.6,1526.7 928.2,1530.9 963.9,1533.8 1011.5,1532.0 1053.2,1529.7 1071.0,1524.9 1100.8,1519.0 1136.5,1516.6 1160.3,1519.0 1190.1,1520.7 1249.6,1521.3 1309.1,1520.7 1380.5,1519.5 1395.3,1511.8 1416.2,1504.7 1440.0,1499.9 1475.7,1499.9 1499.5,1497.5 1529.3,1494.0 1547.1,1495.2 1565.0,1505.9 1582.8,1509.4 1618.5,1510.0 1648.3,1514.2 1678.0,1516.0 1707.8,1520.7 1725.6,1528.5 1743.5,1533.2 1773.2,1532.6 1797.0,1530.9 1856.5,1533.2 1927.9,1536.2 1999.3,1535.6 2035.0,1532.0 2052.9,1532.0 2058.8,1511.8 2064.8,1476.1 2070.7,1455.3 2082.6,1437.4 2094.5,1428.5 2118.3,1426.7 2130.2,1433.3 2154.0,1446.4 2189.7,1463.0 2213.5,1468.4 2237.3,1482.1 2261.1,1494.0 2284.9,1507.6 2308.7,1516.6 2326.6,1524.9 2350.4,1526.7 2380.1,1522.5 2403.9,1514.8 2439.6,1511.8 2463.4,1509.4 2487.2,1511.8 2511.0,1517.8 2540.8,1519.5 2570.5,1521.3 2594.3,1528.5 2618.2,1526.7 2642.0,1524.9 2665.8,1529.7 2683.6,1534.4 2704.4,1536.8" fill="none" stroke="#8cd850" stroke-width="1.6" stroke-linejoin="round" />
</g>
<text x="2712.5" y="492" font-size="24.4" fill="#a8a8a8" textLength="74" lengthAdjust="spacingAndGlyphs" >3,100</text>
<text x="2712.5" y="581" font-size="24.4" fill="#a8a8a8" textLength="74" lengthAdjust="spacingAndGlyphs" >3,050</text>
<text x="2712.5" y="671" font-size="24.4" fill="#a8a8a8" textLength="74" lengthAdjust="spacingAndGlyphs" >3,000</text>
<text x="2712.5" y="760" font-size="24.4" fill="#a8a8a8" textLength="74" lengthAdjust="spacingAndGlyphs" >2,950</text>
<text x="2712.5" y="850" font-size="24.4" fill="#a8a8a8" textLength="74" lengthAdjust="spacingAndGlyphs" >2,900</text>
<text x="2712.5" y="939" font-size="24.4" fill="#a8a8a8" textLength="74" lengthAdjust="spacingAndGlyphs" >2,850</text>
<text x="2712.5" y="1029" font-size="24.4" fill="#a8a8a8" textLength="74" lengthAdjust="spacingAndGlyphs" >2,800</text>
<text x="2712.5" y="1118" font-size="24.4" fill="#a8a8a8" textLength="74" lengthAdjust="spacingAndGlyphs" >2,750</text>
<text x="2712.5" y="1207" font-size="24.4" fill="#a8a8a8" textLength="74" lengthAdjust="spacingAndGlyphs" >2,700</text>
<text x="2711" y="1289.7" font-size="21.4" fill="#a8a8a8" textLength="115.5" lengthAdjust="spacingAndGlyphs" >4,000,000</text>
<text x="2711" y="1348" font-size="21.4" fill="#a8a8a8" textLength="115.5" lengthAdjust="spacingAndGlyphs" >2,000,000</text>
<clipPath id="cv"><rect x="2700" y="1380" width="160" height="16"/></clipPath>
<text x="2712.5" y="1405" font-size="24.4" fill="#a8a8a8" clip-path="url(#cv)">0</text>
<text x="2712.5" y="1440" font-size="24.4" fill="#a8a8a8" textLength="47.5" lengthAdjust="spacingAndGlyphs" >100</text>
<text x="2712.5" y="1536.5" font-size="24.4" fill="#a8a8a8" >0</text>
<text x="2711" y="1633" font-size="24.4" fill="#a8a8a8" textLength="61" lengthAdjust="spacingAndGlyphs" >-100</text>
<text x="71" y="1669.8" font-size="24.4" fill="#a8a8a8" textLength="77" lengthAdjust="spacingAndGlyphs" text-anchor="middle" >09:00</text>
<text x="327" y="1669.8" font-size="24.4" fill="#a8a8a8" textLength="77" lengthAdjust="spacingAndGlyphs" text-anchor="middle" >11:00</text>
<text x="465" y="1669.8" font-size="24.4" fill="#a8a8a8" textLength="77" lengthAdjust="spacingAndGlyphs" text-anchor="middle" >13:00</text>
<text x="731" y="1669.8" font-size="24.4" fill="#a8a8a8" textLength="77" lengthAdjust="spacingAndGlyphs" text-anchor="middle" >09:00</text>
<text x="987" y="1669.8" font-size="24.4" fill="#a8a8a8" textLength="77" lengthAdjust="spacingAndGlyphs" text-anchor="middle" >11:00</text>
<text x="1125" y="1669.8" font-size="24.4" fill="#a8a8a8" textLength="77" lengthAdjust="spacingAndGlyphs" text-anchor="middle" >13:00</text>
<text x="1391" y="1669.8" font-size="24.4" fill="#a8a8a8" textLength="77" lengthAdjust="spacingAndGlyphs" text-anchor="middle" >09:00</text>
<text x="1647" y="1669.8" font-size="24.4" fill="#a8a8a8" textLength="77" lengthAdjust="spacingAndGlyphs" text-anchor="middle" >11:00</text>
<text x="1785" y="1669.8" font-size="24.4" fill="#a8a8a8" textLength="77" lengthAdjust="spacingAndGlyphs" text-anchor="middle" >13:00</text>
<text x="2051" y="1669.8" font-size="24.4" fill="#a8a8a8" textLength="77" lengthAdjust="spacingAndGlyphs" text-anchor="middle" >09:00</text>
<text x="2307" y="1669.8" font-size="24.4" fill="#a8a8a8" textLength="77" lengthAdjust="spacingAndGlyphs" text-anchor="middle" >11:00</text>
<text x="2445" y="1669.8" font-size="24.4" fill="#a8a8a8" textLength="77" lengthAdjust="spacingAndGlyphs" text-anchor="middle" >13:00</text>
<text x="32" y="1303" font-size="25.6" fill="#9a9a9a" textLength="77" lengthAdjust="spacingAndGlyphs" >出来高</text>
<text x="32.5" y="1438.7" font-size="25.6" fill="#9a9a9a" textLength="77" lengthAdjust="spacingAndGlyphs" >MACD</text>
<rect x="2706" y="398" width="100" height="18" fill="#dcdcdc" />
<clipPath id="ct"><rect x="2706" y="398" width="100" height="18"/></clipPath>
<text x="2712" y="409.5" font-size="24.4" fill="#1c1c1c" textLength="86.5" lengthAdjust="spacingAndGlyphs" clip-path="url(#ct)">3,144.9</text>
<path d="M2708,625 L2724,606 H2840 V644 H2724 Z" fill="#e9dcc9"/>
<text x="2729" y="635.8" font-size="24.4" fill="#1c1c1c" textLength="99.5" lengthAdjust="spacingAndGlyphs" >3,020.0</text>
<rect x="1711" y="398" width="2" height="7" fill="#3056a4" />
<rect x="1696" y="404" width="32" height="26" rx="3" fill="#3056a4"/>
<text x="1712" y="425" font-size="20" fill="#fff" font-weight="bold" text-anchor="middle" >N</text>
<rect x="2041" y="398" width="2" height="7" fill="#3056a4" />
<rect x="2026" y="404" width="32" height="26" rx="3" fill="#3056a4"/>
<text x="2042" y="425" font-size="20" fill="#fff" font-weight="bold" text-anchor="middle" >N</text>
<rect x="2297" y="398" width="2" height="7" fill="#3056a4" />
<rect x="2282" y="404" width="32" height="26" rx="3" fill="#3056a4"/>
<text x="2298" y="425" font-size="20" fill="#fff" font-weight="bold" text-anchor="middle" >N</text>
<rect x="2371" y="398" width="2" height="7" fill="#3056a4" />
<rect x="2356" y="404" width="32" height="26" rx="3" fill="#3056a4"/>
<text x="2372" y="425" font-size="20" fill="#fff" font-weight="bold" text-anchor="middle" >N</text>
<rect x="2425" y="398" width="2" height="7" fill="#3056a4" />
<rect x="2410" y="404" width="32" height="26" rx="3" fill="#3056a4"/>
<text x="2426" y="425" font-size="20" fill="#fff" font-weight="bold" text-anchor="middle" >N</text>
<rect x="2511" y="398" width="2" height="7" fill="#3056a4" />
<rect x="2496" y="404" width="32" height="26" rx="3" fill="#3056a4"/>
<text x="2512" y="425" font-size="20" fill="#fff" font-weight="bold" text-anchor="middle" >N</text>
<rect x="2659" y="398" width="2" height="7" fill="#3056a4" />
<rect x="2644" y="404" width="32" height="26" rx="3" fill="#3056a4"/>
<text x="2660" y="425" font-size="20" fill="#fff" font-weight="bold" text-anchor="middle" >N</text>
<text x="2061" y="452.5" font-size="21.4" fill="#f07468" textLength="139" lengthAdjust="spacingAndGlyphs" text-anchor="end" >09/21 09:05</text>
<text x="2061" y="481" font-size="21.4" fill="#f07468" textLength="128" lengthAdjust="spacingAndGlyphs" text-anchor="end" >高値 3098.0</text>
<text x="964.5" y="1195.5" font-size="21.4" fill="#72caee" textLength="139" lengthAdjust="spacingAndGlyphs" text-anchor="end" >09/16 10:50</text>
<text x="964.5" y="1223.5" font-size="21.4" fill="#72caee" textLength="128" lengthAdjust="spacingAndGlyphs" text-anchor="end" >安値 2713.5</text>
<g stroke="#e8e8e8" stroke-width="2" fill="none">
<line x1="2079" y1="598" x2="2142" y2="743"/>
<line x1="2137" y1="645.5" x2="2289.6" y2="921"/>
<circle cx="2076" cy="592" r="6"/><circle cx="2133.4" cy="640" r="6"/>
</g>
<rect x="1896" y="742.5" width="246.5" height="154" fill="#fff" stroke="#b8b8b8" stroke-width="1.5"/>
<text x="1904" y="777.4" font-size="24.4" fill="#1a1a28" textLength="81" lengthAdjust="spacingAndGlyphs" >3040U</text>
<text x="1904" y="811.7" font-size="24.4" fill="#1a1a28" textLength="152" lengthAdjust="spacingAndGlyphs" >3049(3045)</text>
<text x="1904" y="846" font-size="24.4" fill="#1a1a28" textLength="82" lengthAdjust="spacingAndGlyphs" >3054G</text>
<text x="1904" y="880.5" font-size="24.4" fill="#1a1a28" textLength="52" lengthAdjust="spacingAndGlyphs" >負-9</text>
<g stroke="#b4b4b4" stroke-width="2" fill="none">
<circle cx="2289.6" cy="921" r="6"/>
<circle cx="2289.6" cy="993.8" r="6"/>
<circle cx="2289.6" cy="1066.5" r="6"/>
<circle cx="2375" cy="921" r="6"/>
<circle cx="2375" cy="1066.5" r="6"/>
<circle cx="2460.6" cy="921" r="6"/>
<circle cx="2460.6" cy="993.8" r="6"/>
<circle cx="2460.6" cy="1066.5" r="6"/>
</g>
<rect x="2289.6" y="921" width="171" height="145.5" fill="#fff" stroke="#b8b8b8" stroke-width="1.5"/>
<text x="2300" y="958.5" font-size="24.4" fill="#1a1a28" textLength="82" lengthAdjust="spacingAndGlyphs" >3053U</text>
<text x="2300" y="992" font-size="24.4" fill="#1a1a28" textLength="83" lengthAdjust="spacingAndGlyphs" >3053G</text>
<text x="2300" y="1026.4" font-size="24.4" fill="#1a1a28" >0</text>
</g>
<rect x="0" y="1718" width="2880" height="2" fill="#fbfdff" />
<rect x="0" y="1720" width="2880" height="80" fill="url(#gtask)" />
<g fill="#000"><path d="M32,1748.6 L45.2,1746.8 V1759.3 H32 Z M46.6,1746.6 L64.3,1744 V1759.3 H46.6 Z M32,1760.7 H45.2 V1773.2 L32,1771.4 Z M46.6,1760.7 H64.3 V1776 L46.6,1773.4 Z"/></g>
<rect x="96" y="1720" width="688" height="80" fill="#c6c6c6" />
<rect x="98" y="1722" width="684" height="78" fill="#fff" />
<g stroke="#000" stroke-width="2.6" fill="none" stroke-linecap="butt"><circle cx="141" cy="1754.5" r="9.6"/><line x1="134" y1="1761.8" x2="120.6" y2="1775.4"/></g>
<text x="177" y="1770.5" font-size="25.5" fill="#2a2a2a" font-family="'Liberation Sans','Noto Sans CJK JP',sans-serif" textLength="224" lengthAdjust="spacingAndGlyphs" >ここに入力して検索</text>
<g stroke="#000" stroke-width="2" fill="none"><rect x="819" y="1751.5" width="19" height="17"/><path d="M817,1745 V1749 H840 V1745 M817,1775 V1771 H840 V1775"/><path d="M845,1745 V1752 M845,1760 V1775"/></g><circle cx="845" cy="1756" r="3" fill="#000"/>
<rect x="892" y="1732" width="2.4" height="56" fill="#000" />
<rect x="898" y="1732" width="2.4" height="56" fill="#000" />
<rect x="1635" y="1732" width="2.2" height="56" fill="#000" />
<rect x="1641" y="1732" width="2.2" height="56" fill="#000" />
<g><path d="M949,1745 q0,-2.4 2.4,-2.4 h13 l4,3.4 h20 q2.6,0 2.6,2.6 v3 h-42 z" fill="#e8a812"/><rect x="949" y="1747.5" width="42" height="28.5" rx="2" fill="#ffd764"/><path d="M956,1777 v-13 q0,-3 3,-3 h22 q3,0 3,3 v13 h-7 v-9 h-14 v9 z" fill="#3b93dc"/></g>
<g><circle cx="1068" cy="1760" r="22.2" fill="#fff"/><path d="M1068,1760 L1048.8,1748.9 A22.2,22.2 0 0 1 1087.2,1748.9 Z" fill="#db4437"/><path d="M1068,1737.8 A22.2,22.2 0 0 1 1087.2,1748.9 L1068,1748.9 Z" fill="#db4437"/><path d="M1087.2,1748.9 A22.2,22.2 0 0 1 1068,1782.2 L1077.6,1765.5 Z" fill="#ffcd40"/><path d="M1087.2,1748.9 H1068 L1077.6,1765.5 Z" fill="#ffcd40"/><path d="M1068,1782.2 A22.2,22.2 0 0 1 1048.8,1748.9 L1058.4,1765.5 L1068,1771 L1077.6,1765.5 Z" fill="#0f9d58"/><circle cx="1068" cy="1760" r="10.2" fill="#fff"/><circle cx="1068" cy="1760" r="8.2" fill="#4285f4"/></g>
<rect x="1028" y="1796" width="80" height="4" fill="#0a6cd6" />
<rect x="1142" y="1736" width="48" height="48" fill="#0078d7" />
<path d="M1154,1751.5 L1174.5,1749.5 V1770.5 L1154,1768.5 Z" fill="#fff"/><path d="M1176.3,1754.5 h3.2 v4.3 h-3.2 z M1176.3,1760.2 h3.2 v4.3 h-3.2 z" fill="#fff"/>
<text x="1157" y="1762.5" font-size="6.5" fill="#0078d7" font-family="'Liberation Sans','Noto Sans CJK JP',sans-serif" font-weight="bold" textLength="15" lengthAdjust="spacingAndGlyphs" >12:00</text>
<g><rect x="1246" y="1739" width="42" height="30" fill="#2f7db0"/><rect x="1248.5" y="1741.5" width="37" height="25" fill="#53bdf2"/><path d="M1248.5,1766.5 L1285.5,1741.5 V1766.5 Z" fill="#43b0ec"/><circle cx="1250.5" cy="1764.5" r="9" fill="#cfe3ef" fill-opacity="0.75" stroke="#8a959c" stroke-width="2"/><line x1="1257.5" y1="1771.5" x2="1268.5" y2="1782.5" stroke="#70777c" stroke-width="4" stroke-linecap="round"/></g>
<rect x="1314" y="1720" width="89" height="76" fill="#e9f2f6" />
<rect x="1403" y="1720" width="1.5" height="76" fill="#b9ccd6" />
<rect x="1314" y="1796" width="96" height="4" fill="#0a6cd6" />
<rect x="1402.5" y="1796" width="7.5" height="4" fill="#58a0e4" />
<circle cx="1361.8" cy="1759.5" r="23" fill="#000"/>
<g fill="#fff"><rect x="1348" y="1757.5" width="3.6" height="10"/><rect x="1353.8" y="1760.5" width="3.6" height="14.5"/><rect x="1360" y="1752" width="3.6" height="12"/><rect x="1365.8" y="1755.5" width="3.6" height="10.5"/><rect x="1372" y="1748" width="3.6" height="10.5"/><rect x="1348.5" y="1753" width="7" height="1"/></g>
<text x="1348.5" y="1752" font-size="8.5" fill="#fff" font-family="'Liberation Sans','Noto Sans CJK JP',sans-serif" font-weight="bold" >R</text>
<defs><linearGradient id="gph" x1="0" y1="0" x2="1" y2="1"><stop offset="0" stop-color="#27b0ec"/><stop offset="1" stop-color="#5a7fe0"/></linearGradient></defs>
<g><rect x="1439" y="1739" width="42" height="42" rx="2.5" fill="url(#gph)"/><path d="M1439,1781 V1765 L1452.5,1753.5 L1481,1779 V1781 Z" fill="#114a8c"/><path d="M1463,1763 L1469,1758 L1481,1770 V1779 Z" fill="#3d63c4"/><circle cx="1467" cy="1749" r="4.2" fill="#f4f4f4"/></g>
<rect x="1420" y="1796" width="80" height="4" fill="#0a6cd6" />
<text x="1659" y="1767.2" font-size="21.5" fill="#111" font-family="'Liberation Sans','Noto Sans CJK JP',sans-serif" textLength="105.5" lengthAdjust="spacingAndGlyphs" >デスクトップ</text>
<text x="1780" y="1739.5" font-size="26" fill="#6a6ab4" font-family="'Liberation Sans','Noto Sans CJK JP',sans-serif" font-weight="bold" textLength="16" lengthAdjust="spacingAndGlyphs" >»</text>
<defs><linearGradient id="gmoon" x1="0.2" y1="0" x2="0.6" y2="1"><stop offset="0" stop-color="#ffe000"/><stop offset="1" stop-color="#ffa400"/></linearGradient></defs>
<mask id="mmoon"><rect x="1880" y="1735" width="60" height="50" fill="#fff"/><circle cx="1899.1" cy="1749.5" r="17.7" fill="#000"/></mask>
<circle cx="1911.3" cy="1760" r="18.2" fill="url(#gmoon)" mask="url(#mmoon)"/>
<path d="M1894.5,1755.5 q-3.4,-0.4 -3.2,-3.4 q0.4,-2.8 3.4,-2.8 q1.4,-3.8 5.2,-3.6 q3.4,0.2 4.4,3.2 q2.2,-0.6 3.6,1 q1.6,2 0.4,4.2 q-0.8,1.4 -3,1.4 z" fill="#c2e0f5"/><path d="M1899,1750.5 q2,-3.4 6,-2.6" fill="none" stroke="#eef8ff" stroke-width="1.6"/>
<text x="1951" y="1772" font-size="27.4" fill="#111" font-family="'Liberation Sans','Noto Sans CJK JP',sans-serif" textLength="58.5" lengthAdjust="spacingAndGlyphs" >22°C</text>
<text x="2028" y="1770.6" font-size="24.5" fill="#111" font-family="'Liberation Sans','Noto Sans CJK JP',sans-serif" textLength="150.5" lengthAdjust="spacingAndGlyphs" >晴れのちくもり</text>
<g stroke="#111" stroke-width="2.2" fill="none"><path d="M2223.5,1766 L2235,1754 L2246.5,1766"/><rect x="2290" y="1751" width="14" height="17" rx="4"/><path d="M2304,1757.5 l6,-3.5 v11.5 l-6,-3.5"/><path d="M2291,1748 q8.5,-5 17,0 M2291,1771.5 q8.5,5 17,0"/></g>
<g><rect x="2358" y="1751.5" width="18.5" height="14.5" fill="none" stroke="#111" stroke-width="2.4"/><rect x="2361" y="1754.5" width="12.5" height="8.5" fill="#111"/><rect x="2377.5" y="1756" width="2.2" height="5.5" fill="#111"/><path d="M2349.5,1748.5 v4 M2354.5,1748.5 v4 M2347.5,1752.5 h9 v3 q0,3 -3,3.4 v8.5 h-3 v-8.5 q-3,-0.4 -3,-3.4 z" fill="#111" stroke="#111" stroke-width="1.6"/></g>
<g stroke="#111" stroke-width="2.3" fill="none" stroke-linecap="butt"><path d="M2418,1774 A22,22 0 0 1 2440,1752"/><path d="M2424.5,1774 A15.5,15.5 0 0 1 2440,1758.5"/><path d="M2431,1774 A9,9 0 0 1 2440,1765"/></g><circle cx="2438.2" cy="1771.6" r="3" fill="#111"/>
<g><path d="M2476,1756 h5.5 l7,-7 v22 l-7,-7 h-5.5 z" fill="none" stroke="#111" stroke-width="2"/><path d="M2493,1755.5 q3.4,4.5 0,9" fill="none" stroke="#111" stroke-width="2"/><path d="M2497.5,1751.5 q6,8.5 0,17" fill="none" stroke="#8a8f98" stroke-width="1.8"/><path d="M2502,1748 q8.4,12 0,24" fill="none" stroke="#a8adb6" stroke-width="1.6"/></g>
<text x="2532" y="1775.9" font-size="42.5" fill="#111" font-family="'Liberation Sans','Noto Sans CJK JP',sans-serif" textLength="25" lengthAdjust="spacingAndGlyphs" >A</text>
<rect x="2587" y="1744.5" width="32" height="31.5" fill="#fff" stroke="#9a9a9a" stroke-width="1"/>
<circle cx="2603" cy="1760.3" r="13" fill="#222"/>
<text x="2604.5" y="1770" font-size="25" fill="#fff" font-family="'Liberation Sans','Noto Sans CJK JP',sans-serif" text-anchor="middle" >J</text>
<text x="2657.5" y="1750.6" font-size="22" fill="#111" font-family="'Liberation Sans','Noto Sans CJK JP',sans-serif" textLength="97.5" lengthAdjust="spacingAndGlyphs" >10:18 PM</text>
<text x="2652.5" y="1789.4" font-size="22" fill="#111" font-family="'Liberation Sans','Noto Sans CJK JP',sans-serif" textLength="106" lengthAdjust="spacingAndGlyphs" >9/21/2021</text>
<g><path d="M2798,1744 h32 v25 h-16 l0,6.5 l-6.5,-6.5 h-9.5 z" fill="#111"/><g stroke="#dfe6ee" stroke-width="2"><path d="M2803.5,1751.5 h21 M2803.5,1757 h21 M2803.5,1762.5 h13"/></g><circle cx="2824.5" cy="1769" r="7.2" fill="#111" stroke="#dfe6ee" stroke-width="1.6"/><path d="M2826.5,1764.4 a5,5 0 1 0 3,6.4 a4.2,4.2 0 0 1 -3,-6.4 z" fill="#dfe6ee"/></g>
<rect x="2870" y="1720" width="2" height="80" fill="#a4a8b0" />
</svg>
</body></html>
